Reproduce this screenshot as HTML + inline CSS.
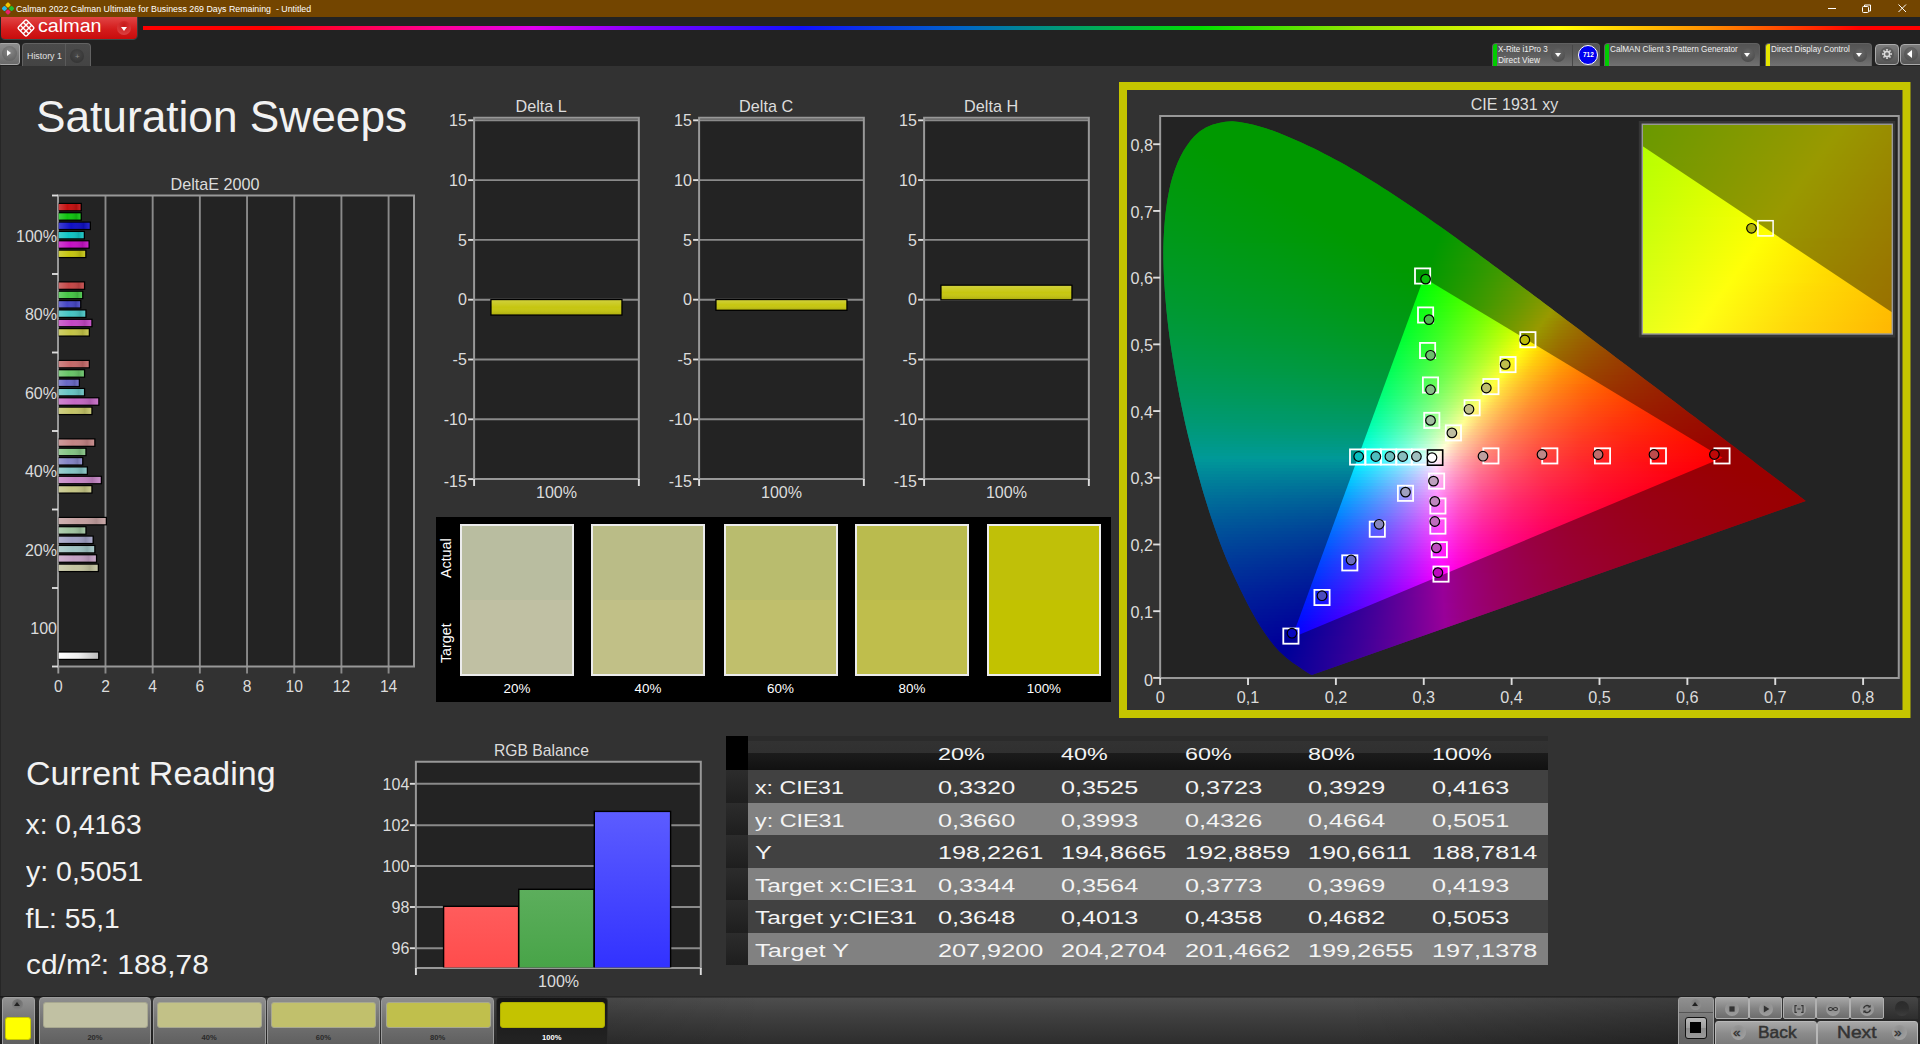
<!DOCTYPE html>
<html lang="en"><head><meta charset="utf-8"><title>Calman 2022 - Saturation Sweeps</title>
<style>
*{box-sizing:border-box}
html,body{margin:0;padding:0}
body{width:1920px;height:1044px;overflow:hidden;background:#323232;font-family:"Liberation Sans",sans-serif;color:#e8e8e8;position:relative}
.abs{position:absolute}
svg{position:absolute;left:0;top:0;overflow:visible}
svg text{font-family:"Liberation Sans",sans-serif}
.t{position:absolute;white-space:nowrap;transform-origin:0 0;line-height:1}
#titlebar{left:0;top:0;width:1920px;height:17px;background:#734500}
#toolbar{left:0;top:17px;width:1920px;height:49px;background:#222}
#main{left:0;top:66px;width:1920px;height:930px;background:#323232;border-left:1px solid #262626}
#bottombar{left:0;top:996px;width:1920px;height:48px;background:linear-gradient(90deg,rgba(0,0,0,.4),rgba(0,0,0,0) 40%,rgba(0,0,0,0) 70%,rgba(0,0,0,.38)),linear-gradient(#2a2a2a 0,#2a2a2a 2%,#4d4d4d 5%,#404040 40%,#2d2d2d 100%)}
.btn{position:absolute;background:linear-gradient(#8e8e8e,#6a6a6a 55%,#5c5c5c);border:1px solid #9a9a9a;border-radius:3px}
.dev{position:absolute;top:43px;height:23px;background:linear-gradient(#545454,#5c5c5c 45%,#727272);border-radius:4px 4px 0 0;border:1px solid #606060;border-bottom:none}
.dd{position:absolute;width:14px;height:14px;border-radius:50%;background:radial-gradient(circle at 50% 35%,#6a6a6a,#444)}
.dd:after{content:"";position:absolute;left:3.5px;top:5.5px;border:3.5px solid transparent;border-top:4px solid #fff;border-bottom:none}
</style></head>
<body>
<div id="titlebar" class="abs"></div><div id="toolbar" class="abs"></div><div id="main" class="abs"></div><div id="bottombar" class="abs"></div>
<svg width="14" height="15" style="left:1px;top:1px" viewBox="0 0 14 15"><g transform="translate(7 7.5) rotate(45)"><rect x="-4.6" y="-4.6" width="4.2" height="4.2" rx="1" fill="#f2c500"/><rect x="0.4" y="-4.6" width="4.2" height="4.2" rx="1" fill="#22c030"/><rect x="-4.6" y="0.4" width="4.2" height="4.2" rx="1" fill="#25b8e8"/><rect x="0.4" y="0.4" width="4.2" height="4.2" rx="1" fill="#e8206a"/></g></svg>
<span class="t" style="left:16.2px;top:4.62px;font-size:9.08px;color:#fff;transform:scaleX(0.97);">Calman 2022 Calman Ultimate for Business 269 Days Remaining&nbsp; - Untitled</span>
<svg width="100" height="17" style="left:1820px;top:0" viewBox="1820 0 100 17" fill="none" stroke="#fff" stroke-width="1"><path d="M1828 8.5h8"/><rect x="1862.5" y="6.5" width="6" height="6" rx="1"/><path d="M1864.5 6.5v-1.5h6v6h-2"/><path d="M1898.5 4.5l7.5 7.5M1906 4.5l-7.5 7.5"/></svg>
<div class="abs" style="left:1px;top:17px;width:136px;height:22px;background:linear-gradient(#e14545,#d41c1c 55%,#c80c0c);border-radius:0 0 4px 4px;box-shadow:0 1px 0 #3a4a4a,1px 0 0 #3a3a3a"></div>
<svg width="20" height="20" style="left:16px;top:18px" viewBox="0 0 20 20"><g transform="translate(10 10) rotate(45)" fill="none" stroke="#fff" stroke-width="1.4"><rect x="-6" y="-6" width="12" height="12" rx="1.5"/><path d="M-2-6v12M2-6v12M-6-2h12M-6 2h12"/></g></svg>
<span class="t" style="left:37.5px;top:17.49px;font-size:18.8px;color:#fff;transform:scaleX(1.05);">calman</span>
<div class="abs" style="left:117px;top:21px;width:14px;height:14px;border-radius:50%;background:radial-gradient(circle at 50% 30%,#c81818,#e04a4a)"></div>
<div class="abs" style="left:120.5px;top:26.5px;border:3.5px solid transparent;border-top:4px solid #fff;border-bottom:none"></div>
<div class="abs" style="left:143px;top:26.3px;width:1777px;height:4px;background:linear-gradient(90deg,#f00 0,#f00 7%,#ff0096 16.7%,#e000f0 22%,#8000ff 28%,#1010ff 37%,#0064c8 46%,#008c8c 50.2%,#00e000 59.5%,#96e600 68.5%,#ff0 79.7%,#ff8c00 88.2%,#f00 96.6%,#f00 100%)"></div>
<div class="btn" style="left:-2px;top:43px;width:22px;height:22px;background:linear-gradient(#8e8e8e,#6a6a6a);border-color:#a8a8a8"></div>
<div class="abs" style="left:2px;top:46px;width:15px;height:15px;border-radius:50%;background:radial-gradient(circle at 50% 35%,#888,#5a5a5a)"></div>
<div class="abs" style="left:7px;top:49.8px;border:3.6px solid transparent;border-left:4.6px solid #fff;border-right:none"></div>
<div class="abs" style="left:22px;top:43px;width:69px;height:23px;background:linear-gradient(#4a4a4a,#444);border:1px solid #626262;border-bottom:none;border-radius:4px 4px 0 0"></div>
<div class="abs" style="left:65px;top:44px;width:1px;height:22px;background:#5a5a5a"></div>
<span class="t" style="left:26.5px;top:51.7px;font-size:9.22px;color:#e0e0e0;transform:scaleX(0.96);">History 1</span>
<div class="abs" style="left:70px;top:49px;width:14px;height:14px;border-radius:50%;background:radial-gradient(circle at 50% 40%,#4a4a4a,#2e2e2e)"></div>
<span class="t" style="left:75px;top:53.23px;font-size:8px;color:#888;">+</span>
<div class="dev" style="left:1492px;width:107.5px"></div>
<div class="abs" style="left:1493px;top:44px;width:4px;height:22px;background:#0c0;border-radius:3px 0 0 0"></div>
<span class="t" style="left:1498.3px;top:45.82px;font-size:8.24px;color:#f0f0f0;transform:scaleX(0.97);">X-Rite i1Pro 3</span>
<span class="t" style="left:1498.3px;top:56.82px;font-size:8.24px;color:#f0f0f0;transform:scaleX(1.01);">Direct View</span>
<div class="dd" style="left:1551px;top:47.5px"></div>
<div class="abs" style="left:1572px;top:45px;width:1px;height:21px;background:#484848"></div>
<div class="abs" style="left:1577.5px;top:44.5px;width:20.5px;height:20.5px;border-radius:50%;background:#0000f0;border:1px solid #fff"></div>
<span class="t" style="left:1582.5px;top:51.08px;font-size:7.82px;color:#fff;transform:scaleX(0.83);font-weight:bold;">712</span>
<div class="dev" style="left:1603.6px;width:156.4px"></div>
<div class="abs" style="left:1604.6px;top:44px;width:4px;height:22px;background:#0c0;border-radius:3px 0 0 0"></div>
<span class="t" style="left:1609.9px;top:45.82px;font-size:8.24px;color:#f0f0f0;transform:scaleX(0.99);">CalMAN Client 3 Pattern Generator</span>
<div class="dd" style="left:1740.5px;top:47.5px"></div>
<div class="dev" style="left:1764.6px;width:107.4px"></div>
<div class="abs" style="left:1765.6px;top:44px;width:4px;height:22px;background:#e6e600;border-radius:3px 0 0 0"></div>
<span class="t" style="left:1770.9px;top:45.82px;font-size:8.24px;color:#f0f0f0;transform:scaleX(0.99);">Direct Display Control</span>
<div class="dd" style="left:1852.5px;top:47.5px"></div>
<div class="btn" style="left:1874.5px;top:43.5px;width:24.5px;height:21.5px;background:linear-gradient(#7c7c7c,#555);border-color:#aaa;border-radius:4px"></div>
<div class="abs" style="left:1880px;top:47px;width:14px;height:14px;border-radius:50%;background:radial-gradient(circle at 50% 35%,#6e6e6e,#484848)"></div>
<svg width="12" height="12" style="left:1881px;top:48px" viewBox="-6 -6 12 12"><g fill="none" stroke="#ddd"><circle r="2.6" stroke-width="1.5"/><path d="M0 -3.2V-5" stroke-width="1.6" transform="rotate(0)"/><path d="M0 -3.2V-5" stroke-width="1.6" transform="rotate(45)"/><path d="M0 -3.2V-5" stroke-width="1.6" transform="rotate(90)"/><path d="M0 -3.2V-5" stroke-width="1.6" transform="rotate(135)"/><path d="M0 -3.2V-5" stroke-width="1.6" transform="rotate(180)"/><path d="M0 -3.2V-5" stroke-width="1.6" transform="rotate(225)"/><path d="M0 -3.2V-5" stroke-width="1.6" transform="rotate(270)"/><path d="M0 -3.2V-5" stroke-width="1.6" transform="rotate(315)"/></g></svg>
<div class="btn" style="left:1899.5px;top:43.5px;width:24px;height:21.5px;background:linear-gradient(#7c7c7c,#555);border-color:#aaa;border-radius:4px"></div>
<div class="abs" style="left:1904px;top:47px;width:14px;height:14px;border-radius:50%;background:radial-gradient(circle at 50% 35%,#6e6e6e,#484848)"></div>
<div class="abs" style="left:1906.5px;top:50px;border:4px solid transparent;border-right:5px solid #fff;border-left:none"></div>
<span class="t" style="left:36.3px;top:94.31px;font-size:45.11px;color:#f2f2f2;transform:scaleX(0.98);">Saturation Sweeps</span>
<svg width="1920" height="1044" viewBox="0 0 1920 1044">
<defs><linearGradient id="bh" x1="0" x2="1" y1="0" y2="0"><stop offset="0" stop-color="#fff" stop-opacity=".2"/><stop offset=".4" stop-color="#fff" stop-opacity="0"/><stop offset=".8" stop-color="#000" stop-opacity=".12"/><stop offset="1" stop-color="#fff" stop-opacity=".1"/></linearGradient><linearGradient id="bv" x1="0" x2="0" y1="0" y2="1"><stop offset="0" stop-color="#fff" stop-opacity=".18"/><stop offset=".5" stop-color="#fff" stop-opacity="0"/><stop offset="1" stop-color="#000" stop-opacity=".12"/></linearGradient><linearGradient id="bv2" x1="0" x2="0" y1="0" y2="1"><stop offset="0" stop-color="#fff" stop-opacity=".12"/><stop offset="1" stop-color="#000" stop-opacity=".05"/></linearGradient></defs>
<rect x="58" y="195.5" width="356" height="471.0" fill="#232323"/>
<path d="M105.49 195.5V673.5" stroke="#8a8a8a" stroke-width="1.9"/>
<path d="M152.67 195.5V673.5" stroke="#8a8a8a" stroke-width="1.9"/>
<path d="M199.86 195.5V673.5" stroke="#8a8a8a" stroke-width="1.9"/>
<path d="M247.04 195.5V673.5" stroke="#8a8a8a" stroke-width="1.9"/>
<path d="M294.23 195.5V673.5" stroke="#8a8a8a" stroke-width="1.9"/>
<path d="M341.41 195.5V673.5" stroke="#8a8a8a" stroke-width="1.9"/>
<path d="M388.6 195.5V673.5" stroke="#8a8a8a" stroke-width="1.9"/>
<path d="M58.3 666.5V673.5" stroke="#989898" stroke-width="1.9"/>
<path d="M58 195.5H414V666.5H58Z" fill="none" stroke="#989898" stroke-width="2"/>
<path d="M52 195.5H58" stroke="#ddd" stroke-width="1.9"/>
<path d="M52 274H58" stroke="#ddd" stroke-width="1.9"/>
<path d="M52 352.5H58" stroke="#ddd" stroke-width="1.9"/>
<path d="M52 431H58" stroke="#ddd" stroke-width="1.9"/>
<path d="M52 509.5H58" stroke="#ddd" stroke-width="1.9"/>
<path d="M52 588H58" stroke="#ddd" stroke-width="1.9"/>
<path d="M52 666.5H58" stroke="#ddd" stroke-width="1.9"/>
<text x="215" y="189.8" font-size="16.2" fill="#dcdcdc" text-anchor="middle">DeltaE 2000</text>
<text x="57" y="241.85" font-size="16.06" fill="#dcdcdc" text-anchor="end">100%</text>
<text x="57" y="320.35" font-size="16.06" fill="#dcdcdc" text-anchor="end">80%</text>
<text x="57" y="398.85" font-size="16.06" fill="#dcdcdc" text-anchor="end">60%</text>
<text x="57" y="477.35" font-size="16.06" fill="#dcdcdc" text-anchor="end">40%</text>
<text x="57" y="555.85" font-size="16.06" fill="#dcdcdc" text-anchor="end">20%</text>
<text x="57" y="634.35" font-size="16.06" fill="#dcdcdc" text-anchor="end">100</text>
<text x="58.3" y="691.5" font-size="15.64" fill="#dcdcdc" text-anchor="middle">0</text>
<text x="105.49" y="691.5" font-size="15.64" fill="#dcdcdc" text-anchor="middle">2</text>
<text x="152.67" y="691.5" font-size="15.64" fill="#dcdcdc" text-anchor="middle">4</text>
<text x="199.86" y="691.5" font-size="15.64" fill="#dcdcdc" text-anchor="middle">6</text>
<text x="247.04" y="691.5" font-size="15.64" fill="#dcdcdc" text-anchor="middle">8</text>
<text x="294.23" y="691.5" font-size="15.64" fill="#dcdcdc" text-anchor="middle">10</text>
<text x="341.41" y="691.5" font-size="15.64" fill="#dcdcdc" text-anchor="middle">12</text>
<text x="388.6" y="691.5" font-size="15.64" fill="#dcdcdc" text-anchor="middle">14</text>
<rect x="58.7" y="202.8" width="23.2" height="8.6" fill="#000"/>
<rect x="58.7" y="204" width="21.9" height="6.2" fill="#c41010"/><rect x="58.7" y="204" width="21.9" height="6.2" fill="url(#bh)"/>
<rect x="58.7" y="212.15" width="23.2" height="8.6" fill="#000"/>
<rect x="58.7" y="213.35" width="21.9" height="6.2" fill="#10c410"/><rect x="58.7" y="213.35" width="21.9" height="6.2" fill="url(#bh)"/>
<rect x="58.7" y="221.5" width="32.3" height="8.6" fill="#000"/>
<rect x="58.7" y="222.7" width="31" height="6.2" fill="#1010c4"/><rect x="58.7" y="222.7" width="31" height="6.2" fill="url(#bh)"/>
<rect x="58.7" y="230.85" width="26.3" height="8.6" fill="#000"/>
<rect x="58.7" y="232.05" width="25" height="6.2" fill="#10c4c4"/><rect x="58.7" y="232.05" width="25" height="6.2" fill="url(#bh)"/>
<rect x="58.7" y="240.2" width="31.05" height="8.6" fill="#000"/>
<rect x="58.7" y="241.4" width="29.75" height="6.2" fill="#c410c4"/><rect x="58.7" y="241.4" width="29.75" height="6.2" fill="url(#bh)"/>
<rect x="58.7" y="249.55" width="27.8" height="8.6" fill="#000"/>
<rect x="58.7" y="250.75" width="26.5" height="6.2" fill="#c4c410"/><rect x="58.7" y="250.75" width="26.5" height="6.2" fill="url(#bh)"/>
<rect x="58.7" y="281.3" width="26.5" height="8.6" fill="#000"/>
<rect x="58.7" y="282.5" width="25.2" height="6.2" fill="#c44646"/><rect x="58.7" y="282.5" width="25.2" height="6.2" fill="url(#bh)"/>
<rect x="58.7" y="290.65" width="24.7" height="8.6" fill="#000"/>
<rect x="58.7" y="291.85" width="23.4" height="6.2" fill="#46c446"/><rect x="58.7" y="291.85" width="23.4" height="6.2" fill="url(#bh)"/>
<rect x="58.7" y="300" width="22.7" height="8.6" fill="#000"/>
<rect x="58.7" y="301.2" width="21.4" height="6.2" fill="#4646c4"/><rect x="58.7" y="301.2" width="21.4" height="6.2" fill="url(#bh)"/>
<rect x="58.7" y="309.35" width="27.9" height="8.6" fill="#000"/>
<rect x="58.7" y="310.55" width="26.6" height="6.2" fill="#46c4c4"/><rect x="58.7" y="310.55" width="26.6" height="6.2" fill="url(#bh)"/>
<rect x="58.7" y="318.7" width="33.9" height="8.6" fill="#000"/>
<rect x="58.7" y="319.9" width="32.6" height="6.2" fill="#c446c4"/><rect x="58.7" y="319.9" width="32.6" height="6.2" fill="url(#bh)"/>
<rect x="58.7" y="328.05" width="31.3" height="8.6" fill="#000"/>
<rect x="58.7" y="329.25" width="30" height="6.2" fill="#c4c446"/><rect x="58.7" y="329.25" width="30" height="6.2" fill="url(#bh)"/>
<rect x="58.7" y="359.8" width="31.3" height="8.6" fill="#000"/>
<rect x="58.7" y="361" width="30" height="6.2" fill="#c46868"/><rect x="58.7" y="361" width="30" height="6.2" fill="url(#bh)"/>
<rect x="58.7" y="369.15" width="26.5" height="8.6" fill="#000"/>
<rect x="58.7" y="370.35" width="25.2" height="6.2" fill="#68c468"/><rect x="58.7" y="370.35" width="25.2" height="6.2" fill="url(#bh)"/>
<rect x="58.7" y="378.5" width="21.3" height="8.6" fill="#000"/>
<rect x="58.7" y="379.7" width="20" height="6.2" fill="#6868c4"/><rect x="58.7" y="379.7" width="20" height="6.2" fill="url(#bh)"/>
<rect x="58.7" y="387.85" width="26.5" height="8.6" fill="#000"/>
<rect x="58.7" y="389.05" width="25.2" height="6.2" fill="#68c4c4"/><rect x="58.7" y="389.05" width="25.2" height="6.2" fill="url(#bh)"/>
<rect x="58.7" y="397.2" width="40.8" height="8.6" fill="#000"/>
<rect x="58.7" y="398.4" width="39.5" height="6.2" fill="#c468c4"/><rect x="58.7" y="398.4" width="39.5" height="6.2" fill="url(#bh)"/>
<rect x="58.7" y="406.55" width="33.9" height="8.6" fill="#000"/>
<rect x="58.7" y="407.75" width="32.6" height="6.2" fill="#c4c468"/><rect x="58.7" y="407.75" width="32.6" height="6.2" fill="url(#bh)"/>
<rect x="58.7" y="438.3" width="36.8" height="8.6" fill="#000"/>
<rect x="58.7" y="439.5" width="35.5" height="6.2" fill="#c48484"/><rect x="58.7" y="439.5" width="35.5" height="6.2" fill="url(#bh)"/>
<rect x="58.7" y="447.65" width="27.9" height="8.6" fill="#000"/>
<rect x="58.7" y="448.85" width="26.6" height="6.2" fill="#84c484"/><rect x="58.7" y="448.85" width="26.6" height="6.2" fill="url(#bh)"/>
<rect x="58.7" y="457" width="24.7" height="8.6" fill="#000"/>
<rect x="58.7" y="458.2" width="23.4" height="6.2" fill="#8484c4"/><rect x="58.7" y="458.2" width="23.4" height="6.2" fill="url(#bh)"/>
<rect x="58.7" y="466.35" width="29.3" height="8.6" fill="#000"/>
<rect x="58.7" y="467.55" width="28" height="6.2" fill="#84c4c4"/><rect x="58.7" y="467.55" width="28" height="6.2" fill="url(#bh)"/>
<rect x="58.7" y="475.7" width="43.3" height="8.6" fill="#000"/>
<rect x="58.7" y="476.9" width="42" height="6.2" fill="#c484c4"/><rect x="58.7" y="476.9" width="42" height="6.2" fill="url(#bh)"/>
<rect x="58.7" y="485.05" width="33.9" height="8.6" fill="#000"/>
<rect x="58.7" y="486.25" width="32.6" height="6.2" fill="#c4c484"/><rect x="58.7" y="486.25" width="32.6" height="6.2" fill="url(#bh)"/>
<rect x="58.7" y="516.8" width="48.3" height="8.6" fill="#000"/>
<rect x="58.7" y="518" width="47" height="6.2" fill="#c4a0a0"/><rect x="58.7" y="518" width="47" height="6.2" fill="url(#bh)"/>
<rect x="58.7" y="526.15" width="27.9" height="8.6" fill="#000"/>
<rect x="58.7" y="527.35" width="26.6" height="6.2" fill="#a0c4a0"/><rect x="58.7" y="527.35" width="26.6" height="6.2" fill="url(#bh)"/>
<rect x="58.7" y="535.5" width="35.1" height="8.6" fill="#000"/>
<rect x="58.7" y="536.7" width="33.8" height="6.2" fill="#a0a0c4"/><rect x="58.7" y="536.7" width="33.8" height="6.2" fill="url(#bh)"/>
<rect x="58.7" y="544.85" width="36.8" height="8.6" fill="#000"/>
<rect x="58.7" y="546.05" width="35.5" height="6.2" fill="#a0c4c4"/><rect x="58.7" y="546.05" width="35.5" height="6.2" fill="url(#bh)"/>
<rect x="58.7" y="554.2" width="38.5" height="8.6" fill="#000"/>
<rect x="58.7" y="555.4" width="37.2" height="6.2" fill="#c4a0c4"/><rect x="58.7" y="555.4" width="37.2" height="6.2" fill="url(#bh)"/>
<rect x="58.7" y="563.55" width="40.3" height="8.6" fill="#000"/>
<rect x="58.7" y="564.75" width="39" height="6.2" fill="#c4c4a0"/><rect x="58.7" y="564.75" width="39" height="6.2" fill="url(#bh)"/>
<rect x="58.7" y="651.4" width="40.7" height="8.6" fill="#000"/>
<linearGradient id="wb" x1="0" x2="1" y1="0" y2="0"><stop offset="0" stop-color="#fff"/><stop offset=".5" stop-color="#eee"/><stop offset="1" stop-color="#bbb"/></linearGradient>
<rect x="58.7" y="652.6" width="39.4" height="6.2" fill="url(#wb)"/>
<rect x="474.1" y="117.75" width="164.75" height="361.35" fill="#232323"/>
<path d="M474.1 120.3H638.85" stroke="#8a8a8a" stroke-width="1.9"/>
<path d="M468.1 120.3H474.1" stroke="#ddd" stroke-width="1.9"/>
<text x="466.9" y="125.9" font-size="16.06" fill="#dcdcdc" text-anchor="end">15</text>
<path d="M474.1 180.1H638.85" stroke="#8a8a8a" stroke-width="1.9"/>
<path d="M468.1 180.1H474.1" stroke="#ddd" stroke-width="1.9"/>
<text x="466.9" y="185.7" font-size="16.06" fill="#dcdcdc" text-anchor="end">10</text>
<path d="M474.1 239.9H638.85" stroke="#8a8a8a" stroke-width="1.9"/>
<path d="M468.1 239.9H474.1" stroke="#ddd" stroke-width="1.9"/>
<text x="466.9" y="245.5" font-size="16.06" fill="#dcdcdc" text-anchor="end">5</text>
<path d="M474.1 299.7H638.85" stroke="#8a8a8a" stroke-width="1.9"/>
<path d="M468.1 299.7H474.1" stroke="#ddd" stroke-width="1.9"/>
<text x="466.9" y="305.3" font-size="16.06" fill="#dcdcdc" text-anchor="end">0</text>
<path d="M474.1 359.5H638.85" stroke="#8a8a8a" stroke-width="1.9"/>
<path d="M468.1 359.5H474.1" stroke="#ddd" stroke-width="1.9"/>
<text x="466.9" y="365.1" font-size="16.06" fill="#dcdcdc" text-anchor="end">-5</text>
<path d="M474.1 419.3H638.85" stroke="#8a8a8a" stroke-width="1.9"/>
<path d="M468.1 419.3H474.1" stroke="#ddd" stroke-width="1.9"/>
<text x="466.9" y="424.9" font-size="16.06" fill="#dcdcdc" text-anchor="end">-10</text>
<path d="M468.1 479.1H474.1" stroke="#ddd" stroke-width="1.9"/>
<text x="466.9" y="487" font-size="16.06" fill="#dcdcdc" text-anchor="end">-15</text>
<path d="M474.1 117.75H638.85V479.1H474.1Z" fill="none" stroke="#989898" stroke-width="2"/>
<path d="M474.1 479.1v7M638.85 479.1v7" stroke="#ddd" stroke-width="1.9"/>
<text x="541.1" y="112.3" font-size="16.2" fill="#dcdcdc" text-anchor="middle">Delta L</text>
<text x="556.48" y="497.6" font-size="16.06" fill="#dcdcdc" text-anchor="middle">100%</text>
<rect x="490.3" y="298.9" width="132.3" height="16.79" fill="#000"/>
<rect x="491.6" y="300.2" width="129.7" height="14.19" fill="#c6c610"/>
<rect x="491.6" y="300.2" width="129.7" height="14.19" fill="url(#bv)"/>
<rect x="699.1" y="117.75" width="164.75" height="361.35" fill="#232323"/>
<path d="M699.1 120.3H863.85" stroke="#8a8a8a" stroke-width="1.9"/>
<path d="M693.1 120.3H699.1" stroke="#ddd" stroke-width="1.9"/>
<text x="691.9" y="125.9" font-size="16.06" fill="#dcdcdc" text-anchor="end">15</text>
<path d="M699.1 180.1H863.85" stroke="#8a8a8a" stroke-width="1.9"/>
<path d="M693.1 180.1H699.1" stroke="#ddd" stroke-width="1.9"/>
<text x="691.9" y="185.7" font-size="16.06" fill="#dcdcdc" text-anchor="end">10</text>
<path d="M699.1 239.9H863.85" stroke="#8a8a8a" stroke-width="1.9"/>
<path d="M693.1 239.9H699.1" stroke="#ddd" stroke-width="1.9"/>
<text x="691.9" y="245.5" font-size="16.06" fill="#dcdcdc" text-anchor="end">5</text>
<path d="M699.1 299.7H863.85" stroke="#8a8a8a" stroke-width="1.9"/>
<path d="M693.1 299.7H699.1" stroke="#ddd" stroke-width="1.9"/>
<text x="691.9" y="305.3" font-size="16.06" fill="#dcdcdc" text-anchor="end">0</text>
<path d="M699.1 359.5H863.85" stroke="#8a8a8a" stroke-width="1.9"/>
<path d="M693.1 359.5H699.1" stroke="#ddd" stroke-width="1.9"/>
<text x="691.9" y="365.1" font-size="16.06" fill="#dcdcdc" text-anchor="end">-5</text>
<path d="M699.1 419.3H863.85" stroke="#8a8a8a" stroke-width="1.9"/>
<path d="M693.1 419.3H699.1" stroke="#ddd" stroke-width="1.9"/>
<text x="691.9" y="424.9" font-size="16.06" fill="#dcdcdc" text-anchor="end">-10</text>
<path d="M693.1 479.1H699.1" stroke="#ddd" stroke-width="1.9"/>
<text x="691.9" y="487" font-size="16.06" fill="#dcdcdc" text-anchor="end">-15</text>
<path d="M699.1 117.75H863.85V479.1H699.1Z" fill="none" stroke="#989898" stroke-width="2"/>
<path d="M699.1 479.1v7M863.85 479.1v7" stroke="#ddd" stroke-width="1.9"/>
<text x="766.1" y="112.3" font-size="16.2" fill="#dcdcdc" text-anchor="middle">Delta C</text>
<text x="781.48" y="497.6" font-size="16.06" fill="#dcdcdc" text-anchor="middle">100%</text>
<rect x="715.3" y="298.9" width="132.3" height="12.01" fill="#000"/>
<rect x="716.6" y="300.2" width="129.7" height="9.41" fill="#c6c610"/>
<rect x="716.6" y="300.2" width="129.7" height="9.41" fill="url(#bv)"/>
<rect x="924.1" y="117.75" width="164.75" height="361.35" fill="#232323"/>
<path d="M924.1 120.3H1088.85" stroke="#8a8a8a" stroke-width="1.9"/>
<path d="M918.1 120.3H924.1" stroke="#ddd" stroke-width="1.9"/>
<text x="916.9" y="125.9" font-size="16.06" fill="#dcdcdc" text-anchor="end">15</text>
<path d="M924.1 180.1H1088.85" stroke="#8a8a8a" stroke-width="1.9"/>
<path d="M918.1 180.1H924.1" stroke="#ddd" stroke-width="1.9"/>
<text x="916.9" y="185.7" font-size="16.06" fill="#dcdcdc" text-anchor="end">10</text>
<path d="M924.1 239.9H1088.85" stroke="#8a8a8a" stroke-width="1.9"/>
<path d="M918.1 239.9H924.1" stroke="#ddd" stroke-width="1.9"/>
<text x="916.9" y="245.5" font-size="16.06" fill="#dcdcdc" text-anchor="end">5</text>
<path d="M924.1 299.7H1088.85" stroke="#8a8a8a" stroke-width="1.9"/>
<path d="M918.1 299.7H924.1" stroke="#ddd" stroke-width="1.9"/>
<text x="916.9" y="305.3" font-size="16.06" fill="#dcdcdc" text-anchor="end">0</text>
<path d="M924.1 359.5H1088.85" stroke="#8a8a8a" stroke-width="1.9"/>
<path d="M918.1 359.5H924.1" stroke="#ddd" stroke-width="1.9"/>
<text x="916.9" y="365.1" font-size="16.06" fill="#dcdcdc" text-anchor="end">-5</text>
<path d="M924.1 419.3H1088.85" stroke="#8a8a8a" stroke-width="1.9"/>
<path d="M918.1 419.3H924.1" stroke="#ddd" stroke-width="1.9"/>
<text x="916.9" y="424.9" font-size="16.06" fill="#dcdcdc" text-anchor="end">-10</text>
<path d="M918.1 479.1H924.1" stroke="#ddd" stroke-width="1.9"/>
<text x="916.9" y="487" font-size="16.06" fill="#dcdcdc" text-anchor="end">-15</text>
<path d="M924.1 117.75H1088.85V479.1H924.1Z" fill="none" stroke="#989898" stroke-width="2"/>
<path d="M924.1 479.1v7M1088.85 479.1v7" stroke="#ddd" stroke-width="1.9"/>
<text x="991.1" y="112.3" font-size="16.2" fill="#dcdcdc" text-anchor="middle">Delta H</text>
<text x="1006.47" y="497.6" font-size="16.06" fill="#dcdcdc" text-anchor="middle">100%</text>
<rect x="940.3" y="284.55" width="132.3" height="15.95" fill="#000"/>
<rect x="941.6" y="285.85" width="129.7" height="13.35" fill="#c6c610"/>
<rect x="941.6" y="285.85" width="129.7" height="13.35" fill="url(#bv)"/>
<rect x="415.9" y="761.8" width="284.9" height="206.2" fill="#232323"/>
<path d="M415.9 783.8H700.8" stroke="#8a8a8a" stroke-width="1.9"/>
<path d="M409.9 783.8H415.9" stroke="#ddd" stroke-width="1.9"/>
<text x="409.4" y="789.5" font-size="16.06" fill="#dcdcdc" text-anchor="end">104</text>
<path d="M415.9 825.2H700.8" stroke="#8a8a8a" stroke-width="1.9"/>
<path d="M409.9 825.2H415.9" stroke="#ddd" stroke-width="1.9"/>
<text x="409.4" y="830.9" font-size="16.06" fill="#dcdcdc" text-anchor="end">102</text>
<path d="M415.9 866.0H700.8" stroke="#8a8a8a" stroke-width="1.9"/>
<path d="M409.9 866.0H415.9" stroke="#ddd" stroke-width="1.9"/>
<text x="409.4" y="871.7" font-size="16.06" fill="#dcdcdc" text-anchor="end">100</text>
<path d="M415.9 907.0H700.8" stroke="#8a8a8a" stroke-width="1.9"/>
<path d="M409.9 907.0H415.9" stroke="#ddd" stroke-width="1.9"/>
<text x="409.4" y="912.7" font-size="16.06" fill="#dcdcdc" text-anchor="end">98</text>
<path d="M415.9 948.2H700.8" stroke="#8a8a8a" stroke-width="1.9"/>
<path d="M409.9 948.2H415.9" stroke="#ddd" stroke-width="1.9"/>
<text x="409.4" y="953.9" font-size="16.06" fill="#dcdcdc" text-anchor="end">96</text>
<path d="M415.9 761.8H700.8V968.0H415.9Z" fill="none" stroke="#989898" stroke-width="2"/>
<path d="M415.9 968.0v7M700.8 968.0v7" stroke="#ddd" stroke-width="1.9"/>
<text x="541.4" y="756.2" font-size="16.2" fill="#dcdcdc" text-anchor="middle" textLength="95.02" lengthAdjust="spacingAndGlyphs">RGB Balance</text>
<text x="558.6" y="986.7" font-size="16.06" fill="#dcdcdc" text-anchor="middle">100%</text>
<linearGradient id="gr" x1="0" x2="0" y1="0" y2="1"><stop offset="0" stop-color="#ff5c5c"/><stop offset="1" stop-color="#ff4c4c"/></linearGradient><linearGradient id="gg" x1="0" x2="0" y1="0" y2="1"><stop offset="0" stop-color="#5cae5c"/><stop offset="1" stop-color="#48a448"/></linearGradient><linearGradient id="gb" x1="0" x2="0" y1="0" y2="1"><stop offset="0" stop-color="#5c5cff"/><stop offset="1" stop-color="#3232ff"/></linearGradient>
<rect x="442.9" y="905.6" width="76.4" height="61.8" fill="#000"/>
<rect x="444.3" y="907" width="73.6" height="60.4" fill="url(#gr)"/>
<rect x="518.1" y="888.6" width="76.7" height="78.8" fill="#000"/>
<rect x="519.5" y="890" width="73.9" height="77.4" fill="url(#gg)"/>
<rect x="593.6" y="810.7" width="77.7" height="156.7" fill="#000"/>
<rect x="595" y="812.1" width="74.9" height="155.3" fill="url(#gb)"/>
<rect x="1123" y="86" width="783.5" height="628" fill="#323232" stroke="#c4c400" stroke-width="8"/>
<rect x="1160.15" y="116.1" width="738.5999999999999" height="561.85" fill="#232323"/>
<defs>
<clipPath id="hs"><polygon points="1313.13,674.56 1312.87,674.63 1312.43,674.7 1311.81,674.7 1310.76,674.5 1309.79,674.03 1308.56,673.3 1306.81,672.16 1304.61,670.63 1301.71,668.69 1297.75,666.09 1292.83,662.76 1286.68,658.09 1279.21,651.28 1274.53,646.1 1269.2,639.34 1265.28,633.86 1261.05,627.55 1256.46,620 1253.51,614.83 1250.45,609.27 1247.24,603.23 1243.89,596.62 1240.38,589.38 1238.08,584.53 1235.69,579.48 1233.23,574.22 1230.72,568.71 1228.17,562.96 1225.61,556.93 1223.05,550.62 1220.52,544.01 1218.67,539.01 1216.81,533.85 1214.94,528.54 1213.07,523.09 1211.18,517.48 1209.3,511.74 1207.42,505.87 1205.55,499.86 1203.7,493.73 1201.86,487.48 1200.04,481.11 1198.51,475.59 1196.96,469.94 1195.4,464.16 1193.84,458.27 1192.29,452.29 1190.75,446.22 1189.22,440.08 1187.72,433.89 1186.25,427.65 1184.82,421.39 1183.43,415.12 1182.09,408.85 1180.8,402.59 1179.64,396.75 1178.49,390.83 1177.36,384.86 1176.25,378.84 1175.17,372.78 1174.12,366.7 1173.11,360.61 1172.14,354.52 1171.21,348.44 1170.32,342.4 1169.49,336.39 1168.72,330.43 1168,324.54 1167.36,318.73 1166.66,312 1166.02,305.27 1165.44,298.56 1164.91,291.87 1164.46,285.23 1164.08,278.64 1163.77,272.13 1163.55,265.7 1163.41,259.37 1163.37,253.14 1163.42,247.04 1163.58,241.08 1163.89,234.05 1164.32,227.1 1164.87,220.25 1165.55,213.54 1166.36,206.99 1167.3,200.61 1168.36,194.45 1169.56,188.51 1170.89,182.83 1172.36,177.44 1174.73,170.14 1177.41,163.25 1180.38,156.8 1183.59,150.84 1187,145.4 1190.6,140.51 1194.33,136.21 1199.9,131.28 1205.93,127.54 1212.27,124.8 1218.82,122.9 1225.44,121.67 1232.19,121.3 1239.15,121.88 1246.25,123.16 1253.39,124.87 1260.5,126.74 1266.42,128.48 1272.4,130.53 1278.38,132.82 1284.35,135.26 1290.26,137.77 1296.08,140.28 1301.81,142.81 1307.47,145.42 1313.08,148.1 1318.63,150.84 1324.16,153.65 1329.65,156.49 1335.11,159.39 1340.51,162.35 1345.89,165.36 1351.23,168.43 1356.57,171.54 1361.9,174.71 1367.23,177.92 1372.55,181.19 1377.85,184.52 1383.15,187.88 1388.43,191.29 1393.71,194.72 1398.97,198.19 1404.22,201.7 1409.46,205.25 1414.7,208.83 1419.93,212.44 1425.17,216.07 1430.4,219.72 1435.63,223.4 1440.85,227.11 1446.08,230.84 1451.3,234.58 1456.54,238.35 1461.78,242.13 1467.02,245.94 1472.27,249.76 1477.52,253.6 1482.76,257.44 1487.99,261.3 1493.22,265.16 1498.44,269.03 1503.66,272.92 1508.87,276.8 1514.07,280.69 1519.27,284.58 1524.48,288.46 1529.68,292.35 1534.88,296.24 1540.06,300.12 1545.23,303.99 1550.38,307.86 1555.51,311.72 1560.62,315.57 1565.72,319.42 1570.8,323.26 1575.85,327.08 1580.87,330.87 1585.87,334.66 1590.85,338.43 1595.81,342.18 1600.74,345.91 1605.63,349.61 1610.48,353.29 1616.27,357.67 1622.01,362.01 1627.69,366.32 1633.32,370.57 1638.87,374.77 1644.35,378.91 1649.78,383 1655.14,387.04 1660.41,391.01 1665.58,394.92 1670.65,398.76 1675.64,402.55 1680.52,406.26 1685.29,409.88 1689.92,413.39 1695.49,417.62 1700.86,421.68 1706.05,425.6 1711.09,429.41 1717.61,434.33 1723.84,439.04 1729.72,443.48 1735.22,447.61 1740.37,451.46 1745.19,455.09 1751.81,460.11 1757.75,464.63 1763.05,468.65 1767.77,472.23 1775.77,478.24 1782.18,483.11 1787.54,487.18 1791.94,490.51 1795.45,493.11 1798.09,495.11 1800.11,496.65 1801.6,497.78 1805.73,500.92"/></clipPath>
<clipPath id="tri"><polygon points="1722.52,457.76 1423.76,277.64 1291.96,637.87"/></clipPath>
<linearGradient id="c0" gradientUnits="userSpaceOnUse" x1="1217" x2="1247" y1="0" y2="0"><stop offset="0" stop-color="#00ff00"/><stop offset="1" stop-color="#00ff00"/></linearGradient>
<linearGradient id="c1" gradientUnits="userSpaceOnUse" x1="1208" x2="1259" y1="0" y2="0"><stop offset="0" stop-color="#00ff00"/><stop offset="1" stop-color="#00ff00"/></linearGradient>
<linearGradient id="c2" gradientUnits="userSpaceOnUse" x1="1202" x2="1269" y1="0" y2="0"><stop offset="0" stop-color="#00ff00"/><stop offset="1" stop-color="#00ff00"/></linearGradient>
<linearGradient id="c3" gradientUnits="userSpaceOnUse" x1="1198" x2="1278" y1="0" y2="0"><stop offset="0" stop-color="#00ff00"/><stop offset="1" stop-color="#00ff00"/></linearGradient>
<linearGradient id="c4" gradientUnits="userSpaceOnUse" x1="1194" x2="1285" y1="0" y2="0"><stop offset="0" stop-color="#00ff00"/><stop offset="1" stop-color="#00ff00"/></linearGradient>
<linearGradient id="c5" gradientUnits="userSpaceOnUse" x1="1191" x2="1292" y1="0" y2="0"><stop offset="0" stop-color="#00ff00"/><stop offset="1" stop-color="#00ff00"/></linearGradient>
<linearGradient id="c6" gradientUnits="userSpaceOnUse" x1="1189" x2="1299" y1="0" y2="0"><stop offset="0" stop-color="#00ff01"/><stop offset="1" stop-color="#00ff00"/></linearGradient>
<linearGradient id="c7" gradientUnits="userSpaceOnUse" x1="1187" x2="1306" y1="0" y2="0"><stop offset="0" stop-color="#00ff02"/><stop offset="1" stop-color="#00ff00"/></linearGradient>
<linearGradient id="c8" gradientUnits="userSpaceOnUse" x1="1184" x2="1312" y1="0" y2="0"><stop offset="0" stop-color="#00ff04"/><stop offset=".164" stop-color="#00ff00"/><stop offset="1" stop-color="#00ff00"/></linearGradient>
<linearGradient id="c9" gradientUnits="userSpaceOnUse" x1="1183" x2="1318" y1="0" y2="0"><stop offset="0" stop-color="#00ff05"/><stop offset=".2" stop-color="#00ff00"/><stop offset="1" stop-color="#00ff00"/></linearGradient>
<linearGradient id="c10" gradientUnits="userSpaceOnUse" x1="1181" x2="1324" y1="0" y2="0"><stop offset="0" stop-color="#00ff07"/><stop offset=".238" stop-color="#00ff00"/><stop offset="1" stop-color="#00ff00"/></linearGradient>
<linearGradient id="c11" gradientUnits="userSpaceOnUse" x1="1179" x2="1330" y1="0" y2="0"><stop offset="0" stop-color="#00ff08"/><stop offset=".272" stop-color="#00ff00"/><stop offset="1" stop-color="#00ff00"/></linearGradient>
<linearGradient id="c12" gradientUnits="userSpaceOnUse" x1="1178" x2="1336" y1="0" y2="0"><stop offset="0" stop-color="#00ff09"/><stop offset=".297" stop-color="#00ff00"/><stop offset="1" stop-color="#00ff00"/></linearGradient>
<linearGradient id="c13" gradientUnits="userSpaceOnUse" x1="1176" x2="1341" y1="0" y2="0"><stop offset="0" stop-color="#00ff0b"/><stop offset=".327" stop-color="#00ff00"/><stop offset="1" stop-color="#00ff00"/></linearGradient>
<linearGradient id="c14" gradientUnits="userSpaceOnUse" x1="1175" x2="1347" y1="0" y2="0"><stop offset="0" stop-color="#00ff0c"/><stop offset=".349" stop-color="#00ff00"/><stop offset="1" stop-color="#00ff00"/></linearGradient>
<linearGradient id="c15" gradientUnits="userSpaceOnUse" x1="1174" x2="1352" y1="0" y2="0"><stop offset="0" stop-color="#00ff0d"/><stop offset=".371" stop-color="#00ff00"/><stop offset="1" stop-color="#00ff00"/></linearGradient>
<linearGradient id="c16" gradientUnits="userSpaceOnUse" x1="1173" x2="1357" y1="0" y2="0"><stop offset="0" stop-color="#00ff0f"/><stop offset=".391" stop-color="#00ff00"/><stop offset="1" stop-color="#00ff00"/></linearGradient>
<linearGradient id="c17" gradientUnits="userSpaceOnUse" x1="1172" x2="1362" y1="0" y2="0"><stop offset="0" stop-color="#00ff10"/><stop offset=".405" stop-color="#00ff00"/><stop offset="1" stop-color="#00ff00"/></linearGradient>
<linearGradient id="c18" gradientUnits="userSpaceOnUse" x1="1171" x2="1367" y1="0" y2="0"><stop offset="0" stop-color="#00ff11"/><stop offset=".423" stop-color="#00ff00"/><stop offset="1" stop-color="#00ff00"/></linearGradient>
<linearGradient id="c19" gradientUnits="userSpaceOnUse" x1="1170" x2="1372" y1="0" y2="0"><stop offset="0" stop-color="#00ff12"/><stop offset=".441" stop-color="#00ff00"/><stop offset="1" stop-color="#00ff00"/></linearGradient>
<linearGradient id="c20" gradientUnits="userSpaceOnUse" x1="1169" x2="1377" y1="0" y2="0"><stop offset="0" stop-color="#00ff14"/><stop offset=".457" stop-color="#00ff00"/><stop offset="1" stop-color="#00ff00"/></linearGradient>
<linearGradient id="c21" gradientUnits="userSpaceOnUse" x1="1169" x2="1382" y1="0" y2="0"><stop offset="0" stop-color="#00ff15"/><stop offset=".469" stop-color="#00ff00"/><stop offset="1" stop-color="#00ff00"/></linearGradient>
<linearGradient id="c22" gradientUnits="userSpaceOnUse" x1="1168" x2="1386" y1="0" y2="0"><stop offset="0" stop-color="#00ff16"/><stop offset=".486" stop-color="#00ff00"/><stop offset="1" stop-color="#00ff00"/></linearGradient>
<linearGradient id="c23" gradientUnits="userSpaceOnUse" x1="1167" x2="1391" y1="0" y2="0"><stop offset="0" stop-color="#00ff18"/><stop offset=".5" stop-color="#00ff00"/><stop offset="1" stop-color="#00ff00"/></linearGradient>
<linearGradient id="c24" gradientUnits="userSpaceOnUse" x1="1167" x2="1396" y1="0" y2="0"><stop offset="0" stop-color="#00ff19"/><stop offset=".511" stop-color="#00ff00"/><stop offset="1" stop-color="#00ff00"/></linearGradient>
<linearGradient id="c25" gradientUnits="userSpaceOnUse" x1="1166" x2="1400" y1="0" y2="0"><stop offset="0" stop-color="#00ff1a"/><stop offset=".526" stop-color="#00ff00"/><stop offset="1" stop-color="#00ff00"/></linearGradient>
<linearGradient id="c26" gradientUnits="userSpaceOnUse" x1="1166" x2="1405" y1="0" y2="0"><stop offset="0" stop-color="#00ff1c"/><stop offset=".536" stop-color="#00ff00"/><stop offset="1" stop-color="#00ff00"/></linearGradient>
<linearGradient id="c27" gradientUnits="userSpaceOnUse" x1="1165" x2="1409" y1="0" y2="0"><stop offset="0" stop-color="#00ff1d"/><stop offset=".549" stop-color="#00ff00"/><stop offset="1" stop-color="#00ff00"/></linearGradient>
<linearGradient id="c28" gradientUnits="userSpaceOnUse" x1="1165" x2="1414" y1="0" y2="0"><stop offset="0" stop-color="#00ff1e"/><stop offset=".558" stop-color="#00ff00"/><stop offset="1" stop-color="#00ff00"/></linearGradient>
<linearGradient id="c29" gradientUnits="userSpaceOnUse" x1="1164" x2="1418" y1="0" y2="0"><stop offset="0" stop-color="#00ff20"/><stop offset=".571" stop-color="#00ff00"/><stop offset="1" stop-color="#00ff00"/></linearGradient>
<linearGradient id="c30" gradientUnits="userSpaceOnUse" x1="1164" x2="1422" y1="0" y2="0"><stop offset="0" stop-color="#00ff21"/><stop offset=".581" stop-color="#00ff00"/><stop offset="1" stop-color="#00ff00"/></linearGradient>
<linearGradient id="c31" gradientUnits="userSpaceOnUse" x1="1164" x2="1427" y1="0" y2="0"><stop offset="0" stop-color="#00ff22"/><stop offset=".589" stop-color="#00ff00"/><stop offset="1" stop-color="#00ff00"/></linearGradient>
<linearGradient id="c32" gradientUnits="userSpaceOnUse" x1="1164" x2="1431" y1="0" y2="0"><stop offset="0" stop-color="#00ff24"/><stop offset=".599" stop-color="#00ff00"/><stop offset="1" stop-color="#00ff00"/></linearGradient>
<linearGradient id="c33" gradientUnits="userSpaceOnUse" x1="1163" x2="1435" y1="0" y2="0"><stop offset="0" stop-color="#00ff25"/><stop offset=".61" stop-color="#00ff00"/><stop offset="1" stop-color="#00ff00"/></linearGradient>
<linearGradient id="c34" gradientUnits="userSpaceOnUse" x1="1163" x2="1439" y1="0" y2="0"><stop offset="0" stop-color="#00ff27"/><stop offset=".62" stop-color="#00ff00"/><stop offset="1" stop-color="#00ff00"/></linearGradient>
<linearGradient id="c35" gradientUnits="userSpaceOnUse" x1="1163" x2="1444" y1="0" y2="0"><stop offset="0" stop-color="#00ff28"/><stop offset=".626" stop-color="#00ff00"/><stop offset="1" stop-color="#02ff00"/></linearGradient>
<linearGradient id="c36" gradientUnits="userSpaceOnUse" x1="1163" x2="1448" y1="0" y2="0"><stop offset="0" stop-color="#00ff29"/><stop offset=".635" stop-color="#00ff00"/><stop offset=".975" stop-color="#00ff00"/><stop offset="1" stop-color="#08ff00"/></linearGradient>
<linearGradient id="c37" gradientUnits="userSpaceOnUse" x1="1162" x2="1452" y1="0" y2="0"><stop offset="0" stop-color="#00ff2b"/><stop offset=".645" stop-color="#00ff00"/><stop offset=".959" stop-color="#00ff00"/><stop offset="1" stop-color="#0eff00"/></linearGradient>
<linearGradient id="c38" gradientUnits="userSpaceOnUse" x1="1162" x2="1456" y1="0" y2="0"><stop offset="0" stop-color="#00ff2c"/><stop offset=".653" stop-color="#00ff00"/><stop offset=".942" stop-color="#00ff00"/><stop offset="1" stop-color="#14ff00"/></linearGradient>
<linearGradient id="c39" gradientUnits="userSpaceOnUse" x1="1162" x2="1460" y1="0" y2="0"><stop offset="0" stop-color="#00ff2e"/><stop offset=".661" stop-color="#00ff00"/><stop offset=".926" stop-color="#00ff00"/><stop offset="1" stop-color="#1aff00"/></linearGradient>
<linearGradient id="c40" gradientUnits="userSpaceOnUse" x1="1162" x2="1464" y1="0" y2="0"><stop offset="0" stop-color="#00ff2f"/><stop offset=".669" stop-color="#00ff00"/><stop offset=".911" stop-color="#00ff00"/><stop offset="1" stop-color="#21ff00"/></linearGradient>
<linearGradient id="c41" gradientUnits="userSpaceOnUse" x1="1162" x2="1469" y1="0" y2="0"><stop offset="0" stop-color="#00ff31"/><stop offset=".352" stop-color="#00ff1a"/><stop offset=".674" stop-color="#00ff00"/><stop offset=".889" stop-color="#00ff00"/><stop offset="1" stop-color="#29ff00"/></linearGradient>
<linearGradient id="c42" gradientUnits="userSpaceOnUse" x1="1162" x2="1473" y1="0" y2="0"><stop offset="0" stop-color="#00ff32"/><stop offset=".357" stop-color="#00ff1b"/><stop offset=".682" stop-color="#00ff00"/><stop offset=".875" stop-color="#00ff00"/><stop offset="1" stop-color="#30ff00"/></linearGradient>
<linearGradient id="c43" gradientUnits="userSpaceOnUse" x1="1162" x2="1477" y1="0" y2="0"><stop offset="0" stop-color="#00ff34"/><stop offset=".362" stop-color="#00ff1c"/><stop offset=".689" stop-color="#00ff00"/><stop offset=".86" stop-color="#00ff00"/><stop offset="1" stop-color="#37ff00"/></linearGradient>
<linearGradient id="c44" gradientUnits="userSpaceOnUse" x1="1162" x2="1481" y1="0" y2="0"><stop offset="0" stop-color="#00ff35"/><stop offset=".367" stop-color="#00ff1c"/><stop offset=".696" stop-color="#00ff00"/><stop offset=".846" stop-color="#00ff00"/><stop offset="1" stop-color="#3fff00"/></linearGradient>
<linearGradient id="c45" gradientUnits="userSpaceOnUse" x1="1162" x2="1485" y1="0" y2="0"><stop offset="0" stop-color="#00ff37"/><stop offset=".372" stop-color="#00ff1d"/><stop offset=".703" stop-color="#00ff00"/><stop offset=".833" stop-color="#00ff00"/><stop offset="1" stop-color="#46ff00"/></linearGradient>
<linearGradient id="c46" gradientUnits="userSpaceOnUse" x1="1162" x2="1489" y1="0" y2="0"><stop offset="0" stop-color="#00ff39"/><stop offset=".376" stop-color="#00ff1e"/><stop offset=".706" stop-color="#00ff00"/><stop offset=".82" stop-color="#00ff00"/><stop offset="1" stop-color="#4eff00"/></linearGradient>
<linearGradient id="c47" gradientUnits="userSpaceOnUse" x1="1162" x2="1493" y1="0" y2="0"><stop offset="0" stop-color="#00ff3a"/><stop offset=".381" stop-color="#00ff1f"/><stop offset=".713" stop-color="#00ff00"/><stop offset=".807" stop-color="#00ff00"/><stop offset="1" stop-color="#56ff00"/></linearGradient>
<linearGradient id="c48" gradientUnits="userSpaceOnUse" x1="1162" x2="1497" y1="0" y2="0"><stop offset="0" stop-color="#00ff3c"/><stop offset=".385" stop-color="#00ff20"/><stop offset=".719" stop-color="#00ff00"/><stop offset=".794" stop-color="#00ff00"/><stop offset="1" stop-color="#5fff00"/></linearGradient>
<linearGradient id="c49" gradientUnits="userSpaceOnUse" x1="1162" x2="1501" y1="0" y2="0"><stop offset="0" stop-color="#00ff3e"/><stop offset=".389" stop-color="#00ff21"/><stop offset=".726" stop-color="#00ff00"/><stop offset=".782" stop-color="#00ff00"/><stop offset=".894" stop-color="#32ff00"/><stop offset="1" stop-color="#67ff00"/></linearGradient>
<linearGradient id="c50" gradientUnits="userSpaceOnUse" x1="1162" x2="1505" y1="0" y2="0"><stop offset="0" stop-color="#00ff3f"/><stop offset=".332" stop-color="#00ff27"/><stop offset=".732" stop-color="#00ff00"/><stop offset=".77" stop-color="#00ff00"/><stop offset=".889" stop-color="#37ff00"/><stop offset="1" stop-color="#70ff00"/></linearGradient>
<linearGradient id="c51" gradientUnits="userSpaceOnUse" x1="1162" x2="1509" y1="0" y2="0"><stop offset="0" stop-color="#00ff41"/><stop offset=".366" stop-color="#00ff26"/><stop offset=".758" stop-color="#00ff00"/><stop offset=".882" stop-color="#3bff00"/><stop offset="1" stop-color="#7aff00"/></linearGradient>
<linearGradient id="c52" gradientUnits="userSpaceOnUse" x1="1162" x2="1513" y1="0" y2="0"><stop offset="0" stop-color="#00ff43"/><stop offset=".399" stop-color="#00ff24"/><stop offset=".746" stop-color="#00ff00"/><stop offset=".877" stop-color="#40ff00"/><stop offset="1" stop-color="#83ff00"/></linearGradient>
<linearGradient id="c53" gradientUnits="userSpaceOnUse" x1="1163" x2="1517" y1="0" y2="0"><stop offset="0" stop-color="#00ff44"/><stop offset=".395" stop-color="#00ff26"/><stop offset=".734" stop-color="#00ff02"/><stop offset=".873" stop-color="#45ff00"/><stop offset="1" stop-color="#8dff00"/></linearGradient>
<linearGradient id="c54" gradientUnits="userSpaceOnUse" x1="1163" x2="1521" y1="0" y2="0"><stop offset="0" stop-color="#00ff46"/><stop offset=".388" stop-color="#00ff28"/><stop offset=".721" stop-color="#00ff04"/><stop offset=".757" stop-color="#11ff00"/><stop offset=".86" stop-color="#46ff00"/><stop offset="1" stop-color="#98ff00"/></linearGradient>
<linearGradient id="c55" gradientUnits="userSpaceOnUse" x1="1163" x2="1525" y1="0" y2="0"><stop offset="0" stop-color="#00ff48"/><stop offset=".381" stop-color="#00ff2a"/><stop offset=".71" stop-color="#00ff07"/><stop offset=".762" stop-color="#19ff00"/><stop offset=".856" stop-color="#4bff00"/><stop offset="1" stop-color="#a2ff00"/></linearGradient>
<linearGradient id="c56" gradientUnits="userSpaceOnUse" x1="1163" x2="1529" y1="0" y2="0"><stop offset="0" stop-color="#00ff4a"/><stop offset=".377" stop-color="#00ff2c"/><stop offset=".699" stop-color="#00ff09"/><stop offset=".768" stop-color="#22ff00"/><stop offset=".852" stop-color="#51ff00"/><stop offset="1" stop-color="#adff00"/></linearGradient>
<linearGradient id="c57" gradientUnits="userSpaceOnUse" x1="1163" x2="1533" y1="0" y2="0"><stop offset="0" stop-color="#00ff4c"/><stop offset=".37" stop-color="#00ff2e"/><stop offset=".689" stop-color="#00ff0b"/><stop offset=".77" stop-color="#2aff00"/><stop offset=".849" stop-color="#56ff00"/><stop offset="1" stop-color="#b9ff00"/></linearGradient>
<linearGradient id="c58" gradientUnits="userSpaceOnUse" x1="1164" x2="1537" y1="0" y2="0"><stop offset="0" stop-color="#00ff4d"/><stop offset=".365" stop-color="#00ff30"/><stop offset=".678" stop-color="#00ff0d"/><stop offset=".775" stop-color="#33ff00"/><stop offset=".845" stop-color="#5cff00"/><stop offset=".925" stop-color="#90ff00"/><stop offset="1" stop-color="#c5ff00"/></linearGradient>
<linearGradient id="c59" gradientUnits="userSpaceOnUse" x1="1164" x2="1541" y1="0" y2="0"><stop offset="0" stop-color="#00ff4f"/><stop offset=".361" stop-color="#00ff32"/><stop offset=".668" stop-color="#00ff10"/><stop offset=".78" stop-color="#3dff00"/><stop offset=".841" stop-color="#62ff00"/><stop offset=".923" stop-color="#99ff00"/><stop offset="1" stop-color="#d1ff00"/></linearGradient>
<linearGradient id="c60" gradientUnits="userSpaceOnUse" x1="1164" x2="1545" y1="0" y2="0"><stop offset="0" stop-color="#00ff51"/><stop offset=".354" stop-color="#00ff34"/><stop offset=".659" stop-color="#00ff12"/><stop offset=".785" stop-color="#47ff00"/><stop offset=".837" stop-color="#69ff00"/><stop offset=".921" stop-color="#a2ff00"/><stop offset="1" stop-color="#deff00"/></linearGradient>
<linearGradient id="c61" gradientUnits="userSpaceOnUse" x1="1164" x2="1549" y1="0" y2="0"><stop offset="0" stop-color="#00ff53"/><stop offset=".351" stop-color="#00ff36"/><stop offset=".649" stop-color="#00ff14"/><stop offset=".79" stop-color="#52ff00"/><stop offset=".834" stop-color="#6fff00"/><stop offset=".919" stop-color="#acff00"/><stop offset="1" stop-color="#ecff00"/></linearGradient>
<linearGradient id="c62" gradientUnits="userSpaceOnUse" x1="1165" x2="1553" y1="0" y2="0"><stop offset="0" stop-color="#00ff55"/><stop offset=".345" stop-color="#00ff38"/><stop offset=".639" stop-color="#00ff17"/><stop offset=".794" stop-color="#5dff00"/><stop offset=".83" stop-color="#76ff00"/><stop offset=".918" stop-color="#b6ff00"/><stop offset="1" stop-color="#faff00"/></linearGradient>
<linearGradient id="c63" gradientUnits="userSpaceOnUse" x1="1165" x2="1557" y1="0" y2="0"><stop offset="0" stop-color="#00ff57"/><stop offset=".339" stop-color="#00ff3b"/><stop offset=".63" stop-color="#00ff19"/><stop offset=".717" stop-color="#33ff0d"/><stop offset=".798" stop-color="#69ff00"/><stop offset=".895" stop-color="#b0ff00"/><stop offset=".987" stop-color="#fdff00"/><stop offset="1" stop-color="#fff600"/></linearGradient>
<linearGradient id="c64" gradientUnits="userSpaceOnUse" x1="1165" x2="1561" y1="0" y2="0"><stop offset="0" stop-color="#00ff59"/><stop offset=".336" stop-color="#00ff3d"/><stop offset=".621" stop-color="#01ff1c"/><stop offset=".717" stop-color="#3bff0e"/><stop offset=".808" stop-color="#78ff00"/><stop offset=".891" stop-color="#b8ff00"/><stop offset=".972" stop-color="#feff00"/><stop offset="1" stop-color="#ffe800"/></linearGradient>
<linearGradient id="c65" gradientUnits="userSpaceOnUse" x1="1165" x2="1565" y1="0" y2="0"><stop offset="0" stop-color="#00ff5b"/><stop offset=".33" stop-color="#00ff3f"/><stop offset=".61" stop-color="#00ff1f"/><stop offset=".7" stop-color="#36ff12"/><stop offset=".792" stop-color="#76ff03"/><stop offset=".877" stop-color="#b9ff00"/><stop offset=".958" stop-color="#ffff00"/><stop offset="1" stop-color="#ffdc00"/></linearGradient>
<linearGradient id="c66" gradientUnits="userSpaceOnUse" x1="1166" x2="1569" y1="0" y2="0"><stop offset="0" stop-color="#00ff5d"/><stop offset=".325" stop-color="#00ff42"/><stop offset=".6" stop-color="#00ff21"/><stop offset=".687" stop-color="#35ff15"/><stop offset=".779" stop-color="#76ff06"/><stop offset=".811" stop-color="#8eff00"/><stop offset=".878" stop-color="#c5ff00"/><stop offset=".94" stop-color="#feff00"/><stop offset="1" stop-color="#ffd000"/></linearGradient>
<linearGradient id="c67" gradientUnits="userSpaceOnUse" x1="1166" x2="1573" y1="0" y2="0"><stop offset="0" stop-color="#00ff5f"/><stop offset=".319" stop-color="#00ff44"/><stop offset=".592" stop-color="#00ff24"/><stop offset=".678" stop-color="#36ff18"/><stop offset=".767" stop-color="#75ff09"/><stop offset=".816" stop-color="#9cff00"/><stop offset=".926" stop-color="#feff00"/><stop offset=".963" stop-color="#ffdf00"/><stop offset="1" stop-color="#ffc500"/></linearGradient>
<linearGradient id="c68" gradientUnits="userSpaceOnUse" x1="1166" x2="1577" y1="0" y2="0"><stop offset="0" stop-color="#00ff62"/><stop offset=".316" stop-color="#00ff46"/><stop offset=".584" stop-color="#00ff27"/><stop offset=".672" stop-color="#39ff1a"/><stop offset=".757" stop-color="#77ff0c"/><stop offset=".82" stop-color="#aaff00"/><stop offset=".912" stop-color="#ffff00"/><stop offset=".954" stop-color="#ffda00"/><stop offset="1" stop-color="#ffba00"/></linearGradient>
<linearGradient id="c69" gradientUnits="userSpaceOnUse" x1="1167" x2="1581" y1="0" y2="0"><stop offset="0" stop-color="#00ff64"/><stop offset=".312" stop-color="#00ff49"/><stop offset=".575" stop-color="#00ff2a"/><stop offset=".659" stop-color="#38ff1d"/><stop offset=".744" stop-color="#76ff0f"/><stop offset=".824" stop-color="#b9ff00"/><stop offset=".896" stop-color="#feff00"/><stop offset=".947" stop-color="#ffd400"/><stop offset="1" stop-color="#ffb100"/></linearGradient>
<linearGradient id="c70" gradientUnits="userSpaceOnUse" x1="1167" x2="1585" y1="0" y2="0"><stop offset="0" stop-color="#00ff66"/><stop offset=".306" stop-color="#00ff4c"/><stop offset=".567" stop-color="#00ff2c"/><stop offset=".653" stop-color="#3aff20"/><stop offset=".734" stop-color="#78ff12"/><stop offset=".828" stop-color="#c9ff00"/><stop offset=".883" stop-color="#ffff00"/><stop offset=".938" stop-color="#ffcf00"/><stop offset="1" stop-color="#ffa700"/></linearGradient>
<linearGradient id="c71" gradientUnits="userSpaceOnUse" x1="1168" x2="1589" y1="0" y2="0"><stop offset="0" stop-color="#00ff68"/><stop offset=".302" stop-color="#00ff4e"/><stop offset=".558" stop-color="#00ff2f"/><stop offset=".644" stop-color="#3bff23"/><stop offset=".722" stop-color="#77ff15"/><stop offset=".831" stop-color="#d9ff00"/><stop offset=".869" stop-color="#fffe00"/><stop offset=".929" stop-color="#ffca00"/><stop offset="1" stop-color="#ff9f00"/></linearGradient>
<linearGradient id="c72" gradientUnits="userSpaceOnUse" x1="1168" x2="1593" y1="0" y2="0"><stop offset="0" stop-color="#00ff6b"/><stop offset=".299" stop-color="#00ff51"/><stop offset=".551" stop-color="#00ff32"/><stop offset=".633" stop-color="#3aff26"/><stop offset=".711" stop-color="#77ff19"/><stop offset=".784" stop-color="#b8ff0b"/><stop offset=".835" stop-color="#ebff00"/><stop offset=".854" stop-color="#feff00"/><stop offset=".92" stop-color="#ffc600"/><stop offset="1" stop-color="#ff9600"/></linearGradient>
<linearGradient id="c73" gradientUnits="userSpaceOnUse" x1="1168" x2="1597" y1="0" y2="0"><stop offset="0" stop-color="#00ff6d"/><stop offset=".294" stop-color="#00ff53"/><stop offset=".543" stop-color="#00ff35"/><stop offset=".625" stop-color="#3bff29"/><stop offset=".702" stop-color="#79ff1c"/><stop offset=".772" stop-color="#b8ff0f"/><stop offset=".841" stop-color="#ffff00"/><stop offset=".874" stop-color="#ffdf00"/><stop offset=".911" stop-color="#ffc100"/><stop offset=".953" stop-color="#ffa700"/><stop offset="1" stop-color="#ff8f00"/></linearGradient>
<linearGradient id="c74" gradientUnits="userSpaceOnUse" x1="1169" x2="1601" y1="0" y2="0"><stop offset="0" stop-color="#00ff6f"/><stop offset=".289" stop-color="#00ff56"/><stop offset=".535" stop-color="#01ff38"/><stop offset=".613" stop-color="#3aff2d"/><stop offset=".69" stop-color="#78ff20"/><stop offset=".759" stop-color="#b8ff12"/><stop offset=".826" stop-color="#feff04"/><stop offset=".866" stop-color="#ffda00"/><stop offset=".905" stop-color="#ffbb00"/><stop offset=".949" stop-color="#ffa000"/><stop offset="1" stop-color="#ff8700"/></linearGradient>
<linearGradient id="c75" gradientUnits="userSpaceOnUse" x1="1169" x2="1605" y1="0" y2="0"><stop offset="0" stop-color="#00ff72"/><stop offset=".284" stop-color="#00ff59"/><stop offset=".525" stop-color="#00ff3c"/><stop offset=".599" stop-color="#35ff31"/><stop offset=".677" stop-color="#76ff24"/><stop offset=".748" stop-color="#b8ff16"/><stop offset=".814" stop-color="#ffff08"/><stop offset=".846" stop-color="#ffdf00"/><stop offset=".897" stop-color="#ffb700"/><stop offset=".945" stop-color="#ff9a00"/><stop offset="1" stop-color="#ff8000"/></linearGradient>
<linearGradient id="c76" gradientUnits="userSpaceOnUse" x1="1170" x2="1609" y1="0" y2="0"><stop offset="0" stop-color="#00ff74"/><stop offset=".28" stop-color="#00ff5c"/><stop offset=".517" stop-color="#00ff3f"/><stop offset=".59" stop-color="#36ff34"/><stop offset=".665" stop-color="#75ff27"/><stop offset=".733" stop-color="#b6ff1a"/><stop offset=".802" stop-color="#fffe0b"/><stop offset=".85" stop-color="#ffd000"/><stop offset=".888" stop-color="#ffb300"/><stop offset=".941" stop-color="#ff9400"/><stop offset="1" stop-color="#ff7900"/></linearGradient>
<linearGradient id="c77" gradientUnits="userSpaceOnUse" x1="1170" x2="1613" y1="0" y2="0"><stop offset="0" stop-color="#00ff77"/><stop offset=".275" stop-color="#00ff5f"/><stop offset=".51" stop-color="#00ff42"/><stop offset=".582" stop-color="#37ff37"/><stop offset=".657" stop-color="#77ff2b"/><stop offset=".725" stop-color="#b9ff1e"/><stop offset=".788" stop-color="#feff10"/><stop offset=".833" stop-color="#ffd204"/><stop offset=".88" stop-color="#ffae00"/><stop offset=".937" stop-color="#ff8e00"/><stop offset="1" stop-color="#ff7300"/></linearGradient>
<linearGradient id="c78" gradientUnits="userSpaceOnUse" x1="1171" x2="1617" y1="0" y2="0"><stop offset="0" stop-color="#00ff79"/><stop offset=".271" stop-color="#00ff62"/><stop offset=".502" stop-color="#00ff46"/><stop offset=".574" stop-color="#37ff3b"/><stop offset=".646" stop-color="#76ff2f"/><stop offset=".713" stop-color="#b9ff22"/><stop offset=".776" stop-color="#ffff14"/><stop offset=".821" stop-color="#ffd108"/><stop offset=".872" stop-color="#ffaa00"/><stop offset=".93" stop-color="#ff8a00"/><stop offset="1" stop-color="#ff6d00"/></linearGradient>
<linearGradient id="c79" gradientUnits="userSpaceOnUse" x1="1171" x2="1621" y1="0" y2="0"><stop offset="0" stop-color="#00ff7c"/><stop offset=".269" stop-color="#00ff65"/><stop offset=".496" stop-color="#00ff49"/><stop offset=".567" stop-color="#38ff3e"/><stop offset=".636" stop-color="#76ff33"/><stop offset=".698" stop-color="#b4ff27"/><stop offset=".764" stop-color="#fffe18"/><stop offset=".811" stop-color="#ffce0b"/><stop offset=".864" stop-color="#ffa600"/><stop offset=".927" stop-color="#ff8400"/><stop offset="1" stop-color="#ff6700"/></linearGradient>
<linearGradient id="c80" gradientUnits="userSpaceOnUse" x1="1172" x2="1625" y1="0" y2="0"><stop offset="0" stop-color="#00ff7f"/><stop offset=".265" stop-color="#00ff68"/><stop offset=".488" stop-color="#00ff4d"/><stop offset=".558" stop-color="#39ff42"/><stop offset=".627" stop-color="#78ff36"/><stop offset=".691" stop-color="#b9ff2a"/><stop offset=".751" stop-color="#ffff1d"/><stop offset=".799" stop-color="#ffcd0e"/><stop offset=".854" stop-color="#ffa402"/><stop offset=".921" stop-color="#ff8000"/><stop offset="1" stop-color="#ff6100"/></linearGradient>
<linearGradient id="c81" gradientUnits="userSpaceOnUse" x1="1172" x2="1629" y1="0" y2="0"><stop offset="0" stop-color="#00ff81"/><stop offset=".26" stop-color="#00ff6b"/><stop offset=".481" stop-color="#00ff50"/><stop offset=".551" stop-color="#3aff46"/><stop offset=".617" stop-color="#77ff3b"/><stop offset=".678" stop-color="#b7ff2f"/><stop offset=".74" stop-color="#fffe21"/><stop offset=".788" stop-color="#ffcc11"/><stop offset=".847" stop-color="#ffa004"/><stop offset=".867" stop-color="#ff9400"/><stop offset=".917" stop-color="#ff7b00"/><stop offset="1" stop-color="#ff5c00"/></linearGradient>
<linearGradient id="c82" gradientUnits="userSpaceOnUse" x1="1173" x2="1633" y1="0" y2="0"><stop offset="0" stop-color="#00ff84"/><stop offset=".257" stop-color="#00ff6e"/><stop offset=".474" stop-color="#00ff54"/><stop offset=".541" stop-color="#39ff4a"/><stop offset=".607" stop-color="#77ff3f"/><stop offset=".667" stop-color="#b7ff33"/><stop offset=".726" stop-color="#feff27"/><stop offset=".778" stop-color="#ffc814"/><stop offset=".839" stop-color="#ff9c06"/><stop offset=".87" stop-color="#ff8a00"/><stop offset=".913" stop-color="#ff7600"/><stop offset="1" stop-color="#ff5700"/></linearGradient>
<linearGradient id="c83" gradientUnits="userSpaceOnUse" x1="1173" x2="1637" y1="0" y2="0"><stop offset="0" stop-color="#00ff87"/><stop offset=".254" stop-color="#00ff71"/><stop offset=".468" stop-color="#00ff58"/><stop offset=".534" stop-color="#3aff4e"/><stop offset=".599" stop-color="#78ff43"/><stop offset=".659" stop-color="#baff37"/><stop offset=".716" stop-color="#ffff2b"/><stop offset=".739" stop-color="#ffe321"/><stop offset=".767" stop-color="#ffc718"/><stop offset=".832" stop-color="#ff9808"/><stop offset=".873" stop-color="#ff8100"/><stop offset=".907" stop-color="#ff7200"/><stop offset="1" stop-color="#ff5200"/></linearGradient>
<linearGradient id="c84" gradientUnits="userSpaceOnUse" x1="1174" x2="1641" y1="0" y2="0"><stop offset="0" stop-color="#00ff8a"/><stop offset=".251" stop-color="#00ff74"/><stop offset=".46" stop-color="#01ff5c"/><stop offset=".527" stop-color="#3bff52"/><stop offset=".589" stop-color="#78ff47"/><stop offset=".647" stop-color="#b8ff3c"/><stop offset=".702" stop-color="#fdff30"/><stop offset=".734" stop-color="#ffdb23"/><stop offset=".76" stop-color="#ffc21a"/><stop offset=".824" stop-color="#ff940a"/><stop offset=".876" stop-color="#ff7900"/><stop offset=".904" stop-color="#ff6d00"/><stop offset="1" stop-color="#ff4d00"/></linearGradient>
<linearGradient id="c85" gradientUnits="userSpaceOnUse" x1="1174" x2="1645" y1="0" y2="0"><stop offset="0" stop-color="#00ff8d"/><stop offset=".246" stop-color="#00ff78"/><stop offset=".454" stop-color="#01ff5f"/><stop offset=".518" stop-color="#3aff56"/><stop offset=".58" stop-color="#77ff4c"/><stop offset=".637" stop-color="#b8ff41"/><stop offset=".692" stop-color="#feff35"/><stop offset=".72" stop-color="#ffde29"/><stop offset=".747" stop-color="#ffc31e"/><stop offset=".779" stop-color="#ffa915"/><stop offset=".815" stop-color="#ff910c"/><stop offset=".879" stop-color="#ff7100"/><stop offset=".936" stop-color="#ff5b00"/><stop offset="1" stop-color="#ff4900"/></linearGradient>
<linearGradient id="c86" gradientUnits="userSpaceOnUse" x1="1175" x2="1649" y1="0" y2="0"><stop offset="0" stop-color="#00ff90"/><stop offset=".241" stop-color="#00ff7c"/><stop offset=".445" stop-color="#00ff64"/><stop offset=".504" stop-color="#34ff5b"/><stop offset=".568" stop-color="#75ff51"/><stop offset=".624" stop-color="#b6ff46"/><stop offset=".679" stop-color="#fdff3b"/><stop offset=".713" stop-color="#ffd82b"/><stop offset=".741" stop-color="#ffbe21"/><stop offset=".808" stop-color="#ff8d0e"/><stop offset=".882" stop-color="#ff6a00"/><stop offset="1" stop-color="#ff4400"/></linearGradient>
<linearGradient id="c87" gradientUnits="userSpaceOnUse" x1="1175" x2="1653" y1="0" y2="0"><stop offset="0" stop-color="#00ff93"/><stop offset=".238" stop-color="#00ff7f"/><stop offset=".439" stop-color="#00ff68"/><stop offset=".498" stop-color="#35ff5f"/><stop offset=".561" stop-color="#76ff55"/><stop offset=".617" stop-color="#b9ff4b"/><stop offset=".669" stop-color="#feff40"/><stop offset=".699" stop-color="#ffdb31"/><stop offset=".728" stop-color="#ffbe25"/><stop offset=".762" stop-color="#ffa31a"/><stop offset=".799" stop-color="#ff8b10"/><stop offset=".885" stop-color="#ff6300"/><stop offset="1" stop-color="#ff4000"/></linearGradient>
<linearGradient id="c88" gradientUnits="userSpaceOnUse" x1="1176" x2="1657" y1="0" y2="0"><stop offset="0" stop-color="#00ff96"/><stop offset=".235" stop-color="#00ff83"/><stop offset=".432" stop-color="#00ff6c"/><stop offset=".491" stop-color="#36ff64"/><stop offset=".551" stop-color="#76ff5a"/><stop offset=".607" stop-color="#b9ff50"/><stop offset=".659" stop-color="#ffff45"/><stop offset=".686" stop-color="#ffdc36"/><stop offset=".717" stop-color="#ffbd29"/><stop offset=".753" stop-color="#ffa01d"/><stop offset=".792" stop-color="#ff8712"/><stop offset=".838" stop-color="#ff7008"/><stop offset=".888" stop-color="#ff5c00"/><stop offset="1" stop-color="#ff3c00"/></linearGradient>
<linearGradient id="c89" gradientUnits="userSpaceOnUse" x1="1176" x2="1661" y1="0" y2="0"><stop offset="0" stop-color="#00ff99"/><stop offset=".231" stop-color="#00ff87"/><stop offset=".427" stop-color="#00ff70"/><stop offset=".485" stop-color="#37ff68"/><stop offset=".542" stop-color="#75ff5f"/><stop offset=".596" stop-color="#b6ff55"/><stop offset=".647" stop-color="#fdff4b"/><stop offset=".68" stop-color="#ffd639"/><stop offset=".709" stop-color="#ffb92c"/><stop offset=".744" stop-color="#ff9d1f"/><stop offset=".784" stop-color="#ff8414"/><stop offset=".833" stop-color="#ff6c0a"/><stop offset=".891" stop-color="#ff5600"/><stop offset="1" stop-color="#ff3800"/></linearGradient>
<linearGradient id="c90" gradientUnits="userSpaceOnUse" x1="1177" x2="1665" y1="0" y2="0"><stop offset="0" stop-color="#00ff9c"/><stop offset=".227" stop-color="#00ff8a"/><stop offset=".42" stop-color="#00ff75"/><stop offset=".477" stop-color="#38ff6d"/><stop offset=".535" stop-color="#77ff64"/><stop offset=".588" stop-color="#b9ff5a"/><stop offset=".637" stop-color="#feff50"/><stop offset=".668" stop-color="#ffd73e"/><stop offset=".699" stop-color="#ffb830"/><stop offset=".736" stop-color="#ff9a22"/><stop offset=".777" stop-color="#ff8116"/><stop offset=".83" stop-color="#ff670a"/><stop offset=".891" stop-color="#ff5100"/><stop offset="1" stop-color="#ff3500"/></linearGradient>
<linearGradient id="c91" gradientUnits="userSpaceOnUse" x1="1177" x2="1669" y1="0" y2="0"><stop offset="0" stop-color="#00ffa0"/><stop offset=".226" stop-color="#00ff8e"/><stop offset=".415" stop-color="#00ff79"/><stop offset=".472" stop-color="#39ff71"/><stop offset=".526" stop-color="#77ff69"/><stop offset=".577" stop-color="#b7ff60"/><stop offset=".626" stop-color="#fcff56"/><stop offset=".661" stop-color="#ffd441"/><stop offset=".691" stop-color="#ffb533"/><stop offset=".728" stop-color="#ff9825"/><stop offset=".768" stop-color="#ff7e19"/><stop offset=".827" stop-color="#ff620b"/><stop offset=".894" stop-color="#ff4b00"/><stop offset="1" stop-color="#ff3100"/></linearGradient>
<linearGradient id="c92" gradientUnits="userSpaceOnUse" x1="1178" x2="1672" y1="0" y2="0"><stop offset="0" stop-color="#00ffa3"/><stop offset=".223" stop-color="#00ff92"/><stop offset=".409" stop-color="#00ff7e"/><stop offset=".466" stop-color="#3aff76"/><stop offset=".52" stop-color="#78ff6e"/><stop offset=".571" stop-color="#baff65"/><stop offset=".617" stop-color="#feff5c"/><stop offset=".65" stop-color="#ffd547"/><stop offset=".682" stop-color="#ffb336"/><stop offset=".719" stop-color="#ff9628"/><stop offset=".761" stop-color="#ff7c1b"/><stop offset=".824" stop-color="#ff5f0d"/><stop offset=".899" stop-color="#ff4600"/><stop offset="1" stop-color="#ff2e00"/></linearGradient>
<linearGradient id="c93" gradientUnits="userSpaceOnUse" x1="1179" x2="1676" y1="0" y2="0"><stop offset="0" stop-color="#00ffa7"/><stop offset=".219" stop-color="#00ff96"/><stop offset=".402" stop-color="#00ff83"/><stop offset=".459" stop-color="#3bff7b"/><stop offset=".511" stop-color="#78ff73"/><stop offset=".561" stop-color="#baff6b"/><stop offset=".608" stop-color="#ffff62"/><stop offset=".638" stop-color="#ffd64d"/><stop offset=".67" stop-color="#ffb43b"/><stop offset=".708" stop-color="#ff952b"/><stop offset=".753" stop-color="#ff791d"/><stop offset=".821" stop-color="#ff5a0d"/><stop offset=".901" stop-color="#ff4100"/><stop offset="1" stop-color="#ff2b00"/></linearGradient>
<linearGradient id="c94" gradientUnits="userSpaceOnUse" x1="1179" x2="1680" y1="0" y2="0"><stop offset="0" stop-color="#00ffaa"/><stop offset=".216" stop-color="#00ff9a"/><stop offset=".397" stop-color="#01ff88"/><stop offset=".451" stop-color="#3aff81"/><stop offset=".503" stop-color="#77ff79"/><stop offset=".551" stop-color="#b8ff71"/><stop offset=".597" stop-color="#fdff68"/><stop offset=".631" stop-color="#ffd250"/><stop offset=".663" stop-color="#ffb03e"/><stop offset=".703" stop-color="#ff902d"/><stop offset=".747" stop-color="#ff761f"/><stop offset=".818" stop-color="#ff560e"/><stop offset=".904" stop-color="#ff3c00"/><stop offset="1" stop-color="#ff2700"/></linearGradient>
<linearGradient id="c95" gradientUnits="userSpaceOnUse" x1="1180" x2="1684" y1="0" y2="0"><stop offset="0" stop-color="#00ffae"/><stop offset=".212" stop-color="#00ff9f"/><stop offset=".391" stop-color="#01ff8d"/><stop offset=".444" stop-color="#3bff86"/><stop offset=".494" stop-color="#77ff7f"/><stop offset=".542" stop-color="#b8ff77"/><stop offset=".587" stop-color="#feff6f"/><stop offset=".619" stop-color="#ffd356"/><stop offset=".653" stop-color="#ffaf42"/><stop offset=".692" stop-color="#ff8f31"/><stop offset=".738" stop-color="#ff7321"/><stop offset=".813" stop-color="#ff520f"/><stop offset=".907" stop-color="#ff3700"/><stop offset="1" stop-color="#ff2400"/></linearGradient>
<linearGradient id="c96" gradientUnits="userSpaceOnUse" x1="1180" x2="1688" y1="0" y2="0"><stop offset="0" stop-color="#00ffb2"/><stop offset=".209" stop-color="#00ffa3"/><stop offset=".384" stop-color="#00ff92"/><stop offset=".431" stop-color="#32ff8c"/><stop offset=".484" stop-color="#74ff85"/><stop offset=".531" stop-color="#b5ff7d"/><stop offset=".579" stop-color="#ffff75"/><stop offset=".608" stop-color="#ffd45c"/><stop offset=".644" stop-color="#ffad46"/><stop offset=".683" stop-color="#ff8d34"/><stop offset=".73" stop-color="#ff7124"/><stop offset=".809" stop-color="#ff4f10"/><stop offset=".906" stop-color="#ff3401"/><stop offset="1" stop-color="#ff2100"/></linearGradient>
<linearGradient id="c97" gradientUnits="userSpaceOnUse" x1="1181" x2="1692" y1="0" y2="0"><stop offset="0" stop-color="#00ffb5"/><stop offset=".205" stop-color="#00ffa8"/><stop offset=".378" stop-color="#00ff97"/><stop offset=".427" stop-color="#36ff91"/><stop offset=".477" stop-color="#76ff8b"/><stop offset=".524" stop-color="#b8ff83"/><stop offset=".568" stop-color="#fdff7c"/><stop offset=".601" stop-color="#ffd060"/><stop offset=".634" stop-color="#ffac4b"/><stop offset=".675" stop-color="#ff8b37"/><stop offset=".722" stop-color="#ff6e26"/><stop offset=".8" stop-color="#ff4d12"/><stop offset=".896" stop-color="#ff3202"/><stop offset="1" stop-color="#ff1e00"/></linearGradient>
<linearGradient id="c98" gradientUnits="userSpaceOnUse" x1="1182" x2="1696" y1="0" y2="0"><stop offset="0" stop-color="#00ffb9"/><stop offset=".202" stop-color="#00ffac"/><stop offset=".372" stop-color="#00ff9d"/><stop offset=".42" stop-color="#37ff97"/><stop offset=".469" stop-color="#75ff91"/><stop offset=".516" stop-color="#b9ff8a"/><stop offset=".558" stop-color="#ffff83"/><stop offset=".589" stop-color="#ffd166"/><stop offset=".625" stop-color="#ffaa4f"/><stop offset=".665" stop-color="#ff893a"/><stop offset=".714" stop-color="#ff6c28"/><stop offset=".792" stop-color="#ff4b14"/><stop offset=".885" stop-color="#ff3104"/><stop offset=".916" stop-color="#ff2a00"/><stop offset="1" stop-color="#ff1b00"/></linearGradient>
<linearGradient id="c99" gradientUnits="userSpaceOnUse" x1="1182" x2="1700" y1="0" y2="0"><stop offset="0" stop-color="#00ffbd"/><stop offset=".367" stop-color="#00ffa2"/><stop offset=".413" stop-color="#35ff9d"/><stop offset=".461" stop-color="#74ff97"/><stop offset=".506" stop-color="#b6ff91"/><stop offset=".548" stop-color="#fcff8a"/><stop offset=".583" stop-color="#ffcd6a"/><stop offset=".618" stop-color="#ffa752"/><stop offset=".66" stop-color="#ff853c"/><stop offset=".708" stop-color="#ff682a"/><stop offset=".766" stop-color="#ff4f1a"/><stop offset=".832" stop-color="#ff3a0d"/><stop offset=".917" stop-color="#ff2700"/><stop offset="1" stop-color="#ff1800"/></linearGradient>
<linearGradient id="c100" gradientUnits="userSpaceOnUse" x1="1183" x2="1704" y1="0" y2="0"><stop offset="0" stop-color="#00ffc1"/><stop offset=".361" stop-color="#00ffa8"/><stop offset=".409" stop-color="#39ffa3"/><stop offset=".455" stop-color="#76ff9d"/><stop offset=".499" stop-color="#b9ff97"/><stop offset=".539" stop-color="#feff91"/><stop offset=".572" stop-color="#ffce71"/><stop offset=".607" stop-color="#ffa757"/><stop offset=".649" stop-color="#ff8540"/><stop offset=".699" stop-color="#ff672d"/><stop offset=".756" stop-color="#ff4e1c"/><stop offset=".825" stop-color="#ff380e"/><stop offset=".919" stop-color="#ff2300"/><stop offset="1" stop-color="#ff1600"/></linearGradient>
<linearGradient id="c101" gradientUnits="userSpaceOnUse" x1="1184" x2="1708" y1="0" y2="0"><stop offset="0" stop-color="#00ffc6"/><stop offset=".355" stop-color="#00ffae"/><stop offset=".403" stop-color="#3affa9"/><stop offset=".448" stop-color="#79ffa4"/><stop offset=".49" stop-color="#b9ff9e"/><stop offset=".531" stop-color="#ffff99"/><stop offset=".561" stop-color="#ffcf78"/><stop offset=".597" stop-color="#ffa65c"/><stop offset=".641" stop-color="#ff8243"/><stop offset=".691" stop-color="#ff642f"/><stop offset=".75" stop-color="#ff4b1e"/><stop offset=".821" stop-color="#ff350f"/><stop offset=".922" stop-color="#ff1f00"/><stop offset="1" stop-color="#ff1300"/></linearGradient>
<linearGradient id="c102" gradientUnits="userSpaceOnUse" x1="1184" x2="1712" y1="0" y2="0"><stop offset="0" stop-color="#00ffca"/><stop offset=".35" stop-color="#00ffb4"/><stop offset=".398" stop-color="#3bffaf"/><stop offset=".441" stop-color="#78ffab"/><stop offset=".483" stop-color="#baffa6"/><stop offset=".521" stop-color="#fdffa0"/><stop offset=".555" stop-color="#ffcb7b"/><stop offset=".591" stop-color="#ffa25f"/><stop offset=".634" stop-color="#ff7f46"/><stop offset=".684" stop-color="#ff6231"/><stop offset=".744" stop-color="#ff481f"/><stop offset=".816" stop-color="#ff3210"/><stop offset=".924" stop-color="#ff1c00"/><stop offset="1" stop-color="#ff1100"/></linearGradient>
<linearGradient id="c103" gradientUnits="userSpaceOnUse" x1="1185" x2="1716" y1="0" y2="0"><stop offset="0" stop-color="#00ffce"/><stop offset=".345" stop-color="#00ffba"/><stop offset=".39" stop-color="#3affb6"/><stop offset=".431" stop-color="#75ffb2"/><stop offset=".467" stop-color="#adffae"/><stop offset=".512" stop-color="#feffa8"/><stop offset=".514" stop-color="#fffca6"/><stop offset=".544" stop-color="#ffcc83"/><stop offset=".582" stop-color="#ffa063"/><stop offset=".625" stop-color="#ff7d49"/><stop offset=".678" stop-color="#ff5e33"/><stop offset=".74" stop-color="#ff4520"/><stop offset=".812" stop-color="#ff3011"/><stop offset=".927" stop-color="#ff1900"/><stop offset="1" stop-color="#ff0e00"/></linearGradient>
<linearGradient id="c104" gradientUnits="userSpaceOnUse" x1="1186" x2="1720" y1="0" y2="0"><stop offset="0" stop-color="#00ffd3"/><stop offset=".339" stop-color="#01ffc1"/><stop offset=".384" stop-color="#3bffbd"/><stop offset=".425" stop-color="#77ffb9"/><stop offset=".464" stop-color="#b7ffb5"/><stop offset=".504" stop-color="#fffeb0"/><stop offset=".534" stop-color="#ffcd8a"/><stop offset=".571" stop-color="#ffa169"/><stop offset=".616" stop-color="#ff7b4d"/><stop offset=".669" stop-color="#ff5d36"/><stop offset=".73" stop-color="#ff4323"/><stop offset=".805" stop-color="#ff2d12"/><stop offset=".929" stop-color="#ff1600"/><stop offset="1" stop-color="#ff0c00"/></linearGradient>
<linearGradient id="c105" gradientUnits="userSpaceOnUse" x1="1186" x2="1724" y1="0" y2="0"><stop offset="0" stop-color="#00ffd8"/><stop offset=".335" stop-color="#01ffc7"/><stop offset=".377" stop-color="#39ffc4"/><stop offset=".418" stop-color="#76ffc1"/><stop offset=".454" stop-color="#b1ffbd"/><stop offset=".496" stop-color="#fffdb7"/><stop offset=".528" stop-color="#ffc88e"/><stop offset=".565" stop-color="#ff9d6c"/><stop offset=".61" stop-color="#ff7850"/><stop offset=".664" stop-color="#ff5a38"/><stop offset=".738" stop-color="#ff3c21"/><stop offset=".831" stop-color="#ff240e"/><stop offset=".931" stop-color="#ff1300"/><stop offset="1" stop-color="#ff0900"/></linearGradient>
<linearGradient id="c106" gradientUnits="userSpaceOnUse" x1="1187" x2="1728" y1="0" y2="0"><stop offset="0" stop-color="#00ffdc"/><stop offset=".327" stop-color="#00ffce"/><stop offset=".366" stop-color="#33ffcc"/><stop offset=".41" stop-color="#75ffc8"/><stop offset=".449" stop-color="#b8ffc5"/><stop offset=".486" stop-color="#ffffc2"/><stop offset=".518" stop-color="#ffc996"/><stop offset=".555" stop-color="#ff9d72"/><stop offset=".601" stop-color="#ff7753"/><stop offset=".654" stop-color="#ff583b"/><stop offset=".73" stop-color="#ff3a23"/><stop offset=".823" stop-color="#ff230f"/><stop offset=".933" stop-color="#ff1000"/><stop offset="1" stop-color="#ff0700"/></linearGradient>
<linearGradient id="c107" gradientUnits="userSpaceOnUse" x1="1188" x2="1732" y1="0" y2="0"><stop offset="0" stop-color="#00ffe1"/><stop offset=".322" stop-color="#00ffd5"/><stop offset=".358" stop-color="#31ffd3"/><stop offset=".401" stop-color="#72ffd0"/><stop offset=".438" stop-color="#b1ffce"/><stop offset=".478" stop-color="#fffec9"/><stop offset=".509" stop-color="#ffc89c"/><stop offset=".548" stop-color="#ff9a76"/><stop offset=".594" stop-color="#ff7456"/><stop offset=".647" stop-color="#ff563d"/><stop offset=".722" stop-color="#ff3824"/><stop offset=".816" stop-color="#ff2111"/><stop offset=".936" stop-color="#ff0d00"/><stop offset="1" stop-color="#ff0500"/></linearGradient>
<linearGradient id="c108" gradientUnits="userSpaceOnUse" x1="1189" x2="1736" y1="0" y2="0"><stop offset="0" stop-color="#00ffe6"/><stop offset=".316" stop-color="#00ffdc"/><stop offset=".353" stop-color="#32ffdb"/><stop offset=".393" stop-color="#71ffd9"/><stop offset=".426" stop-color="#abffd7"/><stop offset=".468" stop-color="#feffd4"/><stop offset=".47" stop-color="#fffcd1"/><stop offset=".484" stop-color="#ffe0b9"/><stop offset=".501" stop-color="#ffc6a2"/><stop offset=".539" stop-color="#ff987b"/><stop offset=".585" stop-color="#ff725a"/><stop offset=".64" stop-color="#ff533f"/><stop offset=".717" stop-color="#ff3626"/><stop offset=".81" stop-color="#ff1f12"/><stop offset=".938" stop-color="#ff0a00"/><stop offset="1" stop-color="#ff0300"/></linearGradient>
<linearGradient id="c109" gradientUnits="userSpaceOnUse" x1="1189" x2="1740" y1="0" y2="0"><stop offset="0" stop-color="#00ffec"/><stop offset=".312" stop-color="#00ffe4"/><stop offset=".35" stop-color="#36ffe3"/><stop offset=".39" stop-color="#76ffe1"/><stop offset=".425" stop-color="#b5ffdf"/><stop offset=".461" stop-color="#fffedd"/><stop offset=".475" stop-color="#ffe2c3"/><stop offset=".492" stop-color="#ffc7ab"/><stop offset=".53" stop-color="#ff9881"/><stop offset=".575" stop-color="#ff725f"/><stop offset=".632" stop-color="#ff5142"/><stop offset=".708" stop-color="#ff3428"/><stop offset=".802" stop-color="#ff1d13"/><stop offset=".94" stop-color="#ff0800"/><stop offset="1" stop-color="#ff0100"/></linearGradient>
<linearGradient id="c110" gradientUnits="userSpaceOnUse" x1="1190" x2="1744" y1="0" y2="0"><stop offset="0" stop-color="#00fff1"/><stop offset=".307" stop-color="#00ffec"/><stop offset=".345" stop-color="#37ffeb"/><stop offset=".381" stop-color="#73ffea"/><stop offset=".413" stop-color="#aeffe9"/><stop offset=".453" stop-color="#fffde5"/><stop offset=".469" stop-color="#ffddc7"/><stop offset=".486" stop-color="#ffc2af"/><stop offset=".523" stop-color="#ff9484"/><stop offset=".57" stop-color="#ff6d61"/><stop offset=".626" stop-color="#ff4e44"/><stop offset=".702" stop-color="#ff322a"/><stop offset=".796" stop-color="#ff1b14"/><stop offset=".942" stop-color="#ff0500"/><stop offset="1" stop-color="#ff0000"/></linearGradient>
<linearGradient id="c111" gradientUnits="userSpaceOnUse" x1="1191" x2="1748" y1="0" y2="0"><stop offset="0" stop-color="#00fff6"/><stop offset=".302" stop-color="#00fff4"/><stop offset=".339" stop-color="#38fff3"/><stop offset=".377" stop-color="#78fff3"/><stop offset=".411" stop-color="#b9fff2"/><stop offset=".443" stop-color="#fffff1"/><stop offset=".46" stop-color="#ffded2"/><stop offset=".476" stop-color="#ffc3b8"/><stop offset=".513" stop-color="#ff948b"/><stop offset=".56" stop-color="#ff6d66"/><stop offset=".618" stop-color="#ff4d47"/><stop offset=".695" stop-color="#ff302b"/><stop offset=".79" stop-color="#ff1916"/><stop offset=".944" stop-color="#ff0300"/><stop offset="1" stop-color="#ff0000"/></linearGradient>
<linearGradient id="c112" gradientUnits="userSpaceOnUse" x1="1192" x2="1752" y1="0" y2="0"><stop offset="0" stop-color="#00fffc"/><stop offset=".296" stop-color="#00fffc"/><stop offset=".334" stop-color="#3afffc"/><stop offset=".368" stop-color="#74fffc"/><stop offset=".4" stop-color="#b2fffc"/><stop offset=".436" stop-color="#fffefa"/><stop offset=".452" stop-color="#ffdcd9"/><stop offset=".468" stop-color="#ffc1bf"/><stop offset=".486" stop-color="#ffa8a6"/><stop offset=".507" stop-color="#ff908e"/><stop offset=".555" stop-color="#ff6967"/><stop offset=".613" stop-color="#ff4948"/><stop offset=".689" stop-color="#ff2d2d"/><stop offset=".784" stop-color="#ff1717"/><stop offset=".945" stop-color="#ff0000"/><stop offset="1" stop-color="#ff0000"/></linearGradient>
<linearGradient id="c113" gradientUnits="userSpaceOnUse" x1="1193" x2="1756" y1="0" y2="0"><stop offset="0" stop-color="#00fcff"/><stop offset=".291" stop-color="#00faff"/><stop offset=".329" stop-color="#3af9ff"/><stop offset=".364" stop-color="#77f9ff"/><stop offset=".398" stop-color="#b9f8ff"/><stop offset=".43" stop-color="#fff8ff"/><stop offset=".446" stop-color="#ffd7de"/><stop offset=".462" stop-color="#ffbdc3"/><stop offset=".48" stop-color="#ffa4aa"/><stop offset=".501" stop-color="#ff8d92"/><stop offset=".549" stop-color="#ff666a"/><stop offset=".607" stop-color="#ff464a"/><stop offset=".687" stop-color="#ff2a2d"/><stop offset=".787" stop-color="#ff1416"/><stop offset=".929" stop-color="#ff0002"/><stop offset="1" stop-color="#ff0000"/></linearGradient>
<linearGradient id="c114" gradientUnits="userSpaceOnUse" x1="1193" x2="1760" y1="0" y2="0"><stop offset="0" stop-color="#00f6ff"/><stop offset=".287" stop-color="#01f1ff"/><stop offset=".325" stop-color="#39f0ff"/><stop offset=".358" stop-color="#72f0ff"/><stop offset=".388" stop-color="#abefff"/><stop offset=".427" stop-color="#feedff"/><stop offset=".429" stop-color="#ffeafc"/><stop offset=".444" stop-color="#ffccdc"/><stop offset=".46" stop-color="#ffb3c1"/><stop offset=".48" stop-color="#ff9aa7"/><stop offset=".501" stop-color="#ff8490"/><stop offset=".549" stop-color="#ff5f69"/><stop offset=".608" stop-color="#ff4149"/><stop offset=".691" stop-color="#ff252c"/><stop offset=".797" stop-color="#ff0f15"/><stop offset=".91" stop-color="#ff0004"/><stop offset="1" stop-color="#ff0000"/></linearGradient>
<linearGradient id="c115" gradientUnits="userSpaceOnUse" x1="1194" x2="1764" y1="0" y2="0"><stop offset="0" stop-color="#00f1ff"/><stop offset=".282" stop-color="#01eaff"/><stop offset=".319" stop-color="#38e8ff"/><stop offset=".354" stop-color="#73e7ff"/><stop offset=".386" stop-color="#afe5ff"/><stop offset=".425" stop-color="#ffe1fd"/><stop offset=".44" stop-color="#ffc4dd"/><stop offset=".456" stop-color="#ffacc3"/><stop offset=".475" stop-color="#ff94a8"/><stop offset=".496" stop-color="#ff7f91"/><stop offset=".546" stop-color="#ff5a69"/><stop offset=".605" stop-color="#ff3d49"/><stop offset=".693" stop-color="#ff212b"/><stop offset=".804" stop-color="#ff0c14"/><stop offset=".891" stop-color="#ff0007"/><stop offset=".953" stop-color="#ff0000"/><stop offset="1" stop-color="#ff0000"/></linearGradient>
<linearGradient id="c116" gradientUnits="userSpaceOnUse" x1="1195" x2="1768" y1="0" y2="0"><stop offset="0" stop-color="#00ebff"/><stop offset=".276" stop-color="#00e2ff"/><stop offset=".309" stop-color="#2fe0ff"/><stop offset=".349" stop-color="#72deff"/><stop offset=".382" stop-color="#afdcff"/><stop offset=".421" stop-color="#ffd8fe"/><stop offset=".436" stop-color="#ffbcde"/><stop offset=".454" stop-color="#ffa3c1"/><stop offset=".494" stop-color="#ff7891"/><stop offset=".543" stop-color="#ff556a"/><stop offset=".602" stop-color="#ff394a"/><stop offset=".695" stop-color="#ff1d2b"/><stop offset=".812" stop-color="#ff0812"/><stop offset=".873" stop-color="#ff0009"/><stop offset=".955" stop-color="#ff0000"/><stop offset="1" stop-color="#ff0000"/></linearGradient>
<linearGradient id="c117" gradientUnits="userSpaceOnUse" x1="1196" x2="1772" y1="0" y2="0"><stop offset="0" stop-color="#00e5ff"/><stop offset=".271" stop-color="#00daff"/><stop offset=".306" stop-color="#32d8ff"/><stop offset=".345" stop-color="#73d6ff"/><stop offset=".38" stop-color="#b3d3ff"/><stop offset=".417" stop-color="#ffcffe"/><stop offset=".432" stop-color="#ffb4df"/><stop offset=".45" stop-color="#ff9cc3"/><stop offset=".49" stop-color="#ff7392"/><stop offset=".538" stop-color="#ff516b"/><stop offset=".599" stop-color="#ff354b"/><stop offset=".694" stop-color="#ff1a2a"/><stop offset=".819" stop-color="#ff0411"/><stop offset=".854" stop-color="#ff000c"/><stop offset=".957" stop-color="#ff0000"/><stop offset="1" stop-color="#ff0000"/></linearGradient>
<linearGradient id="c118" gradientUnits="userSpaceOnUse" x1="1197" x2="1776" y1="0" y2="0"><stop offset="0" stop-color="#00e0ff"/><stop offset=".266" stop-color="#00d3ff"/><stop offset=".302" stop-color="#34d1ff"/><stop offset=".342" stop-color="#74ceff"/><stop offset=".378" stop-color="#b7caff"/><stop offset=".413" stop-color="#ffc7ff"/><stop offset=".428" stop-color="#ffade0"/><stop offset=".446" stop-color="#ff96c4"/><stop offset=".485" stop-color="#ff6e94"/><stop offset=".535" stop-color="#ff4d6c"/><stop offset=".596" stop-color="#ff324b"/><stop offset=".698" stop-color="#ff1629"/><stop offset=".829" stop-color="#ff0110"/><stop offset=".959" stop-color="#ff0000"/><stop offset="1" stop-color="#ff0000"/></linearGradient>
<linearGradient id="c119" gradientUnits="userSpaceOnUse" x1="1197" x2="1780" y1="0" y2="0"><stop offset="0" stop-color="#00dbff"/><stop offset=".262" stop-color="#00ccff"/><stop offset=".3" stop-color="#36c9ff"/><stop offset=".338" stop-color="#73c6ff"/><stop offset=".369" stop-color="#aac3ff"/><stop offset=".41" stop-color="#febeff"/><stop offset=".412" stop-color="#ffbcfc"/><stop offset=".427" stop-color="#ffa3de"/><stop offset=".444" stop-color="#ff8dc2"/><stop offset=".485" stop-color="#ff6792"/><stop offset=".535" stop-color="#ff476b"/><stop offset=".597" stop-color="#ff2d4a"/><stop offset=".693" stop-color="#ff142a"/><stop offset=".816" stop-color="#ff0012"/><stop offset=".959" stop-color="#ff0000"/><stop offset="1" stop-color="#ff0000"/></linearGradient>
<linearGradient id="c120" gradientUnits="userSpaceOnUse" x1="1198" x2="1784" y1="0" y2="0"><stop offset="0" stop-color="#00d5ff"/><stop offset=".258" stop-color="#00c5ff"/><stop offset=".295" stop-color="#35c2ff"/><stop offset=".334" stop-color="#74beff"/><stop offset=".367" stop-color="#aebaff"/><stop offset=".408" stop-color="#ffb4fd"/><stop offset=".423" stop-color="#ff9cdf"/><stop offset=".442" stop-color="#ff85c1"/><stop offset=".483" stop-color="#ff6192"/><stop offset=".532" stop-color="#ff436b"/><stop offset=".594" stop-color="#ff2a4b"/><stop offset=".683" stop-color="#ff132d"/><stop offset=".797" stop-color="#ff0015"/><stop offset=".94" stop-color="#ff0002"/><stop offset="1" stop-color="#ff0000"/></linearGradient>
<linearGradient id="c121" gradientUnits="userSpaceOnUse" x1="1199" x2="1787" y1="0" y2="0"><stop offset="0" stop-color="#00d0ff"/><stop offset=".253" stop-color="#00bfff"/><stop offset=".293" stop-color="#37bbff"/><stop offset=".332" stop-color="#75b7ff"/><stop offset=".366" stop-color="#b2b2ff"/><stop offset=".405" stop-color="#ffacfd"/><stop offset=".42" stop-color="#ff96e0"/><stop offset=".439" stop-color="#ff80c2"/><stop offset=".48" stop-color="#ff5c93"/><stop offset=".531" stop-color="#ff3e6b"/><stop offset=".592" stop-color="#ff274c"/><stop offset=".675" stop-color="#ff112f"/><stop offset=".781" stop-color="#ff0018"/><stop offset=".92" stop-color="#ff0005"/><stop offset="1" stop-color="#ff0000"/></linearGradient>
<linearGradient id="c122" gradientUnits="userSpaceOnUse" x1="1200" x2="1791" y1="0" y2="0"><stop offset="0" stop-color="#00cbff"/><stop offset=".249" stop-color="#00b8ff"/><stop offset=".289" stop-color="#39b4ff"/><stop offset=".328" stop-color="#76afff"/><stop offset=".364" stop-color="#b5aaff"/><stop offset=".401" stop-color="#ffa4fe"/><stop offset=".418" stop-color="#ff8dde"/><stop offset=".435" stop-color="#ff7ac3"/><stop offset=".477" stop-color="#ff5693"/><stop offset=".528" stop-color="#ff3a6c"/><stop offset=".589" stop-color="#ff234c"/><stop offset=".667" stop-color="#ff1031"/><stop offset=".763" stop-color="#ff001b"/><stop offset=".904" stop-color="#ff0007"/><stop offset="1" stop-color="#ff0000"/></linearGradient>
<linearGradient id="c123" gradientUnits="userSpaceOnUse" x1="1201" x2="1795" y1="0" y2="0"><stop offset="0" stop-color="#00c6ff"/><stop offset=".244" stop-color="#00b2ff"/><stop offset=".286" stop-color="#3badff"/><stop offset=".325" stop-color="#78a8ff"/><stop offset=".362" stop-color="#b9a3ff"/><stop offset=".397" stop-color="#ff9dff"/><stop offset=".414" stop-color="#ff86df"/><stop offset=".431" stop-color="#ff74c5"/><stop offset=".473" stop-color="#ff5294"/><stop offset=".524" stop-color="#ff376d"/><stop offset=".586" stop-color="#ff204d"/><stop offset=".658" stop-color="#ff0f33"/><stop offset=".746" stop-color="#ff001e"/><stop offset=".887" stop-color="#ff0009"/><stop offset="1" stop-color="#ff0000"/></linearGradient>
<linearGradient id="c124" gradientUnits="userSpaceOnUse" x1="1202" x2="1799" y1="0" y2="0"><stop offset="0" stop-color="#00c1ff"/><stop offset=".24" stop-color="#00acff"/><stop offset=".281" stop-color="#3aa7ff"/><stop offset=".322" stop-color="#79a1ff"/><stop offset=".358" stop-color="#b99cff"/><stop offset=".394" stop-color="#ff95ff"/><stop offset=".41" stop-color="#ff80e0"/><stop offset=".429" stop-color="#ff6dc3"/><stop offset=".471" stop-color="#ff4d94"/><stop offset=".523" stop-color="#ff326c"/><stop offset=".585" stop-color="#ff1d4c"/><stop offset=".65" stop-color="#ff0d35"/><stop offset=".729" stop-color="#ff0022"/><stop offset=".873" stop-color="#ff000b"/><stop offset="1" stop-color="#ff0000"/></linearGradient>
<linearGradient id="c125" gradientUnits="userSpaceOnUse" x1="1203" x2="1803" y1="0" y2="0"><stop offset="0" stop-color="#00bcff"/><stop offset=".235" stop-color="#01a6ff"/><stop offset=".277" stop-color="#3aa1ff"/><stop offset=".315" stop-color="#759bff"/><stop offset=".348" stop-color="#ae96ff"/><stop offset=".392" stop-color="#ff8cfd"/><stop offset=".408" stop-color="#ff78de"/><stop offset=".427" stop-color="#ff66c2"/><stop offset=".468" stop-color="#ff4893"/><stop offset=".52" stop-color="#ff2e6c"/><stop offset=".583" stop-color="#ff194c"/><stop offset=".642" stop-color="#ff0c38"/><stop offset=".712" stop-color="#ff0025"/><stop offset=".858" stop-color="#ff000d"/><stop offset="1" stop-color="#ff0000"/></linearGradient>
<linearGradient id="c126" gradientUnits="userSpaceOnUse" x1="1203" x2="1807" y1="0" y2="0"><stop offset="0" stop-color="#00b7ff"/><stop offset=".232" stop-color="#01a0ff"/><stop offset=".273" stop-color="#399bff"/><stop offset=".313" stop-color="#7695ff"/><stop offset=".348" stop-color="#b18fff"/><stop offset=".389" stop-color="#ff85fd"/><stop offset=".406" stop-color="#ff72df"/><stop offset=".424" stop-color="#ff61c3"/><stop offset=".467" stop-color="#ff4393"/><stop offset=".518" stop-color="#ff2a6d"/><stop offset=".581" stop-color="#ff164d"/><stop offset=".634" stop-color="#ff0a3a"/><stop offset=".695" stop-color="#ff0029"/><stop offset=".844" stop-color="#ff000f"/><stop offset="1" stop-color="#ff0000"/></linearGradient>
<linearGradient id="c127" gradientUnits="userSpaceOnUse" x1="1204" x2="1807" y1="0" y2="0"><stop offset="0" stop-color="#00b3ff"/><stop offset=".229" stop-color="#019bff"/><stop offset=".272" stop-color="#3b95ff"/><stop offset=".312" stop-color="#778eff"/><stop offset=".348" stop-color="#b488ff"/><stop offset=".388" stop-color="#ff7ffe"/><stop offset=".405" stop-color="#ff6ce0"/><stop offset=".423" stop-color="#ff5cc4"/><stop offset=".466" stop-color="#ff3f94"/><stop offset=".517" stop-color="#ff276e"/><stop offset=".58" stop-color="#ff144e"/><stop offset=".682" stop-color="#ff002d"/><stop offset=".755" stop-color="#ff001e"/><stop offset=".882" stop-color="#ff000b"/><stop offset="1" stop-color="#ff0000"/></linearGradient>
<linearGradient id="c128" gradientUnits="userSpaceOnUse" x1="1205" x2="1798" y1="0" y2="0"><stop offset="0" stop-color="#00aeff"/><stop offset=".228" stop-color="#0096ff"/><stop offset=".27" stop-color="#368fff"/><stop offset=".314" stop-color="#7588ff"/><stop offset=".354" stop-color="#b881ff"/><stop offset=".393" stop-color="#ff78ff"/><stop offset=".41" stop-color="#ff67e1"/><stop offset=".428" stop-color="#ff57c5"/><stop offset=".47" stop-color="#ff3c97"/><stop offset=".523" stop-color="#ff2570"/><stop offset=".585" stop-color="#ff1251"/><stop offset=".68" stop-color="#ff0031"/><stop offset=".754" stop-color="#ff0021"/><stop offset=".865" stop-color="#ff000f"/><stop offset="1" stop-color="#ff0001"/></linearGradient>
<linearGradient id="c129" gradientUnits="userSpaceOnUse" x1="1206" x2="1790" y1="0" y2="0"><stop offset="0" stop-color="#00a9ff"/><stop offset=".228" stop-color="#0090ff"/><stop offset=".272" stop-color="#378aff"/><stop offset=".317" stop-color="#7682ff"/><stop offset=".358" stop-color="#b87aff"/><stop offset=".397" stop-color="#ff72ff"/><stop offset=".414" stop-color="#ff61e1"/><stop offset=".433" stop-color="#ff52c6"/><stop offset=".476" stop-color="#ff3898"/><stop offset=".527" stop-color="#ff2272"/><stop offset=".589" stop-color="#ff1153"/><stop offset=".676" stop-color="#ff0036"/><stop offset=".755" stop-color="#ff0023"/><stop offset=".866" stop-color="#ff0011"/><stop offset="1" stop-color="#ff0003"/></linearGradient>
<linearGradient id="c130" gradientUnits="userSpaceOnUse" x1="1207" x2="1781" y1="0" y2="0"><stop offset="0" stop-color="#00a5ff"/><stop offset=".228" stop-color="#008bff"/><stop offset=".272" stop-color="#3585ff"/><stop offset=".317" stop-color="#727dff"/><stop offset=".355" stop-color="#ad76ff"/><stop offset=".404" stop-color="#ff6afd"/><stop offset=".439" stop-color="#ff4dc7"/><stop offset=".483" stop-color="#ff349a"/><stop offset=".535" stop-color="#ff1f74"/><stop offset=".596" stop-color="#ff0f55"/><stop offset=".674" stop-color="#ff003a"/><stop offset=".761" stop-color="#ff0025"/><stop offset=".869" stop-color="#ff0014"/><stop offset="1" stop-color="#ff0005"/></linearGradient>
<linearGradient id="c131" gradientUnits="userSpaceOnUse" x1="1208" x2="1773" y1="0" y2="0"><stop offset="0" stop-color="#00a0ff"/><stop offset=".228" stop-color="#0086ff"/><stop offset=".274" stop-color="#367fff"/><stop offset=".32" stop-color="#7477ff"/><stop offset=".361" stop-color="#b06fff"/><stop offset=".409" stop-color="#ff64fd"/><stop offset=".444" stop-color="#ff48c8"/><stop offset=".488" stop-color="#ff309b"/><stop offset=".54" stop-color="#ff1d76"/><stop offset=".602" stop-color="#ff0d57"/><stop offset=".671" stop-color="#ff003f"/><stop offset=".765" stop-color="#ff0028"/><stop offset=".871" stop-color="#ff0016"/><stop offset="1" stop-color="#ff0007"/></linearGradient>
<linearGradient id="c132" gradientUnits="userSpaceOnUse" x1="1209" x2="1764" y1="0" y2="0"><stop offset="0" stop-color="#009cff"/><stop offset=".229" stop-color="#0081ff"/><stop offset=".277" stop-color="#387aff"/><stop offset=".324" stop-color="#7571ff"/><stop offset=".368" stop-color="#b369ff"/><stop offset=".414" stop-color="#ff5efe"/><stop offset=".45" stop-color="#ff44c9"/><stop offset=".494" stop-color="#ff2d9d"/><stop offset=".546" stop-color="#ff1b78"/><stop offset=".607" stop-color="#ff0b5a"/><stop offset=".668" stop-color="#ff0044"/><stop offset=".769" stop-color="#ff002a"/><stop offset=".874" stop-color="#ff0018"/><stop offset="1" stop-color="#ff0009"/></linearGradient>
<linearGradient id="c133" gradientUnits="userSpaceOnUse" x1="1210" x2="1756" y1="0" y2="0"><stop offset="0" stop-color="#0097ff"/><stop offset=".229" stop-color="#007cff"/><stop offset=".28" stop-color="#3a74ff"/><stop offset=".33" stop-color="#786cff"/><stop offset=".374" stop-color="#b663ff"/><stop offset=".419" stop-color="#ff58fe"/><stop offset=".456" stop-color="#ff3fca"/><stop offset=".498" stop-color="#ff2aa0"/><stop offset=".549" stop-color="#ff197c"/><stop offset=".612" stop-color="#ff095c"/><stop offset=".665" stop-color="#ff0049"/><stop offset=".773" stop-color="#ff002d"/><stop offset=".877" stop-color="#ff001b"/><stop offset="1" stop-color="#ff000b"/></linearGradient>
<linearGradient id="c134" gradientUnits="userSpaceOnUse" x1="1211" x2="1747" y1="0" y2="0"><stop offset="0" stop-color="#0093ff"/><stop offset=".229" stop-color="#0078ff"/><stop offset=".284" stop-color="#3b6fff"/><stop offset=".334" stop-color="#7966ff"/><stop offset=".381" stop-color="#ba5dff"/><stop offset=".425" stop-color="#ff53ff"/><stop offset=".463" stop-color="#ff3bcb"/><stop offset=".506" stop-color="#ff27a1"/><stop offset=".556" stop-color="#ff167e"/><stop offset=".618" stop-color="#ff085f"/><stop offset=".662" stop-color="#ff004e"/><stop offset=".776" stop-color="#ff0030"/><stop offset=".879" stop-color="#ff001d"/><stop offset="1" stop-color="#ff000e"/></linearGradient>
<linearGradient id="c135" gradientUnits="userSpaceOnUse" x1="1212" x2="1739" y1="0" y2="0"><stop offset="0" stop-color="#008fff"/><stop offset=".23" stop-color="#0173ff"/><stop offset=".285" stop-color="#3b6aff"/><stop offset=".336" stop-color="#7861ff"/><stop offset=".385" stop-color="#ba57ff"/><stop offset=".431" stop-color="#ff4dff"/><stop offset=".469" stop-color="#ff36cc"/><stop offset=".512" stop-color="#ff23a2"/><stop offset=".564" stop-color="#ff137f"/><stop offset=".624" stop-color="#ff0661"/><stop offset=".657" stop-color="#ff0054"/><stop offset=".782" stop-color="#ff0032"/><stop offset=".882" stop-color="#ff0020"/><stop offset="1" stop-color="#ff0010"/></linearGradient>
<linearGradient id="c136" gradientUnits="userSpaceOnUse" x1="1213" x2="1730" y1="0" y2="0"><stop offset="0" stop-color="#008aff"/><stop offset=".23" stop-color="#016fff"/><stop offset=".284" stop-color="#3866ff"/><stop offset=".337" stop-color="#745dff"/><stop offset=".383" stop-color="#b054ff"/><stop offset=".439" stop-color="#ff47fd"/><stop offset=".476" stop-color="#ff32cd"/><stop offset=".52" stop-color="#ff20a3"/><stop offset=".571" stop-color="#ff1181"/><stop offset=".631" stop-color="#ff0464"/><stop offset=".654" stop-color="#ff005a"/><stop offset=".702" stop-color="#ff004a"/><stop offset=".785" stop-color="#ff0035"/><stop offset=".884" stop-color="#ff0023"/><stop offset="1" stop-color="#ff0013"/></linearGradient>
<linearGradient id="c137" gradientUnits="userSpaceOnUse" x1="1214" x2="1722" y1="0" y2="0"><stop offset="0" stop-color="#0086ff"/><stop offset=".23" stop-color="#016aff"/><stop offset=".287" stop-color="#3a61ff"/><stop offset=".341" stop-color="#7558ff"/><stop offset=".39" stop-color="#b34eff"/><stop offset=".445" stop-color="#ff41fe"/><stop offset=".482" stop-color="#ff2ece"/><stop offset=".526" stop-color="#ff1da6"/><stop offset=".577" stop-color="#ff0e83"/><stop offset=".638" stop-color="#ff0266"/><stop offset=".709" stop-color="#ff004c"/><stop offset=".791" stop-color="#ff0037"/><stop offset=".888" stop-color="#ff0025"/><stop offset="1" stop-color="#ff0016"/></linearGradient>
<linearGradient id="c138" gradientUnits="userSpaceOnUse" x1="1215" x2="1713" y1="0" y2="0"><stop offset="0" stop-color="#0082ff"/><stop offset=".231" stop-color="#0166ff"/><stop offset=".289" stop-color="#395dff"/><stop offset=".345" stop-color="#7653ff"/><stop offset=".398" stop-color="#b549ff"/><stop offset=".452" stop-color="#ff3cfe"/><stop offset=".488" stop-color="#ff2ad1"/><stop offset=".532" stop-color="#ff1aa9"/><stop offset=".582" stop-color="#ff0c87"/><stop offset=".643" stop-color="#ff0169"/><stop offset=".713" stop-color="#ff0050"/><stop offset=".793" stop-color="#ff003b"/><stop offset=".888" stop-color="#ff0029"/><stop offset="1" stop-color="#ff0019"/></linearGradient>
<linearGradient id="c139" gradientUnits="userSpaceOnUse" x1="1216" x2="1705" y1="0" y2="0"><stop offset="0" stop-color="#007eff"/><stop offset=".229" stop-color="#0062ff"/><stop offset=".288" stop-color="#3759ff"/><stop offset=".35" stop-color="#774eff"/><stop offset=".405" stop-color="#b843ff"/><stop offset=".458" stop-color="#ff37ff"/><stop offset=".495" stop-color="#ff26d2"/><stop offset=".54" stop-color="#ff16aa"/><stop offset=".591" stop-color="#ff0a88"/><stop offset=".648" stop-color="#ff006c"/><stop offset=".718" stop-color="#ff0053"/><stop offset=".798" stop-color="#ff003e"/><stop offset=".892" stop-color="#ff002b"/><stop offset="1" stop-color="#ff001b"/></linearGradient>
<linearGradient id="c140" gradientUnits="userSpaceOnUse" x1="1218" x2="1696" y1="0" y2="0"><stop offset="0" stop-color="#007aff"/><stop offset=".228" stop-color="#005eff"/><stop offset=".291" stop-color="#3854ff"/><stop offset=".351" stop-color="#764aff"/><stop offset=".41" stop-color="#b93eff"/><stop offset=".464" stop-color="#ff32ff"/><stop offset=".502" stop-color="#ff22d3"/><stop offset=".546" stop-color="#ff14ac"/><stop offset=".596" stop-color="#ff088b"/><stop offset=".655" stop-color="#ff006f"/><stop offset=".722" stop-color="#ff0056"/><stop offset=".801" stop-color="#ff0041"/><stop offset=".893" stop-color="#ff002f"/><stop offset="1" stop-color="#ff001f"/></linearGradient>
<linearGradient id="c141" gradientUnits="userSpaceOnUse" x1="1219" x2="1688" y1="0" y2="0"><stop offset="0" stop-color="#0076ff"/><stop offset=".228" stop-color="#005aff"/><stop offset=".292" stop-color="#3850ff"/><stop offset=".354" stop-color="#7446ff"/><stop offset=".407" stop-color="#af3bff"/><stop offset=".473" stop-color="#ff2dfd"/><stop offset=".512" stop-color="#ff1dd1"/><stop offset=".554" stop-color="#ff10ad"/><stop offset=".631" stop-color="#ff007f"/><stop offset=".663" stop-color="#ff0071"/><stop offset=".731" stop-color="#ff0058"/><stop offset=".808" stop-color="#ff0043"/><stop offset="1" stop-color="#ff0022"/></linearGradient>
<linearGradient id="c142" gradientUnits="userSpaceOnUse" x1="1220" x2="1679" y1="0" y2="0"><stop offset="0" stop-color="#0072ff"/><stop offset=".229" stop-color="#0056ff"/><stop offset=".296" stop-color="#394cff"/><stop offset=".359" stop-color="#7541ff"/><stop offset=".416" stop-color="#b236ff"/><stop offset=".481" stop-color="#ff28fd"/><stop offset=".519" stop-color="#ff1ad4"/><stop offset=".562" stop-color="#ff0eb0"/><stop offset=".627" stop-color="#ff0088"/><stop offset=".671" stop-color="#ff0074"/><stop offset=".736" stop-color="#ff005c"/><stop offset=".813" stop-color="#ff0047"/><stop offset="1" stop-color="#ff0025"/></linearGradient>
<linearGradient id="c143" gradientUnits="userSpaceOnUse" x1="1221" x2="1671" y1="0" y2="0"><stop offset="0" stop-color="#006eff"/><stop offset=".229" stop-color="#0052ff"/><stop offset=".298" stop-color="#3948ff"/><stop offset=".364" stop-color="#763dff"/><stop offset=".424" stop-color="#b531ff"/><stop offset=".489" stop-color="#ff23fe"/><stop offset=".527" stop-color="#ff16d5"/><stop offset=".571" stop-color="#ff0ab1"/><stop offset=".622" stop-color="#ff0091"/><stop offset=".678" stop-color="#ff0076"/><stop offset=".742" stop-color="#ff005f"/><stop offset=".818" stop-color="#ff004a"/><stop offset="1" stop-color="#ff0028"/></linearGradient>
<linearGradient id="c144" gradientUnits="userSpaceOnUse" x1="1222" x2="1662" y1="0" y2="0"><stop offset="0" stop-color="#006aff"/><stop offset=".23" stop-color="#004fff"/><stop offset=".302" stop-color="#3a44ff"/><stop offset=".37" stop-color="#7738ff"/><stop offset=".434" stop-color="#b72cff"/><stop offset=".498" stop-color="#ff1fff"/><stop offset=".536" stop-color="#ff12d6"/><stop offset=".58" stop-color="#ff07b3"/><stop offset=".618" stop-color="#ff009b"/><stop offset=".684" stop-color="#ff007a"/><stop offset=".748" stop-color="#ff0063"/><stop offset=".82" stop-color="#ff004e"/><stop offset="1" stop-color="#ff002c"/></linearGradient>
<linearGradient id="c145" gradientUnits="userSpaceOnUse" x1="1223" x2="1654" y1="0" y2="0"><stop offset="0" stop-color="#0066ff"/><stop offset=".23" stop-color="#004bff"/><stop offset=".304" stop-color="#3a40ff"/><stop offset=".376" stop-color="#7834ff"/><stop offset=".443" stop-color="#ba27ff"/><stop offset=".506" stop-color="#ff1aff"/><stop offset=".543" stop-color="#ff0fd9"/><stop offset=".587" stop-color="#ff05b6"/><stop offset=".636" stop-color="#ff0098"/><stop offset=".691" stop-color="#ff007d"/><stop offset=".754" stop-color="#ff0066"/><stop offset=".826" stop-color="#ff0052"/><stop offset="1" stop-color="#ff0030"/></linearGradient>
<linearGradient id="c146" gradientUnits="userSpaceOnUse" x1="1225" x2="1645" y1="0" y2="0"><stop offset="0" stop-color="#0062ff"/><stop offset=".229" stop-color="#0147ff"/><stop offset=".307" stop-color="#3b3cff"/><stop offset=".381" stop-color="#7930ff"/><stop offset=".45" stop-color="#ba23ff"/><stop offset=".514" stop-color="#fe16ff"/><stop offset=".552" stop-color="#ff0bda"/><stop offset=".595" stop-color="#ff02b8"/><stop offset=".643" stop-color="#ff009b"/><stop offset=".698" stop-color="#ff0081"/><stop offset=".76" stop-color="#ff006a"/><stop offset=".831" stop-color="#ff0056"/><stop offset="1" stop-color="#ff0034"/></linearGradient>
<linearGradient id="c147" gradientUnits="userSpaceOnUse" x1="1226" x2="1637" y1="0" y2="0"><stop offset="0" stop-color="#005fff"/><stop offset=".229" stop-color="#0144ff"/><stop offset=".307" stop-color="#3939ff"/><stop offset=".382" stop-color="#762dff"/><stop offset=".45" stop-color="#b320ff"/><stop offset=".526" stop-color="#ff11fd"/><stop offset=".564" stop-color="#ff07d8"/><stop offset=".606" stop-color="#ff00b9"/><stop offset=".655" stop-color="#ff009c"/><stop offset=".708" stop-color="#ff0083"/><stop offset=".769" stop-color="#ff006d"/><stop offset=".837" stop-color="#ff0059"/><stop offset="1" stop-color="#ff0038"/></linearGradient>
<linearGradient id="c148" gradientUnits="userSpaceOnUse" x1="1227" x2="1628" y1="0" y2="0"><stop offset="0" stop-color="#005bff"/><stop offset=".229" stop-color="#0141ff"/><stop offset=".312" stop-color="#3a35ff"/><stop offset=".389" stop-color="#7729ff"/><stop offset=".459" stop-color="#b41cff"/><stop offset=".536" stop-color="#ff0dfe"/><stop offset=".574" stop-color="#ff04db"/><stop offset=".616" stop-color="#ff00bc"/><stop offset=".663" stop-color="#ff00a0"/><stop offset=".716" stop-color="#ff0087"/><stop offset=".84" stop-color="#ff005e"/><stop offset="1" stop-color="#ff003c"/></linearGradient>
<linearGradient id="c149" gradientUnits="userSpaceOnUse" x1="1228" x2="1620" y1="0" y2="0"><stop offset="0" stop-color="#0057ff"/><stop offset=".23" stop-color="#013dff"/><stop offset=".314" stop-color="#3a32ff"/><stop offset=".395" stop-color="#7725ff"/><stop offset=".469" stop-color="#b618ff"/><stop offset=".546" stop-color="#ff09fe"/><stop offset=".587" stop-color="#ff00da"/><stop offset=".625" stop-color="#ff00be"/><stop offset=".671" stop-color="#ff00a3"/><stop offset=".724" stop-color="#ff008a"/><stop offset=".847" stop-color="#ff0061"/><stop offset="1" stop-color="#ff0041"/></linearGradient>
<linearGradient id="c150" gradientUnits="userSpaceOnUse" x1="1230" x2="1611" y1="0" y2="0"><stop offset="0" stop-color="#0053ff"/><stop offset=".226" stop-color="#003aff"/><stop offset=".312" stop-color="#372fff"/><stop offset=".399" stop-color="#7621ff"/><stop offset=".48" stop-color="#b913ff"/><stop offset=".556" stop-color="#ff05ff"/><stop offset=".593" stop-color="#ff00de"/><stop offset=".635" stop-color="#ff00c1"/><stop offset=".682" stop-color="#ff00a6"/><stop offset=".732" stop-color="#ff008f"/><stop offset=".853" stop-color="#ff0066"/><stop offset="1" stop-color="#ff0046"/></linearGradient>
<linearGradient id="c151" gradientUnits="userSpaceOnUse" x1="1231" x2="1603" y1="0" y2="0"><stop offset="0" stop-color="#0050ff"/><stop offset=".226" stop-color="#0037ff"/><stop offset=".317" stop-color="#392bff"/><stop offset=".406" stop-color="#771eff"/><stop offset=".489" stop-color="#b910ff"/><stop offset=".567" stop-color="#ff01ff"/><stop offset=".605" stop-color="#ff00df"/><stop offset=".645" stop-color="#ff00c3"/><stop offset=".739" stop-color="#ff0093"/><stop offset=".858" stop-color="#ff006a"/><stop offset="1" stop-color="#ff004a"/></linearGradient>
<linearGradient id="c152" gradientUnits="userSpaceOnUse" x1="1233" x2="1594" y1="0" y2="0"><stop offset="0" stop-color="#004cff"/><stop offset=".224" stop-color="#0034ff"/><stop offset=".319" stop-color="#3828ff"/><stop offset=".407" stop-color="#741bff"/><stop offset=".488" stop-color="#b00eff"/><stop offset=".562" stop-color="#ef00ff"/><stop offset=".582" stop-color="#ff00fd"/><stop offset=".618" stop-color="#ff00e0"/><stop offset=".659" stop-color="#ff00c4"/><stop offset=".751" stop-color="#ff0096"/><stop offset=".864" stop-color="#ff006f"/><stop offset="1" stop-color="#ff0050"/></linearGradient>
<linearGradient id="c153" gradientUnits="userSpaceOnUse" x1="1234" x2="1586" y1="0" y2="0"><stop offset="0" stop-color="#0049ff"/><stop offset=".224" stop-color="#0031ff"/><stop offset=".324" stop-color="#3a24ff"/><stop offset=".418" stop-color="#7717ff"/><stop offset=".554" stop-color="#de00ff"/><stop offset=".594" stop-color="#ff00fe"/><stop offset=".668" stop-color="#ff00c8"/><stop offset=".759" stop-color="#ff009a"/><stop offset=".869" stop-color="#ff0074"/><stop offset="1" stop-color="#ff0055"/></linearGradient>
<linearGradient id="c154" gradientUnits="userSpaceOnUse" x1="1235" x2="1577" y1="0" y2="0"><stop offset="0" stop-color="#0045ff"/><stop offset=".225" stop-color="#002eff"/><stop offset=".33" stop-color="#3b21ff"/><stop offset=".427" stop-color="#7813ff"/><stop offset=".547" stop-color="#ce00ff"/><stop offset=".608" stop-color="#ff00fe"/><stop offset=".681" stop-color="#ff00cb"/><stop offset=".769" stop-color="#ff009f"/><stop offset=".874" stop-color="#ff007a"/><stop offset="1" stop-color="#ff005b"/></linearGradient>
<linearGradient id="c155" gradientUnits="userSpaceOnUse" x1="1237" x2="1569" y1="0" y2="0"><stop offset="0" stop-color="#0041ff"/><stop offset=".223" stop-color="#002bff"/><stop offset=".331" stop-color="#3b1eff"/><stop offset=".434" stop-color="#7810ff"/><stop offset=".536" stop-color="#be00ff"/><stop offset=".62" stop-color="#ff00ff"/><stop offset=".693" stop-color="#ff00cd"/><stop offset=".78" stop-color="#ff00a2"/><stop offset=".88" stop-color="#ff007f"/><stop offset="1" stop-color="#ff0061"/></linearGradient>
<linearGradient id="c156" gradientUnits="userSpaceOnUse" x1="1238" x2="1560" y1="0" y2="0"><stop offset="0" stop-color="#003eff"/><stop offset=".224" stop-color="#0128ff"/><stop offset=".335" stop-color="#3a1bff"/><stop offset=".441" stop-color="#770dff"/><stop offset=".528" stop-color="#b000ff"/><stop offset=".637" stop-color="#ff00ff"/><stop offset=".708" stop-color="#ff00d0"/><stop offset=".789" stop-color="#ff00a8"/><stop offset=".885" stop-color="#ff0086"/><stop offset="1" stop-color="#ff0068"/></linearGradient>
<linearGradient id="c157" gradientUnits="userSpaceOnUse" x1="1240" x2="1552" y1="0" y2="0"><stop offset="0" stop-color="#003aff"/><stop offset=".221" stop-color="#0125ff"/><stop offset=".34" stop-color="#3b17ff"/><stop offset=".449" stop-color="#7809ff"/><stop offset=".516" stop-color="#a100ff"/><stop offset=".651" stop-color="#fe00ff"/><stop offset=".721" stop-color="#ff00d2"/><stop offset=".801" stop-color="#ff00ac"/><stop offset=".894" stop-color="#ff008b"/><stop offset="1" stop-color="#ff006f"/></linearGradient>
<linearGradient id="c158" gradientUnits="userSpaceOnUse" x1="1241" x2="1543" y1="0" y2="0"><stop offset="0" stop-color="#0037ff"/><stop offset=".222" stop-color="#0122ff"/><stop offset=".344" stop-color="#3b14ff"/><stop offset=".457" stop-color="#7706ff"/><stop offset=".507" stop-color="#9400ff"/><stop offset=".669" stop-color="#fe00ff"/><stop offset=".738" stop-color="#ff00d5"/><stop offset=".815" stop-color="#ff00b1"/><stop offset=".901" stop-color="#ff0092"/><stop offset="1" stop-color="#ff0076"/></linearGradient>
<linearGradient id="c159" gradientUnits="userSpaceOnUse" x1="1243" x2="1535" y1="0" y2="0"><stop offset="0" stop-color="#0034ff"/><stop offset=".219" stop-color="#011fff"/><stop offset=".346" stop-color="#3b12ff"/><stop offset=".466" stop-color="#7803ff"/><stop offset=".579" stop-color="#b900ff"/><stop offset=".685" stop-color="#fe00ff"/><stop offset=".757" stop-color="#ff00d5"/><stop offset=".825" stop-color="#ff00b5"/><stop offset=".908" stop-color="#ff0098"/><stop offset="1" stop-color="#ff007e"/></linearGradient>
<linearGradient id="c160" gradientUnits="userSpaceOnUse" x1="1244" x2="1526" y1="0" y2="0"><stop offset="0" stop-color="#0030ff"/><stop offset=".22" stop-color="#011dff"/><stop offset=".355" stop-color="#3c0fff"/><stop offset=".479" stop-color="#7900ff"/><stop offset=".596" stop-color="#b900ff"/><stop offset=".706" stop-color="#fd00ff"/><stop offset=".777" stop-color="#ff00d8"/><stop offset=".84" stop-color="#ff00bb"/><stop offset=".915" stop-color="#ff009f"/><stop offset="1" stop-color="#ff0087"/></linearGradient>
<linearGradient id="c161" gradientUnits="userSpaceOnUse" x1="1246" x2="1518" y1="0" y2="0"><stop offset="0" stop-color="#002dff"/><stop offset=".217" stop-color="#011aff"/><stop offset=".357" stop-color="#3b0cff"/><stop offset=".489" stop-color="#7900ff"/><stop offset=".61" stop-color="#b900ff"/><stop offset=".728" stop-color="#ff00ff"/><stop offset=".787" stop-color="#ff00de"/><stop offset=".849" stop-color="#ff00c1"/><stop offset=".919" stop-color="#ff00a7"/><stop offset="1" stop-color="#ff008f"/></linearGradient>
<linearGradient id="c162" gradientUnits="userSpaceOnUse" x1="1247" x2="1509" y1="0" y2="0"><stop offset="0" stop-color="#002aff"/><stop offset=".214" stop-color="#0018ff"/><stop offset=".447" stop-color="#6000ff"/><stop offset=".5" stop-color="#7800ff"/><stop offset=".63" stop-color="#ba00ff"/><stop offset=".752" stop-color="#ff00ff"/><stop offset=".809" stop-color="#ff00e0"/><stop offset=".866" stop-color="#ff00c7"/><stop offset="1" stop-color="#ff0099"/></linearGradient>
<linearGradient id="c163" gradientUnits="userSpaceOnUse" x1="1249" x2="1501" y1="0" y2="0"><stop offset="0" stop-color="#0026ff"/><stop offset=".21" stop-color="#0015ff"/><stop offset=".429" stop-color="#5500ff"/><stop offset=".508" stop-color="#7700ff"/><stop offset=".643" stop-color="#b800ff"/><stop offset=".774" stop-color="#fe00ff"/><stop offset=".881" stop-color="#ff00cc"/><stop offset="1" stop-color="#ff00a3"/></linearGradient>
<linearGradient id="c164" gradientUnits="userSpaceOnUse" x1="1250" x2="1492" y1="0" y2="0"><stop offset="0" stop-color="#0023ff"/><stop offset=".211" stop-color="#0013ff"/><stop offset=".413" stop-color="#4a00ff"/><stop offset=".525" stop-color="#7800ff"/><stop offset=".665" stop-color="#b800ff"/><stop offset=".802" stop-color="#fe00ff"/><stop offset=".901" stop-color="#ff00d2"/><stop offset="1" stop-color="#ff00af"/></linearGradient>
<linearGradient id="c165" gradientUnits="userSpaceOnUse" x1="1252" x2="1484" y1="0" y2="0"><stop offset="0" stop-color="#0020ff"/><stop offset=".207" stop-color="#0010ff"/><stop offset=".392" stop-color="#4000ff"/><stop offset=".534" stop-color="#7700ff"/><stop offset=".685" stop-color="#b800ff"/><stop offset=".828" stop-color="#fd00ff"/><stop offset=".918" stop-color="#ff00d7"/><stop offset="1" stop-color="#ff00ba"/></linearGradient>
<linearGradient id="c166" gradientUnits="userSpaceOnUse" x1="1254" x2="1475" y1="0" y2="0"><stop offset="0" stop-color="#001dff"/><stop offset=".204" stop-color="#000eff"/><stop offset=".371" stop-color="#3600ff"/><stop offset=".552" stop-color="#7800ff"/><stop offset=".71" stop-color="#b800ff"/><stop offset=".864" stop-color="#ff00ff"/><stop offset=".928" stop-color="#ff00e3"/><stop offset="1" stop-color="#ff00c8"/></linearGradient>
<linearGradient id="c167" gradientUnits="userSpaceOnUse" x1="1256" x2="1467" y1="0" y2="0"><stop offset="0" stop-color="#0019ff"/><stop offset=".199" stop-color="#010bff"/><stop offset=".346" stop-color="#2d00ff"/><stop offset=".569" stop-color="#7800ff"/><stop offset=".739" stop-color="#bb00ff"/><stop offset=".896" stop-color="#ff00ff"/><stop offset="1" stop-color="#ff00d5"/></linearGradient>
<linearGradient id="c168" gradientUnits="userSpaceOnUse" x1="1257" x2="1458" y1="0" y2="0"><stop offset="0" stop-color="#0016ff"/><stop offset=".199" stop-color="#0109ff"/><stop offset=".323" stop-color="#2400ff"/><stop offset=".587" stop-color="#7700ff"/><stop offset=".766" stop-color="#b900ff"/><stop offset=".935" stop-color="#fe00ff"/><stop offset="1" stop-color="#ff00e6"/></linearGradient>
<linearGradient id="c169" gradientUnits="userSpaceOnUse" x1="1259" x2="1450" y1="0" y2="0"><stop offset="0" stop-color="#0013ff"/><stop offset=".194" stop-color="#0107ff"/><stop offset=".293" stop-color="#1b00ff"/><stop offset=".56" stop-color="#6900ff"/><stop offset=".775" stop-color="#b100ff"/><stop offset=".974" stop-color="#fe00ff"/><stop offset="1" stop-color="#ff00f6"/></linearGradient>
<linearGradient id="c170" gradientUnits="userSpaceOnUse" x1="1261" x2="1441" y1="0" y2="0"><stop offset="0" stop-color="#0010ff"/><stop offset=".183" stop-color="#0005ff"/><stop offset=".233" stop-color="#0c02ff"/><stop offset=".439" stop-color="#4100ff"/><stop offset=".639" stop-color="#7b00ff"/><stop offset=".822" stop-color="#b500ff"/><stop offset="1" stop-color="#f500ff"/></linearGradient>
<linearGradient id="c171" gradientUnits="userSpaceOnUse" x1="1263" x2="1433" y1="0" y2="0"><stop offset="0" stop-color="#000dff"/><stop offset=".176" stop-color="#0003ff"/><stop offset=".218" stop-color="#0900ff"/><stop offset=".429" stop-color="#3c00ff"/><stop offset=".629" stop-color="#7100ff"/><stop offset=".818" stop-color="#a900ff"/><stop offset="1" stop-color="#e400ff"/></linearGradient>
<linearGradient id="c172" gradientUnits="userSpaceOnUse" x1="1265" x2="1424" y1="0" y2="0"><stop offset="0" stop-color="#0009ff"/><stop offset=".17" stop-color="#0000ff"/><stop offset=".201" stop-color="#0600ff"/><stop offset=".623" stop-color="#6800ff"/><stop offset=".818" stop-color="#9d00ff"/><stop offset="1" stop-color="#d200ff"/></linearGradient>
<linearGradient id="c173" gradientUnits="userSpaceOnUse" x1="1267" x2="1416" y1="0" y2="0"><stop offset="0" stop-color="#0006ff"/><stop offset=".161" stop-color="#0000ff"/><stop offset=".188" stop-color="#0500ff"/><stop offset=".611" stop-color="#6000ff"/><stop offset="1" stop-color="#c300ff"/></linearGradient>
<linearGradient id="c174" gradientUnits="userSpaceOnUse" x1="1270" x2="1407" y1="0" y2="0"><stop offset="0" stop-color="#0003ff"/><stop offset=".146" stop-color="#0000ff"/><stop offset=".182" stop-color="#0700ff"/><stop offset=".606" stop-color="#5900ff"/><stop offset="1" stop-color="#b300ff"/></linearGradient>
<linearGradient id="c175" gradientUnits="userSpaceOnUse" x1="1272" x2="1399" y1="0" y2="0"><stop offset="0" stop-color="#0000ff"/><stop offset=".134" stop-color="#0000ff"/><stop offset=".181" stop-color="#0800ff"/><stop offset=".606" stop-color="#5300ff"/><stop offset="1" stop-color="#a500ff"/></linearGradient>
<linearGradient id="c176" gradientUnits="userSpaceOnUse" x1="1275" x2="1390" y1="0" y2="0"><stop offset="0" stop-color="#0000ff"/><stop offset=".113" stop-color="#0000ff"/><stop offset=".209" stop-color="#0f00ff"/><stop offset=".617" stop-color="#5000ff"/><stop offset="1" stop-color="#9600ff"/></linearGradient>
<linearGradient id="c177" gradientUnits="userSpaceOnUse" x1="1277" x2="1381" y1="0" y2="0"><stop offset="0" stop-color="#0000ff"/><stop offset=".096" stop-color="#0000ff"/><stop offset=".221" stop-color="#1100ff"/><stop offset=".625" stop-color="#4b00ff"/><stop offset="1" stop-color="#8700ff"/></linearGradient>
<linearGradient id="c178" gradientUnits="userSpaceOnUse" x1="1281" x2="1373" y1="0" y2="0"><stop offset="0" stop-color="#0000ff"/><stop offset=".054" stop-color="#0100ff"/><stop offset=".337" stop-color="#2200ff"/><stop offset="1" stop-color="#7b00ff"/></linearGradient>
<linearGradient id="c179" gradientUnits="userSpaceOnUse" x1="1284" x2="1364" y1="0" y2="0"><stop offset="0" stop-color="#0000ff"/><stop offset=".487" stop-color="#3200ff"/><stop offset="1" stop-color="#6e00ff"/></linearGradient>
<linearGradient id="c180" gradientUnits="userSpaceOnUse" x1="1288" x2="1356" y1="0" y2="0"><stop offset="0" stop-color="#0600ff"/><stop offset="1" stop-color="#6200ff"/></linearGradient>
<linearGradient id="c181" gradientUnits="userSpaceOnUse" x1="1292" x2="1347" y1="0" y2="0"><stop offset="0" stop-color="#0c00ff"/><stop offset="1" stop-color="#5600ff"/></linearGradient>
<linearGradient id="c182" gradientUnits="userSpaceOnUse" x1="1296" x2="1339" y1="0" y2="0"><stop offset="0" stop-color="#1200ff"/><stop offset="1" stop-color="#4b00ff"/></linearGradient>
<linearGradient id="c183" gradientUnits="userSpaceOnUse" x1="1301" x2="1330" y1="0" y2="0"><stop offset="0" stop-color="#1a00ff"/><stop offset="1" stop-color="#4000ff"/></linearGradient>
<linearGradient id="c184" gradientUnits="userSpaceOnUse" x1="1305" x2="1322" y1="0" y2="0"><stop offset="0" stop-color="#2000ff"/><stop offset="1" stop-color="#3600ff"/></linearGradient>
<g id="cf" shape-rendering="crispEdges">
<rect x="1217" y="120" width="30" height="3" fill="url(#c0)"/>
<rect x="1208" y="123" width="51" height="3" fill="url(#c1)"/>
<rect x="1202" y="126" width="67" height="3" fill="url(#c2)"/>
<rect x="1198" y="129" width="80" height="3" fill="url(#c3)"/>
<rect x="1194" y="132" width="91" height="3" fill="url(#c4)"/>
<rect x="1191" y="135" width="101" height="3" fill="url(#c5)"/>
<rect x="1189" y="138" width="110" height="3" fill="url(#c6)"/>
<rect x="1187" y="141" width="119" height="3" fill="url(#c7)"/>
<rect x="1184" y="144" width="128" height="3" fill="url(#c8)"/>
<rect x="1183" y="147" width="135" height="3" fill="url(#c9)"/>
<rect x="1181" y="150" width="143" height="3" fill="url(#c10)"/>
<rect x="1179" y="153" width="151" height="3" fill="url(#c11)"/>
<rect x="1178" y="156" width="158" height="3" fill="url(#c12)"/>
<rect x="1176" y="159" width="165" height="3" fill="url(#c13)"/>
<rect x="1175" y="162" width="172" height="3" fill="url(#c14)"/>
<rect x="1174" y="165" width="178" height="3" fill="url(#c15)"/>
<rect x="1173" y="168" width="184" height="3" fill="url(#c16)"/>
<rect x="1172" y="171" width="190" height="3" fill="url(#c17)"/>
<rect x="1171" y="174" width="196" height="3" fill="url(#c18)"/>
<rect x="1170" y="177" width="202" height="3" fill="url(#c19)"/>
<rect x="1169" y="180" width="208" height="3" fill="url(#c20)"/>
<rect x="1169" y="183" width="213" height="3" fill="url(#c21)"/>
<rect x="1168" y="186" width="218" height="3" fill="url(#c22)"/>
<rect x="1167" y="189" width="224" height="3" fill="url(#c23)"/>
<rect x="1167" y="192" width="229" height="3" fill="url(#c24)"/>
<rect x="1166" y="195" width="234" height="3" fill="url(#c25)"/>
<rect x="1166" y="198" width="239" height="3" fill="url(#c26)"/>
<rect x="1165" y="201" width="244" height="3" fill="url(#c27)"/>
<rect x="1165" y="204" width="249" height="3" fill="url(#c28)"/>
<rect x="1164" y="207" width="254" height="3" fill="url(#c29)"/>
<rect x="1164" y="210" width="258" height="3" fill="url(#c30)"/>
<rect x="1164" y="213" width="263" height="3" fill="url(#c31)"/>
<rect x="1164" y="216" width="267" height="3" fill="url(#c32)"/>
<rect x="1163" y="219" width="272" height="3" fill="url(#c33)"/>
<rect x="1163" y="222" width="276" height="3" fill="url(#c34)"/>
<rect x="1163" y="225" width="281" height="3" fill="url(#c35)"/>
<rect x="1163" y="228" width="285" height="3" fill="url(#c36)"/>
<rect x="1162" y="231" width="290" height="3" fill="url(#c37)"/>
<rect x="1162" y="234" width="294" height="3" fill="url(#c38)"/>
<rect x="1162" y="237" width="298" height="3" fill="url(#c39)"/>
<rect x="1162" y="240" width="302" height="3" fill="url(#c40)"/>
<rect x="1162" y="243" width="307" height="3" fill="url(#c41)"/>
<rect x="1162" y="246" width="311" height="3" fill="url(#c42)"/>
<rect x="1162" y="249" width="315" height="3" fill="url(#c43)"/>
<rect x="1162" y="252" width="319" height="3" fill="url(#c44)"/>
<rect x="1162" y="255" width="323" height="3" fill="url(#c45)"/>
<rect x="1162" y="258" width="327" height="3" fill="url(#c46)"/>
<rect x="1162" y="261" width="331" height="3" fill="url(#c47)"/>
<rect x="1162" y="264" width="335" height="3" fill="url(#c48)"/>
<rect x="1162" y="267" width="339" height="3" fill="url(#c49)"/>
<rect x="1162" y="270" width="343" height="3" fill="url(#c50)"/>
<rect x="1162" y="273" width="347" height="3" fill="url(#c51)"/>
<rect x="1162" y="276" width="351" height="3" fill="url(#c52)"/>
<rect x="1163" y="279" width="354" height="3" fill="url(#c53)"/>
<rect x="1163" y="282" width="358" height="3" fill="url(#c54)"/>
<rect x="1163" y="285" width="362" height="3" fill="url(#c55)"/>
<rect x="1163" y="288" width="366" height="3" fill="url(#c56)"/>
<rect x="1163" y="291" width="370" height="3" fill="url(#c57)"/>
<rect x="1164" y="294" width="373" height="3" fill="url(#c58)"/>
<rect x="1164" y="297" width="377" height="3" fill="url(#c59)"/>
<rect x="1164" y="300" width="381" height="3" fill="url(#c60)"/>
<rect x="1164" y="303" width="385" height="3" fill="url(#c61)"/>
<rect x="1165" y="306" width="388" height="3" fill="url(#c62)"/>
<rect x="1165" y="309" width="392" height="3" fill="url(#c63)"/>
<rect x="1165" y="312" width="396" height="3" fill="url(#c64)"/>
<rect x="1165" y="315" width="400" height="3" fill="url(#c65)"/>
<rect x="1166" y="318" width="403" height="3" fill="url(#c66)"/>
<rect x="1166" y="321" width="407" height="3" fill="url(#c67)"/>
<rect x="1166" y="324" width="411" height="3" fill="url(#c68)"/>
<rect x="1167" y="327" width="414" height="3" fill="url(#c69)"/>
<rect x="1167" y="330" width="418" height="3" fill="url(#c70)"/>
<rect x="1168" y="333" width="421" height="3" fill="url(#c71)"/>
<rect x="1168" y="336" width="425" height="3" fill="url(#c72)"/>
<rect x="1168" y="339" width="429" height="3" fill="url(#c73)"/>
<rect x="1169" y="342" width="432" height="3" fill="url(#c74)"/>
<rect x="1169" y="345" width="436" height="3" fill="url(#c75)"/>
<rect x="1170" y="348" width="439" height="3" fill="url(#c76)"/>
<rect x="1170" y="351" width="443" height="3" fill="url(#c77)"/>
<rect x="1171" y="354" width="446" height="3" fill="url(#c78)"/>
<rect x="1171" y="357" width="450" height="3" fill="url(#c79)"/>
<rect x="1172" y="360" width="453" height="3" fill="url(#c80)"/>
<rect x="1172" y="363" width="457" height="3" fill="url(#c81)"/>
<rect x="1173" y="366" width="460" height="3" fill="url(#c82)"/>
<rect x="1173" y="369" width="464" height="3" fill="url(#c83)"/>
<rect x="1174" y="372" width="467" height="3" fill="url(#c84)"/>
<rect x="1174" y="375" width="471" height="3" fill="url(#c85)"/>
<rect x="1175" y="378" width="474" height="3" fill="url(#c86)"/>
<rect x="1175" y="381" width="478" height="3" fill="url(#c87)"/>
<rect x="1176" y="384" width="481" height="3" fill="url(#c88)"/>
<rect x="1176" y="387" width="485" height="3" fill="url(#c89)"/>
<rect x="1177" y="390" width="488" height="3" fill="url(#c90)"/>
<rect x="1177" y="393" width="492" height="3" fill="url(#c91)"/>
<rect x="1178" y="396" width="494" height="3" fill="url(#c92)"/>
<rect x="1179" y="399" width="497" height="3" fill="url(#c93)"/>
<rect x="1179" y="402" width="501" height="3" fill="url(#c94)"/>
<rect x="1180" y="405" width="504" height="3" fill="url(#c95)"/>
<rect x="1180" y="408" width="508" height="3" fill="url(#c96)"/>
<rect x="1181" y="411" width="511" height="3" fill="url(#c97)"/>
<rect x="1182" y="414" width="514" height="3" fill="url(#c98)"/>
<rect x="1182" y="417" width="518" height="3" fill="url(#c99)"/>
<rect x="1183" y="420" width="521" height="3" fill="url(#c100)"/>
<rect x="1184" y="423" width="524" height="3" fill="url(#c101)"/>
<rect x="1184" y="426" width="528" height="3" fill="url(#c102)"/>
<rect x="1185" y="429" width="531" height="3" fill="url(#c103)"/>
<rect x="1186" y="432" width="534" height="3" fill="url(#c104)"/>
<rect x="1186" y="435" width="538" height="3" fill="url(#c105)"/>
<rect x="1187" y="438" width="541" height="3" fill="url(#c106)"/>
<rect x="1188" y="441" width="544" height="3" fill="url(#c107)"/>
<rect x="1189" y="444" width="547" height="3" fill="url(#c108)"/>
<rect x="1189" y="447" width="551" height="3" fill="url(#c109)"/>
<rect x="1190" y="450" width="554" height="3" fill="url(#c110)"/>
<rect x="1191" y="453" width="557" height="3" fill="url(#c111)"/>
<rect x="1192" y="456" width="560" height="3" fill="url(#c112)"/>
<rect x="1193" y="459" width="563" height="3" fill="url(#c113)"/>
<rect x="1193" y="462" width="567" height="3" fill="url(#c114)"/>
<rect x="1194" y="465" width="570" height="3" fill="url(#c115)"/>
<rect x="1195" y="468" width="573" height="3" fill="url(#c116)"/>
<rect x="1196" y="471" width="576" height="3" fill="url(#c117)"/>
<rect x="1197" y="474" width="579" height="3" fill="url(#c118)"/>
<rect x="1197" y="477" width="583" height="3" fill="url(#c119)"/>
<rect x="1198" y="480" width="586" height="3" fill="url(#c120)"/>
<rect x="1199" y="483" width="588" height="3" fill="url(#c121)"/>
<rect x="1200" y="486" width="591" height="3" fill="url(#c122)"/>
<rect x="1201" y="489" width="594" height="3" fill="url(#c123)"/>
<rect x="1202" y="492" width="597" height="3" fill="url(#c124)"/>
<rect x="1203" y="495" width="600" height="3" fill="url(#c125)"/>
<rect x="1203" y="498" width="604" height="3" fill="url(#c126)"/>
<rect x="1204" y="501" width="603" height="3" fill="url(#c127)"/>
<rect x="1205" y="504" width="593" height="3" fill="url(#c128)"/>
<rect x="1206" y="507" width="584" height="3" fill="url(#c129)"/>
<rect x="1207" y="510" width="574" height="3" fill="url(#c130)"/>
<rect x="1208" y="513" width="565" height="3" fill="url(#c131)"/>
<rect x="1209" y="516" width="555" height="3" fill="url(#c132)"/>
<rect x="1210" y="519" width="546" height="3" fill="url(#c133)"/>
<rect x="1211" y="522" width="536" height="3" fill="url(#c134)"/>
<rect x="1212" y="525" width="527" height="3" fill="url(#c135)"/>
<rect x="1213" y="528" width="517" height="3" fill="url(#c136)"/>
<rect x="1214" y="531" width="508" height="3" fill="url(#c137)"/>
<rect x="1215" y="534" width="498" height="3" fill="url(#c138)"/>
<rect x="1216" y="537" width="489" height="3" fill="url(#c139)"/>
<rect x="1218" y="540" width="478" height="3" fill="url(#c140)"/>
<rect x="1219" y="543" width="469" height="3" fill="url(#c141)"/>
<rect x="1220" y="546" width="459" height="3" fill="url(#c142)"/>
<rect x="1221" y="549" width="450" height="3" fill="url(#c143)"/>
<rect x="1222" y="552" width="440" height="3" fill="url(#c144)"/>
<rect x="1223" y="555" width="431" height="3" fill="url(#c145)"/>
<rect x="1225" y="558" width="420" height="3" fill="url(#c146)"/>
<rect x="1226" y="561" width="411" height="3" fill="url(#c147)"/>
<rect x="1227" y="564" width="401" height="3" fill="url(#c148)"/>
<rect x="1228" y="567" width="392" height="3" fill="url(#c149)"/>
<rect x="1230" y="570" width="381" height="3" fill="url(#c150)"/>
<rect x="1231" y="573" width="372" height="3" fill="url(#c151)"/>
<rect x="1233" y="576" width="361" height="3" fill="url(#c152)"/>
<rect x="1234" y="579" width="352" height="3" fill="url(#c153)"/>
<rect x="1235" y="582" width="342" height="3" fill="url(#c154)"/>
<rect x="1237" y="585" width="332" height="3" fill="url(#c155)"/>
<rect x="1238" y="588" width="322" height="3" fill="url(#c156)"/>
<rect x="1240" y="591" width="312" height="3" fill="url(#c157)"/>
<rect x="1241" y="594" width="302" height="3" fill="url(#c158)"/>
<rect x="1243" y="597" width="292" height="3" fill="url(#c159)"/>
<rect x="1244" y="600" width="282" height="3" fill="url(#c160)"/>
<rect x="1246" y="603" width="272" height="3" fill="url(#c161)"/>
<rect x="1247" y="606" width="262" height="3" fill="url(#c162)"/>
<rect x="1249" y="609" width="252" height="3" fill="url(#c163)"/>
<rect x="1250" y="612" width="242" height="3" fill="url(#c164)"/>
<rect x="1252" y="615" width="232" height="3" fill="url(#c165)"/>
<rect x="1254" y="618" width="221" height="3" fill="url(#c166)"/>
<rect x="1256" y="621" width="211" height="3" fill="url(#c167)"/>
<rect x="1257" y="624" width="201" height="3" fill="url(#c168)"/>
<rect x="1259" y="627" width="191" height="3" fill="url(#c169)"/>
<rect x="1261" y="630" width="180" height="3" fill="url(#c170)"/>
<rect x="1263" y="633" width="170" height="3" fill="url(#c171)"/>
<rect x="1265" y="636" width="159" height="3" fill="url(#c172)"/>
<rect x="1267" y="639" width="149" height="3" fill="url(#c173)"/>
<rect x="1270" y="642" width="137" height="3" fill="url(#c174)"/>
<rect x="1272" y="645" width="127" height="3" fill="url(#c175)"/>
<rect x="1275" y="648" width="115" height="3" fill="url(#c176)"/>
<rect x="1277" y="651" width="104" height="3" fill="url(#c177)"/>
<rect x="1281" y="654" width="92" height="3" fill="url(#c178)"/>
<rect x="1284" y="657" width="80" height="3" fill="url(#c179)"/>
<rect x="1288" y="660" width="68" height="3" fill="url(#c180)"/>
<rect x="1292" y="663" width="55" height="3" fill="url(#c181)"/>
<rect x="1296" y="666" width="43" height="3" fill="url(#c182)"/>
<rect x="1301" y="669" width="29" height="3" fill="url(#c183)"/>
<rect x="1305" y="672" width="17" height="3" fill="url(#c184)"/>
</g></defs>
<g clip-path="url(#hs)"><use href="#cf"/><rect x="1160" y="116" width="739" height="562" fill="#000" opacity=".4"/></g>
<g clip-path="url(#tri)"><use href="#cf"/></g>
<path d="M1160.15 116.1H1898.75V677.95H1160.15Z" fill="none" stroke="#989898" stroke-width="2"/>
<path d="M1160.15 677.95v7" stroke="#ddd" stroke-width="1.9"/>
<path d="M1160.15 677.9h-7" stroke="#ddd" stroke-width="1.9"/>
<text x="1160.15" y="702.9" font-size="16.2" fill="#dcdcdc" text-anchor="middle">0</text>
<text x="1153" y="685.9" font-size="16.2" fill="#dcdcdc" text-anchor="end">0</text>
<path d="M1248.02 677.95v7" stroke="#ddd" stroke-width="1.9"/>
<path d="M1160.15 611.19h-7" stroke="#ddd" stroke-width="1.9"/>
<text x="1248.02" y="702.9" font-size="16.2" fill="#dcdcdc" text-anchor="middle">0,1</text>
<text x="1153" y="617.79" font-size="16.2" fill="#dcdcdc" text-anchor="end">0,1</text>
<path d="M1335.89 677.95v7" stroke="#ddd" stroke-width="1.9"/>
<path d="M1160.15 544.48h-7" stroke="#ddd" stroke-width="1.9"/>
<text x="1335.89" y="702.9" font-size="16.2" fill="#dcdcdc" text-anchor="middle">0,2</text>
<text x="1153" y="551.08" font-size="16.2" fill="#dcdcdc" text-anchor="end">0,2</text>
<path d="M1423.76 677.95v7" stroke="#ddd" stroke-width="1.9"/>
<path d="M1160.15 477.77h-7" stroke="#ddd" stroke-width="1.9"/>
<text x="1423.76" y="702.9" font-size="16.2" fill="#dcdcdc" text-anchor="middle">0,3</text>
<text x="1153" y="484.37" font-size="16.2" fill="#dcdcdc" text-anchor="end">0,3</text>
<path d="M1511.63 677.95v7" stroke="#ddd" stroke-width="1.9"/>
<path d="M1160.15 411.06h-7" stroke="#ddd" stroke-width="1.9"/>
<text x="1511.63" y="702.9" font-size="16.2" fill="#dcdcdc" text-anchor="middle">0,4</text>
<text x="1153" y="417.66" font-size="16.2" fill="#dcdcdc" text-anchor="end">0,4</text>
<path d="M1599.5 677.95v7" stroke="#ddd" stroke-width="1.9"/>
<path d="M1160.15 344.35h-7" stroke="#ddd" stroke-width="1.9"/>
<text x="1599.5" y="702.9" font-size="16.2" fill="#dcdcdc" text-anchor="middle">0,5</text>
<text x="1153" y="350.95" font-size="16.2" fill="#dcdcdc" text-anchor="end">0,5</text>
<path d="M1687.37 677.95v7" stroke="#ddd" stroke-width="1.9"/>
<path d="M1160.15 277.64h-7" stroke="#ddd" stroke-width="1.9"/>
<text x="1687.37" y="702.9" font-size="16.2" fill="#dcdcdc" text-anchor="middle">0,6</text>
<text x="1153" y="284.24" font-size="16.2" fill="#dcdcdc" text-anchor="end">0,6</text>
<path d="M1775.24 677.95v7" stroke="#ddd" stroke-width="1.9"/>
<path d="M1160.15 210.93h-7" stroke="#ddd" stroke-width="1.9"/>
<text x="1775.24" y="702.9" font-size="16.2" fill="#dcdcdc" text-anchor="middle">0,7</text>
<text x="1153" y="217.53" font-size="16.2" fill="#dcdcdc" text-anchor="end">0,7</text>
<path d="M1863.11 677.95v7" stroke="#ddd" stroke-width="1.9"/>
<path d="M1160.15 144.22h-7" stroke="#ddd" stroke-width="1.9"/>
<text x="1863.11" y="702.9" font-size="16.2" fill="#dcdcdc" text-anchor="middle">0,8</text>
<text x="1153" y="150.82" font-size="16.2" fill="#dcdcdc" text-anchor="end">0,8</text>
<text x="1514.5" y="110.2" font-size="16.06" fill="#dcdcdc" text-anchor="middle">CIE 1931 xy</text>
<rect x="1424.2" y="412.8" width="15.2" height="15.2" fill="none" stroke="#fff" stroke-width="1.8"/>
<rect x="1422.9" y="377.4" width="15.2" height="15.2" fill="none" stroke="#fff" stroke-width="1.8"/>
<rect x="1420" y="342.9" width="15.2" height="15.2" fill="none" stroke="#fff" stroke-width="1.8"/>
<rect x="1418" y="307.4" width="15.2" height="15.2" fill="none" stroke="#fff" stroke-width="1.8"/>
<rect x="1415" y="268.4" width="15.2" height="15.2" fill="none" stroke="#fff" stroke-width="1.8"/>
<rect x="1445.8" y="425.3" width="15.2" height="15.2" fill="none" stroke="#fff" stroke-width="1.8"/>
<rect x="1464.5" y="400.2" width="15.2" height="15.2" fill="none" stroke="#fff" stroke-width="1.8"/>
<rect x="1483.3" y="379" width="15.2" height="15.2" fill="none" stroke="#fff" stroke-width="1.8"/>
<rect x="1500.4" y="357" width="15.2" height="15.2" fill="none" stroke="#fff" stroke-width="1.8"/>
<rect x="1520.3" y="332.1" width="15.2" height="15.2" fill="none" stroke="#fff" stroke-width="1.8"/>
<rect x="1411.9" y="449.4" width="15.2" height="15.2" fill="none" stroke="#fff" stroke-width="1.8"/>
<rect x="1396.4" y="449.4" width="15.2" height="15.2" fill="none" stroke="#fff" stroke-width="1.8"/>
<rect x="1381" y="449.4" width="15.2" height="15.2" fill="none" stroke="#fff" stroke-width="1.8"/>
<rect x="1365.5" y="449.4" width="15.2" height="15.2" fill="none" stroke="#fff" stroke-width="1.8"/>
<rect x="1350" y="449.4" width="15.2" height="15.2" fill="none" stroke="#fff" stroke-width="1.8"/>
<rect x="1483.3" y="448.3" width="15.2" height="15.2" fill="none" stroke="#fff" stroke-width="1.8"/>
<rect x="1542.2" y="448.3" width="15.2" height="15.2" fill="none" stroke="#fff" stroke-width="1.8"/>
<rect x="1594.9" y="448.3" width="15.2" height="15.2" fill="none" stroke="#fff" stroke-width="1.8"/>
<rect x="1650.8" y="448.3" width="15.2" height="15.2" fill="none" stroke="#fff" stroke-width="1.8"/>
<rect x="1714.4" y="448.3" width="15.2" height="15.2" fill="none" stroke="#fff" stroke-width="1.8"/>
<rect x="1397.9" y="485.7" width="15.2" height="15.2" fill="none" stroke="#fff" stroke-width="1.8"/>
<rect x="1369.7" y="521.6" width="15.2" height="15.2" fill="none" stroke="#fff" stroke-width="1.8"/>
<rect x="1342.2" y="555.3" width="15.2" height="15.2" fill="none" stroke="#fff" stroke-width="1.8"/>
<rect x="1314.4" y="589.9" width="15.2" height="15.2" fill="none" stroke="#fff" stroke-width="1.8"/>
<rect x="1283.3" y="628.5" width="15.2" height="15.2" fill="none" stroke="#fff" stroke-width="1.8"/>
<rect x="1429" y="473.5" width="15.2" height="15.2" fill="none" stroke="#fff" stroke-width="1.8"/>
<rect x="1430.3" y="498.4" width="15.2" height="15.2" fill="none" stroke="#fff" stroke-width="1.8"/>
<rect x="1430.3" y="518.5" width="15.2" height="15.2" fill="none" stroke="#fff" stroke-width="1.8"/>
<rect x="1431.7" y="542.1" width="15.2" height="15.2" fill="none" stroke="#fff" stroke-width="1.8"/>
<rect x="1433.4" y="566.5" width="15.2" height="15.2" fill="none" stroke="#fff" stroke-width="1.8"/>
<rect x="1427.5" y="450" width="15.2" height="15.2" fill="none" stroke="#000" stroke-width="1.6"/>
<circle cx="1430.5" cy="420.4" r="4.8" fill="#a0bea0" stroke="#000" stroke-width="1.2"/>
<circle cx="1430.5" cy="389.7" r="4.8" fill="#87be87" stroke="#000" stroke-width="1.2"/>
<circle cx="1430.5" cy="355.3" r="4.8" fill="#6cbe6c" stroke="#000" stroke-width="1.2"/>
<circle cx="1429" cy="319.6" r="4.8" fill="#4cbe4c" stroke="#000" stroke-width="1.2"/>
<circle cx="1425.6" cy="279.1" r="4.8" fill="#08be08" stroke="#000" stroke-width="1.2"/>
<circle cx="1451.9" cy="432.9" r="4.8" fill="#bebea0" stroke="#000" stroke-width="1.2"/>
<circle cx="1469" cy="409.3" r="4.8" fill="#bebe87" stroke="#000" stroke-width="1.2"/>
<circle cx="1486.3" cy="388" r="4.8" fill="#bebe6c" stroke="#000" stroke-width="1.2"/>
<circle cx="1505.2" cy="364.4" r="4.8" fill="#bebe4c" stroke="#000" stroke-width="1.2"/>
<circle cx="1524.8" cy="339.9" r="4.8" fill="#bebe08" stroke="#000" stroke-width="1.2"/>
<circle cx="1416.4" cy="456.5" r="4.8" fill="#a0bebe" stroke="#000" stroke-width="1.2"/>
<circle cx="1402.7" cy="456.5" r="4.8" fill="#87bebe" stroke="#000" stroke-width="1.2"/>
<circle cx="1389.9" cy="456.5" r="4.8" fill="#6cbebe" stroke="#000" stroke-width="1.2"/>
<circle cx="1375.8" cy="456.5" r="4.8" fill="#4cbebe" stroke="#000" stroke-width="1.2"/>
<circle cx="1358.7" cy="456.5" r="4.8" fill="#08bebe" stroke="#000" stroke-width="1.2"/>
<circle cx="1483" cy="456.2" r="4.8" fill="#bea0a0" stroke="#000" stroke-width="1.2"/>
<circle cx="1542" cy="454.5" r="4.8" fill="#be8787" stroke="#000" stroke-width="1.2"/>
<circle cx="1598.1" cy="454.5" r="4.8" fill="#be6c6c" stroke="#000" stroke-width="1.2"/>
<circle cx="1654" cy="454.5" r="4.8" fill="#be4c4c" stroke="#000" stroke-width="1.2"/>
<circle cx="1714.4" cy="454.5" r="4.8" fill="#be0808" stroke="#000" stroke-width="1.2"/>
<circle cx="1405.5" cy="492.1" r="4.8" fill="#a0a0be" stroke="#000" stroke-width="1.2"/>
<circle cx="1379.1" cy="524.3" r="4.8" fill="#8787be" stroke="#000" stroke-width="1.2"/>
<circle cx="1351.1" cy="560" r="4.8" fill="#6c6cbe" stroke="#000" stroke-width="1.2"/>
<circle cx="1322" cy="595.7" r="4.8" fill="#4c4cbe" stroke="#000" stroke-width="1.2"/>
<circle cx="1292" cy="633.2" r="4.8" fill="#0808be" stroke="#000" stroke-width="1.2"/>
<circle cx="1433.5" cy="481.1" r="4.8" fill="#bea0be" stroke="#000" stroke-width="1.2"/>
<circle cx="1434.8" cy="501.4" r="4.8" fill="#be87be" stroke="#000" stroke-width="1.2"/>
<circle cx="1434.8" cy="521.5" r="4.8" fill="#be6cbe" stroke="#000" stroke-width="1.2"/>
<circle cx="1436.4" cy="547.9" r="4.8" fill="#be4cbe" stroke="#000" stroke-width="1.2"/>
<circle cx="1437.9" cy="572.6" r="4.8" fill="#be08be" stroke="#000" stroke-width="1.2"/>
<circle cx="1432" cy="457.6" r="4.8" fill="#fff" stroke="#000" stroke-width="1.2"/>
<rect x="1638.8" y="121" width="256.5" height="216.5" fill="#353535"/>
<defs><clipPath id="icl"><rect x="1642.3" y="124.25" width="250" height="209.75"/></clipPath>
<linearGradient id="i0" gradientUnits="userSpaceOnUse" x1="1642" x2="1893" y1="0" y2="0"><stop offset="0" stop-color="#b0ff00"/><stop offset=".797" stop-color="#ffff00"/><stop offset="1" stop-color="#ffeb00"/></linearGradient>
<linearGradient id="i1" gradientUnits="userSpaceOnUse" x1="1642" x2="1893" y1="0" y2="0"><stop offset="0" stop-color="#b1ff00"/><stop offset=".789" stop-color="#ffff00"/><stop offset="1" stop-color="#ffea00"/></linearGradient>
<linearGradient id="i2" gradientUnits="userSpaceOnUse" x1="1642" x2="1893" y1="0" y2="0"><stop offset="0" stop-color="#b2ff00"/><stop offset=".781" stop-color="#ffff00"/><stop offset="1" stop-color="#ffe900"/></linearGradient>
<linearGradient id="i3" gradientUnits="userSpaceOnUse" x1="1642" x2="1893" y1="0" y2="0"><stop offset="0" stop-color="#b2ff00"/><stop offset=".773" stop-color="#ffff00"/><stop offset="1" stop-color="#ffe800"/></linearGradient>
<linearGradient id="i4" gradientUnits="userSpaceOnUse" x1="1642" x2="1893" y1="0" y2="0"><stop offset="0" stop-color="#b3ff00"/><stop offset=".761" stop-color="#ffff00"/><stop offset="1" stop-color="#ffe800"/></linearGradient>
<linearGradient id="i5" gradientUnits="userSpaceOnUse" x1="1642" x2="1893" y1="0" y2="0"><stop offset="0" stop-color="#b4ff00"/><stop offset=".753" stop-color="#ffff00"/><stop offset="1" stop-color="#ffe700"/></linearGradient>
<linearGradient id="i6" gradientUnits="userSpaceOnUse" x1="1642" x2="1893" y1="0" y2="0"><stop offset="0" stop-color="#b4ff00"/><stop offset=".745" stop-color="#ffff00"/><stop offset="1" stop-color="#ffe600"/></linearGradient>
<linearGradient id="i7" gradientUnits="userSpaceOnUse" x1="1642" x2="1893" y1="0" y2="0"><stop offset="0" stop-color="#b5ff00"/><stop offset=".737" stop-color="#ffff00"/><stop offset="1" stop-color="#ffe500"/></linearGradient>
<linearGradient id="i8" gradientUnits="userSpaceOnUse" x1="1642" x2="1893" y1="0" y2="0"><stop offset="0" stop-color="#b6ff00"/><stop offset=".729" stop-color="#ffff00"/><stop offset="1" stop-color="#ffe400"/></linearGradient>
<linearGradient id="i9" gradientUnits="userSpaceOnUse" x1="1642" x2="1893" y1="0" y2="0"><stop offset="0" stop-color="#b6ff01"/><stop offset=".721" stop-color="#ffff00"/><stop offset="1" stop-color="#ffe400"/></linearGradient>
<linearGradient id="i10" gradientUnits="userSpaceOnUse" x1="1642" x2="1893" y1="0" y2="0"><stop offset="0" stop-color="#b7ff01"/><stop offset=".709" stop-color="#ffff00"/><stop offset="1" stop-color="#ffe300"/></linearGradient>
<linearGradient id="i11" gradientUnits="userSpaceOnUse" x1="1642" x2="1893" y1="0" y2="0"><stop offset="0" stop-color="#b8ff02"/><stop offset=".701" stop-color="#ffff00"/><stop offset="1" stop-color="#ffe200"/></linearGradient>
<linearGradient id="i12" gradientUnits="userSpaceOnUse" x1="1642" x2="1893" y1="0" y2="0"><stop offset="0" stop-color="#b9ff02"/><stop offset=".693" stop-color="#ffff00"/><stop offset="1" stop-color="#ffe100"/></linearGradient>
<linearGradient id="i13" gradientUnits="userSpaceOnUse" x1="1642" x2="1893" y1="0" y2="0"><stop offset="0" stop-color="#b9ff02"/><stop offset=".112" stop-color="#c4ff00"/><stop offset=".685" stop-color="#ffff00"/><stop offset="1" stop-color="#ffe000"/></linearGradient>
<linearGradient id="i14" gradientUnits="userSpaceOnUse" x1="1642" x2="1893" y1="0" y2="0"><stop offset="0" stop-color="#baff03"/><stop offset=".131" stop-color="#c7ff00"/><stop offset=".677" stop-color="#ffff00"/><stop offset="1" stop-color="#ffe000"/></linearGradient>
<linearGradient id="i15" gradientUnits="userSpaceOnUse" x1="1642" x2="1893" y1="0" y2="0"><stop offset="0" stop-color="#bbff03"/><stop offset=".147" stop-color="#c9ff00"/><stop offset=".669" stop-color="#ffff00"/><stop offset="1" stop-color="#ffdf00"/></linearGradient>
<linearGradient id="i16" gradientUnits="userSpaceOnUse" x1="1642" x2="1893" y1="0" y2="0"><stop offset="0" stop-color="#bbff04"/><stop offset=".167" stop-color="#ccff00"/><stop offset=".661" stop-color="#ffff00"/><stop offset="1" stop-color="#ffde00"/></linearGradient>
<linearGradient id="i17" gradientUnits="userSpaceOnUse" x1="1642" x2="1893" y1="0" y2="0"><stop offset="0" stop-color="#bcff04"/><stop offset=".183" stop-color="#ceff00"/><stop offset=".649" stop-color="#ffff00"/><stop offset="1" stop-color="#ffdd00"/></linearGradient>
<linearGradient id="i18" gradientUnits="userSpaceOnUse" x1="1642" x2="1893" y1="0" y2="0"><stop offset="0" stop-color="#bdff04"/><stop offset=".203" stop-color="#d1ff00"/><stop offset=".641" stop-color="#ffff00"/><stop offset="1" stop-color="#ffdc00"/></linearGradient>
<linearGradient id="i19" gradientUnits="userSpaceOnUse" x1="1642" x2="1893" y1="0" y2="0"><stop offset="0" stop-color="#beff05"/><stop offset=".219" stop-color="#d3ff00"/><stop offset=".633" stop-color="#ffff00"/><stop offset="1" stop-color="#ffdc00"/></linearGradient>
<linearGradient id="i20" gradientUnits="userSpaceOnUse" x1="1642" x2="1893" y1="0" y2="0"><stop offset="0" stop-color="#beff05"/><stop offset=".239" stop-color="#d6ff00"/><stop offset=".625" stop-color="#ffff00"/><stop offset="1" stop-color="#ffdb00"/></linearGradient>
<linearGradient id="i21" gradientUnits="userSpaceOnUse" x1="1642" x2="1893" y1="0" y2="0"><stop offset="0" stop-color="#bfff06"/><stop offset=".255" stop-color="#d9ff00"/><stop offset=".618" stop-color="#ffff00"/><stop offset="1" stop-color="#ffda00"/></linearGradient>
<linearGradient id="i22" gradientUnits="userSpaceOnUse" x1="1642" x2="1893" y1="0" y2="0"><stop offset="0" stop-color="#c0ff06"/><stop offset=".275" stop-color="#dcff00"/><stop offset=".61" stop-color="#ffff00"/><stop offset="1" stop-color="#ffd900"/></linearGradient>
<linearGradient id="i23" gradientUnits="userSpaceOnUse" x1="1642" x2="1893" y1="0" y2="0"><stop offset="0" stop-color="#c1ff06"/><stop offset=".291" stop-color="#deff00"/><stop offset=".598" stop-color="#ffff00"/><stop offset="1" stop-color="#ffd800"/></linearGradient>
<linearGradient id="i24" gradientUnits="userSpaceOnUse" x1="1642" x2="1893" y1="0" y2="0"><stop offset="0" stop-color="#c1ff07"/><stop offset=".311" stop-color="#e1ff00"/><stop offset=".59" stop-color="#ffff00"/><stop offset="1" stop-color="#ffd800"/></linearGradient>
<linearGradient id="i25" gradientUnits="userSpaceOnUse" x1="1642" x2="1893" y1="0" y2="0"><stop offset="0" stop-color="#c2ff07"/><stop offset=".327" stop-color="#e4ff00"/><stop offset=".582" stop-color="#ffff00"/><stop offset="1" stop-color="#ffd700"/></linearGradient>
<linearGradient id="i26" gradientUnits="userSpaceOnUse" x1="1642" x2="1893" y1="0" y2="0"><stop offset="0" stop-color="#c3ff08"/><stop offset=".347" stop-color="#e6ff00"/><stop offset=".574" stop-color="#ffff00"/><stop offset="1" stop-color="#ffd600"/></linearGradient>
<linearGradient id="i27" gradientUnits="userSpaceOnUse" x1="1642" x2="1893" y1="0" y2="0"><stop offset="0" stop-color="#c4ff08"/><stop offset=".363" stop-color="#e9ff00"/><stop offset=".566" stop-color="#ffff00"/><stop offset="1" stop-color="#ffd500"/></linearGradient>
<linearGradient id="i28" gradientUnits="userSpaceOnUse" x1="1642" x2="1893" y1="0" y2="0"><stop offset="0" stop-color="#c5ff08"/><stop offset=".378" stop-color="#ecff00"/><stop offset=".558" stop-color="#ffff00"/><stop offset="1" stop-color="#ffd400"/></linearGradient>
<linearGradient id="i29" gradientUnits="userSpaceOnUse" x1="1642" x2="1893" y1="0" y2="0"><stop offset="0" stop-color="#c5ff09"/><stop offset=".398" stop-color="#efff00"/><stop offset=".55" stop-color="#ffff00"/><stop offset="1" stop-color="#ffd400"/></linearGradient>
<linearGradient id="i30" gradientUnits="userSpaceOnUse" x1="1642" x2="1893" y1="0" y2="0"><stop offset="0" stop-color="#c6ff09"/><stop offset=".414" stop-color="#f1ff00"/><stop offset=".538" stop-color="#ffff00"/><stop offset="1" stop-color="#ffd300"/></linearGradient>
<linearGradient id="i31" gradientUnits="userSpaceOnUse" x1="1642" x2="1893" y1="0" y2="0"><stop offset="0" stop-color="#c7ff0a"/><stop offset=".53" stop-color="#ffff00"/><stop offset="1" stop-color="#ffd200"/></linearGradient>
<linearGradient id="i32" gradientUnits="userSpaceOnUse" x1="1642" x2="1893" y1="0" y2="0"><stop offset="0" stop-color="#c8ff0a"/><stop offset=".522" stop-color="#ffff00"/><stop offset="1" stop-color="#ffd100"/></linearGradient>
<linearGradient id="i33" gradientUnits="userSpaceOnUse" x1="1642" x2="1893" y1="0" y2="0"><stop offset="0" stop-color="#c8ff0b"/><stop offset=".514" stop-color="#ffff00"/><stop offset="1" stop-color="#ffd100"/></linearGradient>
<linearGradient id="i34" gradientUnits="userSpaceOnUse" x1="1642" x2="1893" y1="0" y2="0"><stop offset="0" stop-color="#c9ff0b"/><stop offset=".506" stop-color="#ffff00"/><stop offset="1" stop-color="#ffd000"/></linearGradient>
<linearGradient id="i35" gradientUnits="userSpaceOnUse" x1="1642" x2="1893" y1="0" y2="0"><stop offset="0" stop-color="#caff0b"/><stop offset=".498" stop-color="#ffff00"/><stop offset="1" stop-color="#ffcf00"/></linearGradient>
<linearGradient id="i36" gradientUnits="userSpaceOnUse" x1="1642" x2="1893" y1="0" y2="0"><stop offset="0" stop-color="#cbff0c"/><stop offset=".486" stop-color="#ffff01"/><stop offset="1" stop-color="#ffce00"/></linearGradient>
<linearGradient id="i37" gradientUnits="userSpaceOnUse" x1="1642" x2="1893" y1="0" y2="0"><stop offset="0" stop-color="#ccff0c"/><stop offset=".478" stop-color="#ffff02"/><stop offset="1" stop-color="#ffce00"/></linearGradient>
<linearGradient id="i38" gradientUnits="userSpaceOnUse" x1="1642" x2="1893" y1="0" y2="0"><stop offset="0" stop-color="#ccff0d"/><stop offset=".47" stop-color="#ffff02"/><stop offset=".725" stop-color="#ffe500"/><stop offset="1" stop-color="#ffcd00"/></linearGradient>
<linearGradient id="i39" gradientUnits="userSpaceOnUse" x1="1642" x2="1893" y1="0" y2="0"><stop offset="0" stop-color="#cdff0d"/><stop offset=".462" stop-color="#ffff03"/><stop offset=".721" stop-color="#ffe400"/><stop offset="1" stop-color="#ffcc00"/></linearGradient>
<linearGradient id="i40" gradientUnits="userSpaceOnUse" x1="1642" x2="1893" y1="0" y2="0"><stop offset="0" stop-color="#ceff0e"/><stop offset=".454" stop-color="#ffff03"/><stop offset=".598" stop-color="#fff000"/><stop offset="1" stop-color="#ffcb00"/></linearGradient>
<linearGradient id="i41" gradientUnits="userSpaceOnUse" x1="1642" x2="1893" y1="0" y2="0"><stop offset="0" stop-color="#cfff0e"/><stop offset=".446" stop-color="#ffff04"/><stop offset=".614" stop-color="#ffed00"/><stop offset="1" stop-color="#ffca00"/></linearGradient>
<linearGradient id="i42" gradientUnits="userSpaceOnUse" x1="1642" x2="1893" y1="0" y2="0"><stop offset="0" stop-color="#d0ff0e"/><stop offset=".438" stop-color="#ffff05"/><stop offset=".633" stop-color="#ffea00"/><stop offset="1" stop-color="#ffca00"/></linearGradient>
<linearGradient id="i43" gradientUnits="userSpaceOnUse" x1="1642" x2="1893" y1="0" y2="0"><stop offset="0" stop-color="#d1ff0f"/><stop offset=".426" stop-color="#ffff05"/><stop offset=".649" stop-color="#ffe800"/><stop offset="1" stop-color="#ffc900"/></linearGradient>
<linearGradient id="i44" gradientUnits="userSpaceOnUse" x1="1642" x2="1893" y1="0" y2="0"><stop offset="0" stop-color="#d1ff0f"/><stop offset=".418" stop-color="#ffff06"/><stop offset=".669" stop-color="#ffe500"/><stop offset="1" stop-color="#ffc800"/></linearGradient>
<linearGradient id="i45" gradientUnits="userSpaceOnUse" x1="1642" x2="1893" y1="0" y2="0"><stop offset="0" stop-color="#d2ff10"/><stop offset=".41" stop-color="#ffff07"/><stop offset=".685" stop-color="#ffe300"/><stop offset="1" stop-color="#ffc700"/></linearGradient>
<linearGradient id="i46" gradientUnits="userSpaceOnUse" x1="1642" x2="1893" y1="0" y2="0"><stop offset="0" stop-color="#d3ff10"/><stop offset=".402" stop-color="#ffff07"/><stop offset=".705" stop-color="#ffe000"/><stop offset="1" stop-color="#ffc700"/></linearGradient>
<linearGradient id="i47" gradientUnits="userSpaceOnUse" x1="1642" x2="1893" y1="0" y2="0"><stop offset="0" stop-color="#d4ff11"/><stop offset=".394" stop-color="#ffff08"/><stop offset=".721" stop-color="#ffdd00"/><stop offset="1" stop-color="#ffc600"/></linearGradient>
<linearGradient id="i48" gradientUnits="userSpaceOnUse" x1="1642" x2="1893" y1="0" y2="0"><stop offset="0" stop-color="#d5ff11"/><stop offset=".386" stop-color="#ffff08"/><stop offset=".741" stop-color="#ffdb00"/><stop offset="1" stop-color="#ffc500"/></linearGradient>
<linearGradient id="i49" gradientUnits="userSpaceOnUse" x1="1642" x2="1893" y1="0" y2="0"><stop offset="0" stop-color="#d6ff12"/><stop offset=".375" stop-color="#ffff09"/><stop offset=".757" stop-color="#ffd900"/><stop offset="1" stop-color="#ffc500"/></linearGradient>
<linearGradient id="i50" gradientUnits="userSpaceOnUse" x1="1642" x2="1893" y1="0" y2="0"><stop offset="0" stop-color="#d6ff12"/><stop offset=".367" stop-color="#ffff0a"/><stop offset=".773" stop-color="#ffd600"/><stop offset="1" stop-color="#ffc400"/></linearGradient>
<linearGradient id="i51" gradientUnits="userSpaceOnUse" x1="1642" x2="1893" y1="0" y2="0"><stop offset="0" stop-color="#d7ff13"/><stop offset=".359" stop-color="#ffff0b"/><stop offset=".793" stop-color="#ffd400"/><stop offset="1" stop-color="#ffc300"/></linearGradient>
<linearGradient id="i52" gradientUnits="userSpaceOnUse" x1="1642" x2="1893" y1="0" y2="0"><stop offset="0" stop-color="#d8ff13"/><stop offset=".351" stop-color="#ffff0b"/><stop offset=".809" stop-color="#ffd200"/><stop offset="1" stop-color="#ffc200"/></linearGradient>
<linearGradient id="i53" gradientUnits="userSpaceOnUse" x1="1642" x2="1893" y1="0" y2="0"><stop offset="0" stop-color="#d9ff13"/><stop offset=".343" stop-color="#ffff0c"/><stop offset=".653" stop-color="#ffdf04"/><stop offset="1" stop-color="#ffc200"/></linearGradient>
<linearGradient id="i54" gradientUnits="userSpaceOnUse" x1="1642" x2="1893" y1="0" y2="0"><stop offset="0" stop-color="#daff14"/><stop offset=".335" stop-color="#ffff0c"/><stop offset=".649" stop-color="#ffde04"/><stop offset="1" stop-color="#ffc100"/></linearGradient>
<linearGradient id="i55" gradientUnits="userSpaceOnUse" x1="1642" x2="1893" y1="0" y2="0"><stop offset="0" stop-color="#dbff14"/><stop offset=".327" stop-color="#ffff0d"/><stop offset=".645" stop-color="#ffde05"/><stop offset="1" stop-color="#ffc000"/></linearGradient>
<linearGradient id="i56" gradientUnits="userSpaceOnUse" x1="1642" x2="1893" y1="0" y2="0"><stop offset="0" stop-color="#dcff15"/><stop offset=".315" stop-color="#ffff0e"/><stop offset=".641" stop-color="#ffdd05"/><stop offset="1" stop-color="#ffbf00"/></linearGradient>
<linearGradient id="i57" gradientUnits="userSpaceOnUse" x1="1642" x2="1893" y1="0" y2="0"><stop offset="0" stop-color="#dcff15"/><stop offset=".307" stop-color="#ffff0f"/><stop offset=".633" stop-color="#ffdd06"/><stop offset="1" stop-color="#ffbf00"/></linearGradient>
<linearGradient id="i58" gradientUnits="userSpaceOnUse" x1="1642" x2="1893" y1="0" y2="0"><stop offset="0" stop-color="#ddff16"/><stop offset=".299" stop-color="#ffff0f"/><stop offset=".629" stop-color="#ffdd06"/><stop offset="1" stop-color="#ffbe00"/></linearGradient>
<linearGradient id="i59" gradientUnits="userSpaceOnUse" x1="1642" x2="1893" y1="0" y2="0"><stop offset="0" stop-color="#deff16"/><stop offset=".291" stop-color="#ffff10"/><stop offset=".625" stop-color="#ffdc07"/><stop offset="1" stop-color="#ffbd00"/></linearGradient>
<linearGradient id="i60" gradientUnits="userSpaceOnUse" x1="1642" x2="1893" y1="0" y2="0"><stop offset="0" stop-color="#dfff17"/><stop offset=".283" stop-color="#ffff10"/><stop offset=".622" stop-color="#ffdc07"/><stop offset="1" stop-color="#ffbc00"/></linearGradient>
<linearGradient id="i61" gradientUnits="userSpaceOnUse" x1="1642" x2="1893" y1="0" y2="0"><stop offset="0" stop-color="#e0ff17"/><stop offset=".275" stop-color="#ffff11"/><stop offset=".618" stop-color="#ffdb08"/><stop offset="1" stop-color="#ffbc00"/></linearGradient>
<linearGradient id="i62" gradientUnits="userSpaceOnUse" x1="1642" x2="1893" y1="0" y2="0"><stop offset="0" stop-color="#e1ff18"/><stop offset=".263" stop-color="#ffff12"/><stop offset=".614" stop-color="#ffdb08"/><stop offset="1" stop-color="#ffbb00"/></linearGradient>
<linearGradient id="i63" gradientUnits="userSpaceOnUse" x1="1642" x2="1893" y1="0" y2="0"><stop offset="0" stop-color="#e2ff18"/><stop offset=".255" stop-color="#ffff13"/><stop offset=".606" stop-color="#ffdb09"/><stop offset="1" stop-color="#ffba00"/></linearGradient>
<linearGradient id="i64" gradientUnits="userSpaceOnUse" x1="1642" x2="1893" y1="0" y2="0"><stop offset="0" stop-color="#e3ff19"/><stop offset=".247" stop-color="#ffff13"/><stop offset=".602" stop-color="#ffda09"/><stop offset="1" stop-color="#ffba01"/></linearGradient>
<linearGradient id="i65" gradientUnits="userSpaceOnUse" x1="1642" x2="1893" y1="0" y2="0"><stop offset="0" stop-color="#e4ff19"/><stop offset=".239" stop-color="#ffff14"/><stop offset=".598" stop-color="#ffda0a"/><stop offset="1" stop-color="#ffb901"/></linearGradient>
<linearGradient id="i66" gradientUnits="userSpaceOnUse" x1="1642" x2="1893" y1="0" y2="0"><stop offset="0" stop-color="#e5ff1a"/><stop offset=".231" stop-color="#ffff15"/><stop offset=".594" stop-color="#ffd90a"/><stop offset="1" stop-color="#ffb801"/></linearGradient>
<linearGradient id="i67" gradientUnits="userSpaceOnUse" x1="1642" x2="1893" y1="0" y2="0"><stop offset="0" stop-color="#e6ff1a"/><stop offset=".223" stop-color="#ffff15"/><stop offset=".586" stop-color="#ffd90b"/><stop offset="1" stop-color="#ffb702"/></linearGradient>
<linearGradient id="i68" gradientUnits="userSpaceOnUse" x1="1642" x2="1893" y1="0" y2="0"><stop offset="0" stop-color="#e7ff1b"/><stop offset=".211" stop-color="#ffff16"/><stop offset=".582" stop-color="#ffd90b"/><stop offset="1" stop-color="#ffb702"/></linearGradient>
<linearGradient id="i69" gradientUnits="userSpaceOnUse" x1="1642" x2="1893" y1="0" y2="0"><stop offset="0" stop-color="#e7ff1b"/><stop offset=".203" stop-color="#ffff17"/><stop offset=".578" stop-color="#ffd80c"/><stop offset="1" stop-color="#ffb602"/></linearGradient>
</defs>
<g clip-path="url(#icl)"><g shape-rendering="crispEdges">
<rect x="1642" y="124" width="251" height="3" fill="url(#i0)"/>
<rect x="1642" y="127" width="251" height="3" fill="url(#i1)"/>
<rect x="1642" y="130" width="251" height="3" fill="url(#i2)"/>
<rect x="1642" y="133" width="251" height="3" fill="url(#i3)"/>
<rect x="1642" y="136" width="251" height="3" fill="url(#i4)"/>
<rect x="1642" y="139" width="251" height="3" fill="url(#i5)"/>
<rect x="1642" y="142" width="251" height="3" fill="url(#i6)"/>
<rect x="1642" y="145" width="251" height="3" fill="url(#i7)"/>
<rect x="1642" y="148" width="251" height="3" fill="url(#i8)"/>
<rect x="1642" y="151" width="251" height="3" fill="url(#i9)"/>
<rect x="1642" y="154" width="251" height="3" fill="url(#i10)"/>
<rect x="1642" y="157" width="251" height="3" fill="url(#i11)"/>
<rect x="1642" y="160" width="251" height="3" fill="url(#i12)"/>
<rect x="1642" y="163" width="251" height="3" fill="url(#i13)"/>
<rect x="1642" y="166" width="251" height="3" fill="url(#i14)"/>
<rect x="1642" y="169" width="251" height="3" fill="url(#i15)"/>
<rect x="1642" y="172" width="251" height="3" fill="url(#i16)"/>
<rect x="1642" y="175" width="251" height="3" fill="url(#i17)"/>
<rect x="1642" y="178" width="251" height="3" fill="url(#i18)"/>
<rect x="1642" y="181" width="251" height="3" fill="url(#i19)"/>
<rect x="1642" y="184" width="251" height="3" fill="url(#i20)"/>
<rect x="1642" y="187" width="251" height="3" fill="url(#i21)"/>
<rect x="1642" y="190" width="251" height="3" fill="url(#i22)"/>
<rect x="1642" y="193" width="251" height="3" fill="url(#i23)"/>
<rect x="1642" y="196" width="251" height="3" fill="url(#i24)"/>
<rect x="1642" y="199" width="251" height="3" fill="url(#i25)"/>
<rect x="1642" y="202" width="251" height="3" fill="url(#i26)"/>
<rect x="1642" y="205" width="251" height="3" fill="url(#i27)"/>
<rect x="1642" y="208" width="251" height="3" fill="url(#i28)"/>
<rect x="1642" y="211" width="251" height="3" fill="url(#i29)"/>
<rect x="1642" y="214" width="251" height="3" fill="url(#i30)"/>
<rect x="1642" y="217" width="251" height="3" fill="url(#i31)"/>
<rect x="1642" y="220" width="251" height="3" fill="url(#i32)"/>
<rect x="1642" y="223" width="251" height="3" fill="url(#i33)"/>
<rect x="1642" y="226" width="251" height="3" fill="url(#i34)"/>
<rect x="1642" y="229" width="251" height="3" fill="url(#i35)"/>
<rect x="1642" y="232" width="251" height="3" fill="url(#i36)"/>
<rect x="1642" y="235" width="251" height="3" fill="url(#i37)"/>
<rect x="1642" y="238" width="251" height="3" fill="url(#i38)"/>
<rect x="1642" y="241" width="251" height="3" fill="url(#i39)"/>
<rect x="1642" y="244" width="251" height="3" fill="url(#i40)"/>
<rect x="1642" y="247" width="251" height="3" fill="url(#i41)"/>
<rect x="1642" y="250" width="251" height="3" fill="url(#i42)"/>
<rect x="1642" y="253" width="251" height="3" fill="url(#i43)"/>
<rect x="1642" y="256" width="251" height="3" fill="url(#i44)"/>
<rect x="1642" y="259" width="251" height="3" fill="url(#i45)"/>
<rect x="1642" y="262" width="251" height="3" fill="url(#i46)"/>
<rect x="1642" y="265" width="251" height="3" fill="url(#i47)"/>
<rect x="1642" y="268" width="251" height="3" fill="url(#i48)"/>
<rect x="1642" y="271" width="251" height="3" fill="url(#i49)"/>
<rect x="1642" y="274" width="251" height="3" fill="url(#i50)"/>
<rect x="1642" y="277" width="251" height="3" fill="url(#i51)"/>
<rect x="1642" y="280" width="251" height="3" fill="url(#i52)"/>
<rect x="1642" y="283" width="251" height="3" fill="url(#i53)"/>
<rect x="1642" y="286" width="251" height="3" fill="url(#i54)"/>
<rect x="1642" y="289" width="251" height="3" fill="url(#i55)"/>
<rect x="1642" y="292" width="251" height="3" fill="url(#i56)"/>
<rect x="1642" y="295" width="251" height="3" fill="url(#i57)"/>
<rect x="1642" y="298" width="251" height="3" fill="url(#i58)"/>
<rect x="1642" y="301" width="251" height="3" fill="url(#i59)"/>
<rect x="1642" y="304" width="251" height="3" fill="url(#i60)"/>
<rect x="1642" y="307" width="251" height="3" fill="url(#i61)"/>
<rect x="1642" y="310" width="251" height="3" fill="url(#i62)"/>
<rect x="1642" y="313" width="251" height="3" fill="url(#i63)"/>
<rect x="1642" y="316" width="251" height="3" fill="url(#i64)"/>
<rect x="1642" y="319" width="251" height="3" fill="url(#i65)"/>
<rect x="1642" y="322" width="251" height="3" fill="url(#i66)"/>
<rect x="1642" y="325" width="251" height="3" fill="url(#i67)"/>
<rect x="1642" y="328" width="251" height="3" fill="url(#i68)"/>
<rect x="1642" y="331" width="251" height="3" fill="url(#i69)"/>
</g>
<polygon points="1637.3,142.67 1897.3,315.9 1897.3,119.25 1637.3,119.25" fill="#000" opacity=".4"/>
</g>
<rect x="1642.3" y="124.25" width="250.0" height="209.75" fill="none" stroke="#9a9a9a" stroke-width="1.4"/>
<rect x="1757.9" y="220.7" width="15.2" height="15.2" fill="none" stroke="#fff" stroke-width="1.5"/>
<circle cx="1751.5" cy="228.3" r="4.8" fill="#b4b408" stroke="#000" stroke-width="1.2"/>
</svg>
<div class="abs" style="left:436.3px;top:516.5px;width:675px;height:185.4px;background:#000"></div>
<div class="abs" style="left:460px;top:524.4px;width:114px;height:151.6px;border:2px solid #ececec;background:linear-gradient(#b9bda0 0,#b9bda0 49.7%,#c0c0a3 49.7%,#c0c0a3 100%)"></div>
<span class="t" style="left:503.48px;top:681.75px;font-size:13.41px;color:#fff;">20%</span>
<div class="abs" style="left:591px;top:524.4px;width:114px;height:151.6px;border:2px solid #ececec;background:linear-gradient(#babc87 0,#babc87 49.7%,#c1c087 49.7%,#c1c087 100%)"></div>
<span class="t" style="left:634.48px;top:681.75px;font-size:13.41px;color:#fff;">40%</span>
<div class="abs" style="left:723.5px;top:524.4px;width:114px;height:151.6px;border:2px solid #ececec;background:linear-gradient(#b9bc6e 0,#b9bc6e 49.7%,#c0bf6c 49.7%,#c0bf6c 100%)"></div>
<span class="t" style="left:766.98px;top:681.75px;font-size:13.41px;color:#fff;">60%</span>
<div class="abs" style="left:855px;top:524.4px;width:114px;height:151.6px;border:2px solid #ececec;background:linear-gradient(#babb4e 0,#babb4e 49.7%,#bfbe4c 49.7%,#bfbe4c 100%)"></div>
<span class="t" style="left:898.48px;top:681.75px;font-size:13.41px;color:#fff;">80%</span>
<div class="abs" style="left:987px;top:524.4px;width:114px;height:151.6px;border:2px solid #ececec;background:linear-gradient(#c0c008 0,#c0c008 49.7%,#c2c200 49.7%,#c2c200 100%)"></div>
<span class="t" style="left:1026.75px;top:681.75px;font-size:13.41px;color:#fff;">100%</span>
<span class="t" style="left:438.88px;top:578.3px;font-size:14.25px;color:#fff;transform:rotate(-90deg);transform-origin:0 0">Actual</span>
<span class="t" style="left:438.88px;top:663.3px;font-size:14.25px;color:#fff;transform:rotate(-90deg);transform-origin:0 0">Target</span>
<span class="t" style="left:25.6px;top:757.97px;font-size:32.4px;color:#f2f2f2;transform:scaleX(1.05);">Current Reading</span>
<span class="t" style="left:25.6px;top:810.42px;font-size:28.21px;color:#f2f2f2;transform:scaleX(1);">x: 0,4163</span>
<span class="t" style="left:25.6px;top:857.02px;font-size:28.21px;color:#f2f2f2;transform:scaleX(1.01);">y: 0,5051</span>
<span class="t" style="left:25.6px;top:903.62px;font-size:28.21px;color:#f2f2f2;transform:scaleX(1);">fL: 55,1</span>
<span class="t" style="left:25.6px;top:950.22px;font-size:28.21px;color:#f2f2f2;transform:scaleX(1.06);">cd/m²: 188,78</span>
<div class="abs" style="left:747.8px;top:735.8px;width:799.9px;height:34.5px;background:linear-gradient(#2b2b2b 0,#2b2b2b 16%,#323232 16%,#303030 49%,#1c1c1c 49%,#111 100%)"></div>
<div class="abs" style="left:725.5px;top:735.8px;width:22.3px;height:34.5px;background:#000"></div>
<span class="t" style="left:937.8px;top:746.07px;font-size:17.4px;color:#f4f4f4;transform:scaleX(1.34);">20%</span>
<span class="t" style="left:1061.35px;top:746.07px;font-size:17.4px;color:#f4f4f4;transform:scaleX(1.34);">40%</span>
<span class="t" style="left:1184.9px;top:746.07px;font-size:17.4px;color:#f4f4f4;transform:scaleX(1.34);">60%</span>
<span class="t" style="left:1308.45px;top:746.07px;font-size:17.4px;color:#f4f4f4;transform:scaleX(1.34);">80%</span>
<span class="t" style="left:1432px;top:746.07px;font-size:17.4px;color:#f4f4f4;transform:scaleX(1.34);">100%</span>
<div class="abs" style="left:747.8px;top:770.3px;width:799.9px;height:32.5px;background:#414141"></div>
<div class="abs" style="left:725.5px;top:770.3px;width:22.3px;height:32.5px;background:linear-gradient(#2c2c2c,#1e1e1e)"></div>
<span class="t" style="left:755px;top:779.17px;font-size:18.7px;color:#f4f4f4;transform:scaleX(1.24);">x: CIE31</span>
<span class="t" style="left:937.5px;top:779.17px;font-size:18.7px;color:#f4f4f4;transform:scaleX(1.35);">0,3320</span>
<span class="t" style="left:1061.05px;top:779.17px;font-size:18.7px;color:#f4f4f4;transform:scaleX(1.35);">0,3525</span>
<span class="t" style="left:1184.6px;top:779.17px;font-size:18.7px;color:#f4f4f4;transform:scaleX(1.35);">0,3723</span>
<span class="t" style="left:1308.15px;top:779.17px;font-size:18.7px;color:#f4f4f4;transform:scaleX(1.35);">0,3929</span>
<span class="t" style="left:1431.7px;top:779.17px;font-size:18.7px;color:#f4f4f4;transform:scaleX(1.35);">0,4163</span>
<div class="abs" style="left:747.8px;top:802.8px;width:799.9px;height:32.5px;background:#818181"></div>
<div class="abs" style="left:725.5px;top:802.8px;width:22.3px;height:32.5px;background:linear-gradient(#2c2c2c,#1e1e1e)"></div>
<span class="t" style="left:755px;top:811.67px;font-size:18.7px;color:#f4f4f4;transform:scaleX(1.25);">y: CIE31</span>
<span class="t" style="left:937.5px;top:811.67px;font-size:18.7px;color:#f4f4f4;transform:scaleX(1.35);">0,3660</span>
<span class="t" style="left:1061.05px;top:811.67px;font-size:18.7px;color:#f4f4f4;transform:scaleX(1.35);">0,3993</span>
<span class="t" style="left:1184.6px;top:811.67px;font-size:18.7px;color:#f4f4f4;transform:scaleX(1.35);">0,4326</span>
<span class="t" style="left:1308.15px;top:811.67px;font-size:18.7px;color:#f4f4f4;transform:scaleX(1.35);">0,4664</span>
<span class="t" style="left:1431.7px;top:811.67px;font-size:18.7px;color:#f4f4f4;transform:scaleX(1.35);">0,5051</span>
<div class="abs" style="left:747.8px;top:835.3px;width:799.9px;height:32.5px;background:#414141"></div>
<div class="abs" style="left:725.5px;top:835.3px;width:22.3px;height:32.5px;background:linear-gradient(#2c2c2c,#1e1e1e)"></div>
<span class="t" style="left:755px;top:844.17px;font-size:18.7px;color:#f4f4f4;transform:scaleX(1.35);">Y</span>
<span class="t" style="left:937.5px;top:844.17px;font-size:18.7px;color:#f4f4f4;transform:scaleX(1.35);">198,2261</span>
<span class="t" style="left:1061.05px;top:844.17px;font-size:18.7px;color:#f4f4f4;transform:scaleX(1.35);">194,8665</span>
<span class="t" style="left:1184.6px;top:844.17px;font-size:18.7px;color:#f4f4f4;transform:scaleX(1.35);">192,8859</span>
<span class="t" style="left:1308.15px;top:844.17px;font-size:18.7px;color:#f4f4f4;transform:scaleX(1.35);">190,6611</span>
<span class="t" style="left:1431.7px;top:844.17px;font-size:18.7px;color:#f4f4f4;transform:scaleX(1.35);">188,7814</span>
<div class="abs" style="left:747.8px;top:867.8px;width:799.9px;height:32.5px;background:#818181"></div>
<div class="abs" style="left:725.5px;top:867.8px;width:22.3px;height:32.5px;background:linear-gradient(#2c2c2c,#1e1e1e)"></div>
<span class="t" style="left:755px;top:876.67px;font-size:18.7px;color:#f4f4f4;transform:scaleX(1.31);">Target x:CIE31</span>
<span class="t" style="left:937.5px;top:876.67px;font-size:18.7px;color:#f4f4f4;transform:scaleX(1.35);">0,3344</span>
<span class="t" style="left:1061.05px;top:876.67px;font-size:18.7px;color:#f4f4f4;transform:scaleX(1.35);">0,3564</span>
<span class="t" style="left:1184.6px;top:876.67px;font-size:18.7px;color:#f4f4f4;transform:scaleX(1.35);">0,3773</span>
<span class="t" style="left:1308.15px;top:876.67px;font-size:18.7px;color:#f4f4f4;transform:scaleX(1.35);">0,3969</span>
<span class="t" style="left:1431.7px;top:876.67px;font-size:18.7px;color:#f4f4f4;transform:scaleX(1.35);">0,4193</span>
<div class="abs" style="left:747.8px;top:900.3px;width:799.9px;height:32.5px;background:#414141"></div>
<div class="abs" style="left:725.5px;top:900.3px;width:22.3px;height:32.5px;background:linear-gradient(#2c2c2c,#1e1e1e)"></div>
<span class="t" style="left:755px;top:909.17px;font-size:18.7px;color:#f4f4f4;transform:scaleX(1.31);">Target y:CIE31</span>
<span class="t" style="left:937.5px;top:909.17px;font-size:18.7px;color:#f4f4f4;transform:scaleX(1.35);">0,3648</span>
<span class="t" style="left:1061.05px;top:909.17px;font-size:18.7px;color:#f4f4f4;transform:scaleX(1.35);">0,4013</span>
<span class="t" style="left:1184.6px;top:909.17px;font-size:18.7px;color:#f4f4f4;transform:scaleX(1.35);">0,4358</span>
<span class="t" style="left:1308.15px;top:909.17px;font-size:18.7px;color:#f4f4f4;transform:scaleX(1.35);">0,4682</span>
<span class="t" style="left:1431.7px;top:909.17px;font-size:18.7px;color:#f4f4f4;transform:scaleX(1.35);">0,5053</span>
<div class="abs" style="left:747.8px;top:932.8px;width:799.9px;height:32.5px;background:#818181"></div>
<div class="abs" style="left:725.5px;top:932.8px;width:22.3px;height:32.5px;background:linear-gradient(#2c2c2c,#1e1e1e)"></div>
<span class="t" style="left:755px;top:941.67px;font-size:18.7px;color:#f4f4f4;transform:scaleX(1.36);">Target Y</span>
<span class="t" style="left:937.5px;top:941.67px;font-size:18.7px;color:#f4f4f4;transform:scaleX(1.35);">207,9200</span>
<span class="t" style="left:1061.05px;top:941.67px;font-size:18.7px;color:#f4f4f4;transform:scaleX(1.35);">204,2704</span>
<span class="t" style="left:1184.6px;top:941.67px;font-size:18.7px;color:#f4f4f4;transform:scaleX(1.35);">201,4662</span>
<span class="t" style="left:1308.15px;top:941.67px;font-size:18.7px;color:#f4f4f4;transform:scaleX(1.35);">199,2655</span>
<span class="t" style="left:1431.7px;top:941.67px;font-size:18.7px;color:#f4f4f4;transform:scaleX(1.35);">197,1378</span>
<div class="btn" style="left:1.5px;top:996.8px;width:33px;height:50px;background:linear-gradient(#929292,#6a6a6a 60%,#5e5e5e);border-color:#a0a0a0"></div>
<div class="abs" style="left:12px;top:999px;width:11px;height:11px;border-radius:50%;background:radial-gradient(circle at 50% 35%,#666,#8a8a8a)"></div>
<div class="abs" style="left:14px;top:1001.5px;border:3.5px solid transparent;border-bottom:4px solid #222;border-top:none"></div>
<div class="abs" style="left:4.5px;top:1017px;width:26.5px;height:23px;background:#ffff00;border-radius:3px;border:1px solid #c8c800"></div>
<div class="btn" style="left:38.8px;top:996.8px;width:112.5px;height:50px;background:linear-gradient(#8e8e8e,#727272 50%,#5e5e5e);border-color:#9c9c9c;border-radius:4px"></div>
<div class="abs" style="left:43px;top:1002px;width:105px;height:26.2px;background:#c1c1a3;border-radius:3px;border:1px solid #a8a890"></div>
<span class="t" style="left:87.39px;top:1033.77px;font-size:7.6px;color:#2a2a2a;font-weight:bold;">20%</span>
<div class="btn" style="left:153px;top:996.8px;width:112.5px;height:50px;background:linear-gradient(#8e8e8e,#727272 50%,#5e5e5e);border-color:#9c9c9c;border-radius:4px"></div>
<div class="abs" style="left:157.2px;top:1002px;width:105px;height:26.2px;background:#c2c187;border-radius:3px;border:1px solid #a8a890"></div>
<span class="t" style="left:201.59px;top:1033.77px;font-size:7.6px;color:#2a2a2a;font-weight:bold;">40%</span>
<div class="btn" style="left:267.2px;top:996.8px;width:112.5px;height:50px;background:linear-gradient(#8e8e8e,#727272 50%,#5e5e5e);border-color:#9c9c9c;border-radius:4px"></div>
<div class="abs" style="left:271.4px;top:1002px;width:105px;height:26.2px;background:#c1c06c;border-radius:3px;border:1px solid #a8a890"></div>
<span class="t" style="left:315.79px;top:1033.77px;font-size:7.6px;color:#2a2a2a;font-weight:bold;">60%</span>
<div class="btn" style="left:381.4px;top:996.8px;width:112.5px;height:50px;background:linear-gradient(#8e8e8e,#727272 50%,#5e5e5e);border-color:#9c9c9c;border-radius:4px"></div>
<div class="abs" style="left:385.6px;top:1002px;width:105px;height:26.2px;background:#c0bf4c;border-radius:3px;border:1px solid #a8a890"></div>
<span class="t" style="left:429.99px;top:1033.77px;font-size:7.6px;color:#2a2a2a;font-weight:bold;">80%</span>
<div class="abs" style="left:495.6px;top:996.8px;width:112.5px;height:50px;background:linear-gradient(#161616,#242424);border:1px solid #2c2c2c;border-radius:4px"></div>
<div class="abs" style="left:499.8px;top:1002px;width:105px;height:26.2px;background:#c4c300;border-radius:3px;border:1px solid #b0af00"></div>
<span class="t" style="left:542.08px;top:1033.77px;font-size:7.6px;color:#fff;font-weight:bold;">100%</span>
<div class="btn" style="left:1678px;top:996.8px;width:35.7px;height:50px;background:linear-gradient(#909090,#6c6c6c 60%,#606060);border-color:#a0a0a0"></div>
<div class="abs" style="left:1678.5px;top:1011.5px;width:34.7px;height:1px;background:#555"></div>
<div class="abs" style="left:1690px;top:999px;width:11px;height:11px;border-radius:50%;background:radial-gradient(circle at 50% 35%,#777,#9a9a9a)"></div>
<div class="abs" style="left:1692px;top:1001.5px;border:3.5px solid transparent;border-bottom:4px solid #222;border-top:none"></div>
<div class="abs" style="left:1684.5px;top:1016.5px;width:22px;height:22px;border:1.5px solid #111;border-radius:3px;background:linear-gradient(#b8b8b8,#a0a0a0 50%,#8c8c8c 50%,#9a9a9a)"></div>
<div class="abs" style="left:1690px;top:1022px;width:11px;height:11px;background:#000"></div>
<div class="btn" style="left:1715px;top:996.8px;width:33.5px;height:22px;background:linear-gradient(#a6a6a6,#848484 50%,#6c6c6c);border-color:#b0b0b0;border-radius:2px"></div>
<div class="abs" style="left:1724.7px;top:1001.5px;width:14px;height:14px;border-radius:50%;background:radial-gradient(circle at 50% 35%,#8a8a8a,#a2a2a2)"></div>
<svg width="14" height="14" style="left:1724.7px;top:1001.5px" viewBox="-7 -7 14 14"><rect x="-2.6" y="-2.6" width="5.2" height="5.2" fill="#333"/></svg>
<div class="btn" style="left:1748.8px;top:996.8px;width:33.5px;height:22px;background:linear-gradient(#a6a6a6,#848484 50%,#6c6c6c);border-color:#b0b0b0;border-radius:2px"></div>
<div class="abs" style="left:1758.5px;top:1001.5px;width:14px;height:14px;border-radius:50%;background:radial-gradient(circle at 50% 35%,#8a8a8a,#a2a2a2)"></div>
<svg width="14" height="14" style="left:1758.5px;top:1001.5px" viewBox="-7 -7 14 14"><path d="M-2.2-3.4L3.4 0L-2.2 3.4Z" fill="#333"/></svg>
<div class="btn" style="left:1782.6px;top:996.8px;width:33.5px;height:22px;background:linear-gradient(#a6a6a6,#848484 50%,#6c6c6c);border-color:#b0b0b0;border-radius:2px"></div>
<div class="abs" style="left:1792.3px;top:1001.5px;width:14px;height:14px;border-radius:50%;background:radial-gradient(circle at 50% 35%,#8a8a8a,#a2a2a2)"></div>
<svg width="14" height="14" style="left:1792.3px;top:1001.5px" viewBox="-7 -7 14 14"><path d="M-2.2-3.4h-1.8v6.8h1.8M2.2-3.4h1.8v6.8h-1.8M-1.6 0h3.2" fill="none" stroke="#333" stroke-width="1.1"/></svg>
<div class="btn" style="left:1816.4px;top:996.8px;width:33.5px;height:22px;background:linear-gradient(#a6a6a6,#848484 50%,#6c6c6c);border-color:#b0b0b0;border-radius:2px"></div>
<div class="abs" style="left:1826.1px;top:1001.5px;width:14px;height:14px;border-radius:50%;background:radial-gradient(circle at 50% 35%,#8a8a8a,#a2a2a2)"></div>
<svg width="14" height="14" style="left:1826.1px;top:1001.5px" viewBox="-7 -7 14 14"><path d="M0 0c-1.2-2-4.4-2-4.4 0s3.2 2 4.4 0c1.2-2 4.4-2 4.4 0s-3.2 2-4.4 0z" fill="none" stroke="#333" stroke-width="1.2"/></svg>
<div class="btn" style="left:1850.2px;top:996.8px;width:33.5px;height:22px;background:linear-gradient(#a6a6a6,#848484 50%,#6c6c6c);border-color:#b0b0b0;border-radius:2px"></div>
<div class="abs" style="left:1859.9px;top:1001.5px;width:14px;height:14px;border-radius:50%;background:radial-gradient(circle at 50% 35%,#8a8a8a,#a2a2a2)"></div>
<svg width="14" height="14" style="left:1859.9px;top:1001.5px" viewBox="-7 -7 14 14"><path d="M-3.4-.6a3.5 3.5 0 0 1 6.2-1.6M3.4.6a3.5 3.5 0 0 1-6.2 1.6" fill="none" stroke="#333" stroke-width="1.4"/><path d="M3.6-4.2v2.8h-2.8zM-3.6 4.2v-2.8h2.8z" fill="#333"/></svg>
<div class="abs" style="left:1884.3px;top:997.3px;width:34.2px;height:22px;background:linear-gradient(#464646,#3a3a3a 50%,#2e2e2e);border-radius:0 3px 0 0"></div>
<div class="abs" style="left:1894.5px;top:1001.1px;width:14.6px;height:14.6px;border-radius:50%;background:linear-gradient(#2b2b2b,#2f2f2f 50%,#3d3d3d)"></div>
<div class="btn" style="left:1715px;top:1021px;width:101.5px;height:26px;background:linear-gradient(#a8a8a8,#8a8a8a 50%,#787878);border-color:#b8b8b8;border-radius:3px"></div>
<div class="abs" style="left:1730.5px;top:1025px;width:15px;height:15px;border-radius:50%;background:radial-gradient(circle at 50% 35%,#8c8c8c,#a6a6a6)"></div>
<span class="t" style="left:1733.1px;top:1025.77px;font-size:13.5px;color:#333;-webkit-text-stroke:.4px #333;">&#171;</span>
<span class="t" style="left:1757.5px;top:1024.76px;font-size:15.64px;color:#333;transform:scaleX(1.11);-webkit-text-stroke:.45px #333;">Back</span>
<div class="btn" style="left:1816.5px;top:1021px;width:101.5px;height:26px;background:linear-gradient(#a8a8a8,#8a8a8a 50%,#787878);border-color:#b8b8b8;border-radius:3px"></div>
<div class="abs" style="left:1891.5px;top:1025px;width:15px;height:15px;border-radius:50%;background:radial-gradient(circle at 50% 35%,#8c8c8c,#a6a6a6)"></div>
<span class="t" style="left:1894.1px;top:1025.77px;font-size:13.5px;color:#333;-webkit-text-stroke:.4px #333;">&#187;</span>
<span class="t" style="left:1837px;top:1024.76px;font-size:15.64px;color:#333;transform:scaleX(1.23);-webkit-text-stroke:.45px #333;">Next</span>
</body></html>
